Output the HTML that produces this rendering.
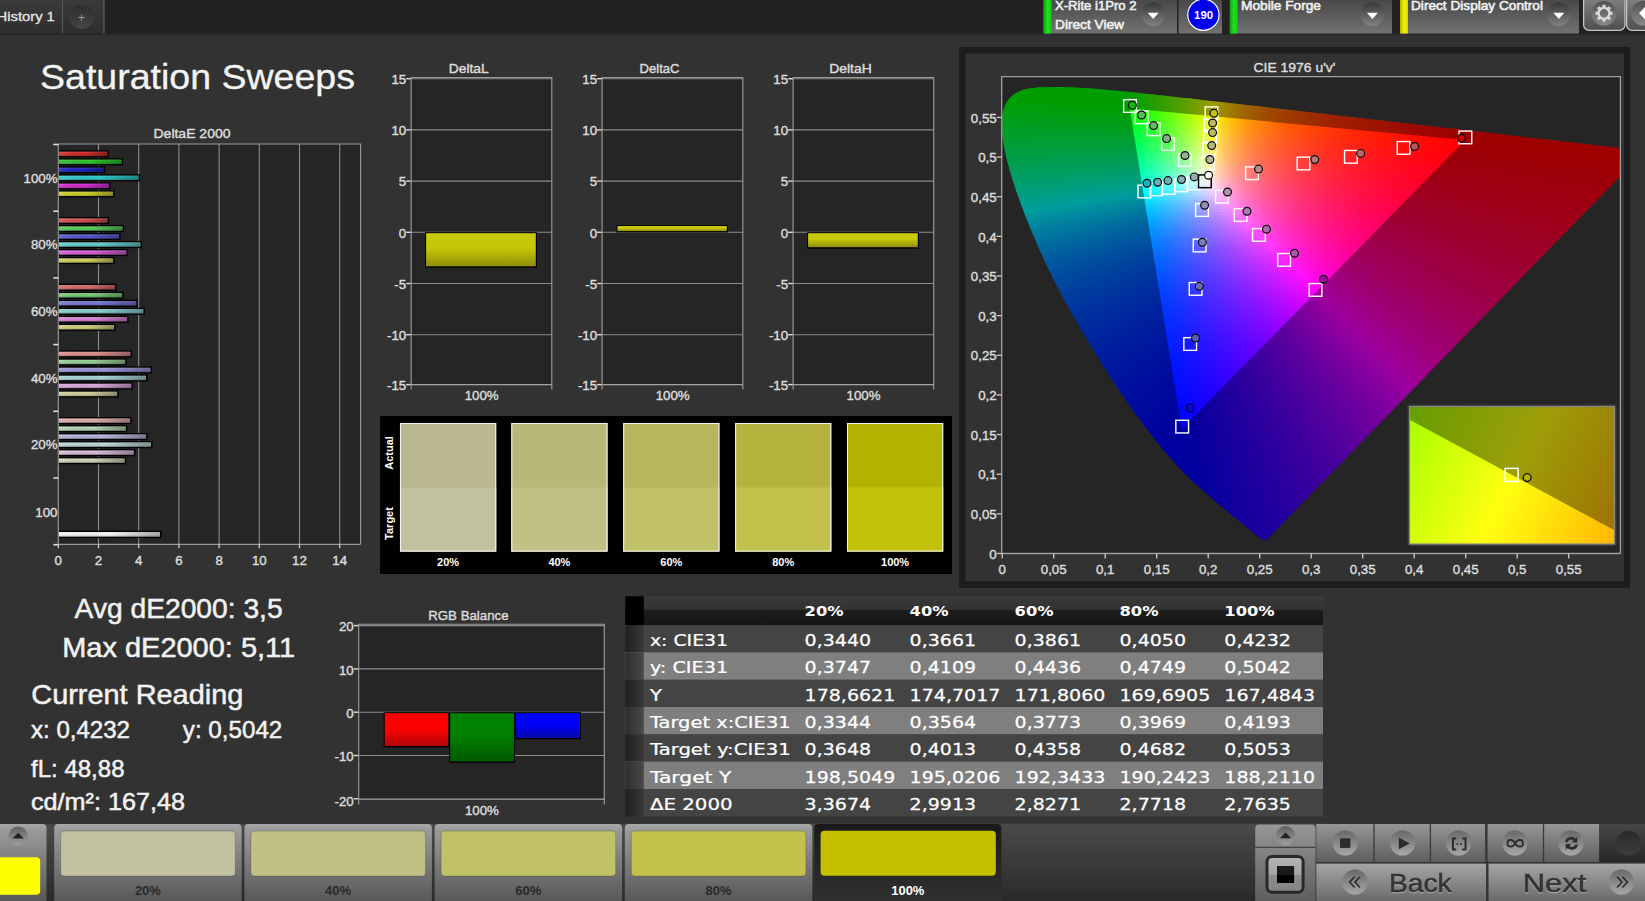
<!DOCTYPE html>
<html lang="en"><head><meta charset="utf-8"><title>Saturation Sweeps</title>
<style>
html,body{margin:0;padding:0;background:#323232;overflow:hidden}
body{width:1645px;height:901px;position:relative;font-family:"Liberation Sans",sans-serif}
svg{position:absolute;left:0;top:0;font-family:"Liberation Sans",sans-serif}
#cief{position:absolute;left:1001.7px;top:76.6px;width:618.7px;height:476.9px;overflow:hidden;clip-path:polygon(265.14px 462.86px,264px 463.38px,260.38px 462.63px,259.12px 461.88px,257.73px 460.92px,256.09px 459.68px,254.06px 458.08px,251.66px 456.14px,248.94px 453.88px,245.82px 451.27px,242.2px 448.27px,238.13px 444.97px,233.63px 441.36px,228.59px 437.25px,222.87px 432.48px,215.99px 426.66px,208.18px 419.99px,200.35px 413.19px,193.47px 407.01px,188.05px 401.94px,183.51px 397.51px,179.08px 392.91px,174.01px 387.34px,168.11px 380.67px,161.78px 373.29px,155.12px 365.21px,148.18px 356.42px,140.95px 346.89px,133.39px 336.64px,125.61px 325.7px,117.7px 314.14px,109.58px 301.81px,101.24px 288.73px,92.86px 275.21px,84.62px 261.5px,76.41px 247.5px,68.19px 233.11px,60.23px 218.65px,52.79px 204.44px,45.89px 190.37px,39.42px 176.35px,33.41px 162.67px,27.91px 149.62px,22.94px 137.18px,18.46px 125.23px,14.49px 113.92px,11.03px 103.41px,8.12px 93.74px,5.74px 84.84px,3.83px 76.64px,2.3px 69.06px,1.18px 62.18px,0.49px 55.99px,0.18px 50.36px,0.19px 45.15px,0.53px 40.38px,1.22px 36.09px,2.23px 32.23px,3.51px 28.72px,5.1px 25.57px,6.98px 22.81px,9.12px 20.4px,11.44px 18.29px,13.97px 16.52px,16.72px 15.1px,19.64px 13.94px,22.68px 12.97px,25.85px 12.21px,29.16px 11.68px,32.58px 11.31px,36.06px 11px,39.61px 10.76px,43.26px 10.62px,46.95px 10.56px,50.64px 10.52px,54.31px 10.5px,57.99px 10.53px,61.7px 10.6px,65.45px 10.7px,69.24px 10.83px,73.06px 11px,76.94px 11.19px,80.9px 11.42px,84.94px 11.68px,89.06px 11.96px,93.25px 12.27px,97.54px 12.61px,101.92px 12.98px,106.39px 13.38px,110.95px 13.8px,115.63px 14.24px,120.42px 14.7px,125.32px 15.19px,130.34px 15.7px,135.51px 16.24px,140.81px 16.79px,146.25px 17.37px,151.82px 17.97px,157.55px 18.59px,163.41px 19.24px,169.42px 19.9px,175.58px 20.59px,181.91px 21.3px,188.41px 22.03px,195.08px 22.77px,201.91px 23.54px,208.9px 24.33px,216.06px 25.15px,223.39px 25.98px,230.88px 26.84px,238.55px 27.72px,246.39px 28.61px,254.39px 29.53px,262.56px 30.47px,270.89px 31.42px,279.39px 32.4px,288.05px 33.39px,296.85px 34.4px,305.74px 35.42px,314.73px 36.45px,323.87px 37.5px,333.1px 38.56px,342.37px 39.63px,351.74px 40.71px,361.2px 41.81px,370.65px 42.91px,380px 43.99px,389.22px 45.05px,398.37px 46.11px,407.46px 47.15px,416.48px 48.19px,425.5px 49.23px,434.5px 50.27px,443.36px 51.29px,451.98px 52.28px,459.78px 53.17px,466.99px 54px,474.74px 54.88px,484.15px 55.96px,496.22px 57.35px,510.13px 58.97px,524.21px 60.6px,536.77px 62.05px,547.41px 63.28px,557.01px 64.38px,565.83px 65.39px,574.1px 66.34px,581.85px 67.24px,588.97px 68.07px,595.49px 68.82px,601.43px 69.51px,606.75px 70.12px,611.46px 70.65px,615.65px 71.13px,619.41px 71.56px,622.63px 71.93px,625.3px 72.24px,627.7px 72.52px,630.11px 72.8px,632.66px 73.09px,635.19px 73.38px,637.5px 73.65px,639.39px 73.87px,642.99px 74.29px)}#cief i{display:block;height:3px}
</style></head><body>
<svg id="layer1" width="1645" height="901" viewBox="0 0 1645 901">
<defs>
<linearGradient id="gTab" x1="0" y1="0" x2="0" y2="1"><stop offset="0" stop-color="#3a3a3a"/><stop offset="1" stop-color="#2e2e2e"/></linearGradient>
<linearGradient id="gPlus" x1="0" y1="0" x2="0" y2="1"><stop offset="0" stop-color="#2c2c2c"/><stop offset="1" stop-color="#464646"/></linearGradient>
<linearGradient id="gPanel" x1="0" y1="0" x2="0" y2="1"><stop offset="0" stop-color="#484848"/><stop offset="1" stop-color="#727272"/></linearGradient>
<linearGradient id="gBtn" x1="0" y1="0" x2="0" y2="1"><stop offset="0" stop-color="#868686"/><stop offset="1" stop-color="#4e4e4e"/></linearGradient>
<linearGradient id="gDD" x1="0" y1="0" x2="0" y2="1"><stop offset="0" stop-color="#383838"/><stop offset="1" stop-color="#828282"/></linearGradient>
<linearGradient id="gDD2" x1="0" y1="0" x2="0" y2="1"><stop offset="0" stop-color="#505050"/><stop offset="1" stop-color="#8a8a8a"/></linearGradient>
<linearGradient id="gGreen" x1="0" y1="0" x2="1" y2="0"><stop offset="0" stop-color="#0fa00f"/><stop offset=".5" stop-color="#1fe01f"/><stop offset="1" stop-color="#14c814"/></linearGradient>
<linearGradient id="gYel" x1="0" y1="0" x2="1" y2="0"><stop offset="0" stop-color="#b0b000"/><stop offset=".5" stop-color="#f4f400"/><stop offset="1" stop-color="#d8d800"/></linearGradient>

<linearGradient id="gBarV" x1="0" y1="0" x2="0" y2="1"><stop offset="0" stop-color="#fff" stop-opacity=".22"/><stop offset=".45" stop-color="#fff" stop-opacity="0"/><stop offset="1" stop-color="#000" stop-opacity=".28"/></linearGradient>
<linearGradient id="gBarH" x1="0" y1="0" x2="1" y2="0"><stop offset="0" stop-color="#fff" stop-opacity=".12"/><stop offset=".5" stop-color="#000" stop-opacity="0"/><stop offset="1" stop-color="#000" stop-opacity=".32"/></linearGradient>

<linearGradient id="gYelBar" x1="0" y1="0" x2="0" y2="1"><stop offset="0" stop-color="#c8c808"/><stop offset=".45" stop-color="#c6c606"/><stop offset="1" stop-color="#8e8e0a"/></linearGradient>
<linearGradient id="gR" x1="0" y1="0" x2="0" y2="1"><stop offset="0" stop-color="#ff0000"/><stop offset=".5" stop-color="#fa0000"/><stop offset="1" stop-color="#b00808"/></linearGradient>
<linearGradient id="gG" x1="0" y1="0" x2="0" y2="1"><stop offset="0" stop-color="#008200"/><stop offset=".5" stop-color="#007e00"/><stop offset="1" stop-color="#005a00"/></linearGradient>
<linearGradient id="gB" x1="0" y1="0" x2="0" y2="1"><stop offset="0" stop-color="#0000ff"/><stop offset=".5" stop-color="#0000f6"/><stop offset="1" stop-color="#0808a8"/></linearGradient>

<linearGradient id="gInset" gradientUnits="userSpaceOnUse" x1="1395" y1="420" x2="1630" y2="535"><stop offset="0" stop-color="#a0ff00"/><stop offset=".5" stop-color="#ffff10"/><stop offset="1" stop-color="#ffb000"/></linearGradient>

<linearGradient id="gTH" x1="0" y1="0" x2="0" y2="1"><stop offset="0" stop-color="#3a3a3a"/><stop offset=".46" stop-color="#323232"/><stop offset=".5" stop-color="#1c1c1c"/><stop offset="1" stop-color="#161616"/></linearGradient>
<linearGradient id="gSel2" x1="0" y1="0" x2="1" y2="0"><stop offset="0" stop-color="#2c2c2c"/><stop offset="1" stop-color="#4a4a4a"/></linearGradient>
<linearGradient id="gSel" x1="0" y1="0" x2="1" y2="0"><stop offset="0" stop-color="#202020"/><stop offset="1" stop-color="#383838"/></linearGradient>

<linearGradient id="gBotBg" x1="0" y1="0" x2="0" y2="1"><stop offset="0" stop-color="#4a4a4a"/><stop offset="1" stop-color="#2a2a2a"/></linearGradient>
<linearGradient id="gSelP" x1="0" y1="0" x2="0" y2="1"><stop offset="0" stop-color="#1a1a1a"/><stop offset="1" stop-color="#303030"/></linearGradient>
<linearGradient id="gPan" x1="0" y1="0" x2="0" y2="1"><stop offset="0" stop-color="#a8a8a8"/><stop offset=".08" stop-color="#9a9a9a"/><stop offset="1" stop-color="#585858"/></linearGradient>
<linearGradient id="gPan2" x1="0" y1="0" x2="0" y2="1"><stop offset="0" stop-color="#969696"/><stop offset="1" stop-color="#5e5e5e"/></linearGradient>
<linearGradient id="gPan3" x1="0" y1="0" x2="0" y2="1"><stop offset="0" stop-color="#a6a6a6"/><stop offset="1" stop-color="#6a6a6a"/></linearGradient>
<linearGradient id="gUp" x1="0" y1="0" x2="0" y2="1"><stop offset="0" stop-color="#606060"/><stop offset="1" stop-color="#a0a0a0"/></linearGradient>
<linearGradient id="gIco" x1="0" y1="0" x2="0" y2="1"><stop offset="0" stop-color="#686868"/><stop offset="1" stop-color="#a8a8a8"/></linearGradient>
<linearGradient id="gStopBtn" x1="0" y1="0" x2="0" y2="1"><stop offset="0" stop-color="#b4b4b4"/><stop offset=".5" stop-color="#a4a4a4"/><stop offset=".52" stop-color="#8c8c8c"/><stop offset="1" stop-color="#848484"/></linearGradient>
<linearGradient id="gStopSq" x1="0" y1="0" x2="0" y2="1"><stop offset="0" stop-color="#1c1c1c"/><stop offset=".5" stop-color="#181818"/><stop offset=".52" stop-color="#000"/><stop offset="1" stop-color="#000"/></linearGradient>
<linearGradient id="gDarkR" x1="0" y1="0" x2="0" y2="1"><stop offset="0" stop-color="#464646"/><stop offset="1" stop-color="#282828"/></linearGradient>
<linearGradient id="gDarkC" x1="0" y1="0" x2="0" y2="1"><stop offset="0" stop-color="#2a2a2a"/><stop offset="1" stop-color="#3c3c3c"/></linearGradient>
</defs>
<g id="topbar"><rect x="0" y="0" width="1645" height="34.5" fill="#222"/>
<rect x="0" y="0" width="62" height="33.5" fill="url(#gTab)"/>
<rect x="63" y="0" width="41" height="33.5" fill="url(#gTab)"/>
<line x1="62.5" y1="0" x2="62.5" y2="33.5" stroke="#5a5a5a" stroke-width="1"/>
<line x1="104" y1="0" x2="104" y2="33.5" stroke="#6a6a6a" stroke-width="1"/>
<text x="-3.4" y="21.3" font-size="13.6" fill="#e6e6e6" stroke="#e6e6e6" stroke-width="0.3" textLength="58.2" lengthAdjust="spacingAndGlyphs">History 1</text>
<circle cx="81.5" cy="17" r="12" fill="url(#gPlus)"/>
<text x="81.5" y="22" font-size="13" fill="#999" text-anchor="middle">+</text>
<rect x="1043.5" y="0" width="133.5" height="33.5" fill="url(#gPanel)"/>
<rect x="1043.5" y="0" width="8" height="33.5" fill="url(#gGreen)"/>
<text x="1055" y="9.8" font-size="12.2" fill="#f0f0f0" stroke="#f0f0f0" stroke-width="0.55" textLength="81.5" lengthAdjust="spacingAndGlyphs">X-Rite i1Pro 2</text>
<text x="1055" y="28.6" font-size="12.2" fill="#f0f0f0" stroke="#f0f0f0" stroke-width="0.55" textLength="69" lengthAdjust="spacingAndGlyphs">Direct View</text>
<circle cx="1153.2" cy="14.3" r="12" fill="url(#gDD)"/>
<path d="M1147.7 12.7 h11 l-5.5 6.4z" fill="#fff"/>
<rect x="1178.5" y="0" width="43.5" height="33.5" fill="url(#gPanel)"/>
<circle cx="1203.4" cy="14.7" r="15.6" fill="#0000ee" stroke="#fff" stroke-width="1.2"/>
<text x="1203.6" y="19" font-size="11.5" fill="#fff" text-anchor="middle" font-weight="700" textLength="19" lengthAdjust="spacingAndGlyphs">190</text>
<rect x="1229.8" y="0" width="162.2" height="33.5" fill="url(#gPanel)"/>
<rect x="1229.8" y="0" width="8" height="33.5" fill="url(#gGreen)"/>
<text x="1241" y="9.8" font-size="12.2" fill="#f0f0f0" stroke="#f0f0f0" stroke-width="0.55" textLength="80" lengthAdjust="spacingAndGlyphs">Mobile Forge</text>
<circle cx="1372.4" cy="14.3" r="12" fill="url(#gDD)"/>
<path d="M1366.9 12.7 h11 l-5.5 6.4z" fill="#fff"/>
<rect x="1400" y="0" width="179" height="33.5" fill="url(#gPanel)"/>
<rect x="1400" y="0" width="8" height="33.5" fill="url(#gYel)"/>
<text x="1411" y="9.8" font-size="12.2" fill="#f0f0f0" stroke="#f0f0f0" stroke-width="0.55" textLength="132" lengthAdjust="spacingAndGlyphs">Direct Display Control</text>
<circle cx="1558.8" cy="14.3" r="12" fill="url(#gDD)"/>
<path d="M1553.3 12.7 h11 l-5.5 6.4z" fill="#fff"/>
<rect x="1583.6" y="-6" width="41.4" height="36.4" rx="5.5" fill="url(#gBtn)" stroke="#c4c4c4" stroke-width="1.3"/>
<circle cx="1604" cy="13.3" r="12.3" fill="url(#gDD2)"/>
<path d="M1612.48 11.85 L1612.48 14.75 L1610.36 15.06 L1609.74 16.55 L1611.02 18.26 L1608.96 20.32 L1607.25 19.04 L1605.76 19.66 L1605.45 21.78 L1602.55 21.78 L1602.24 19.66 L1600.75 19.04 L1599.04 20.32 L1596.98 18.26 L1598.26 16.55 L1597.64 15.06 L1595.52 14.75 L1595.52 11.85 L1597.64 11.54 L1598.26 10.05 L1596.98 8.34 L1599.04 6.28 L1600.75 7.56 L1602.24 6.94 L1602.55 4.82 L1605.45 4.82 L1605.76 6.94 L1607.25 7.56 L1608.96 6.28 L1611.02 8.34 L1609.74 10.05 L1610.36 11.54Z M1604 9.1 a4.2 4.2 0 1 0 0.01 0z" fill="#d8d8d8" fill-rule="evenodd"/>
<rect x="1626.6" y="-6" width="41.4" height="36.4" rx="5.5" fill="url(#gBtn)" stroke="#c4c4c4" stroke-width="1.3"/>
<circle cx="1643.5" cy="13.3" r="12.3" fill="url(#gDD2)"/>
<path d="M1646 6 L1639 13.2 L1646 20.4z" fill="#fff"/></g>
<g id="left"><text x="40" y="89" font-size="35.2" fill="#f4f4f4" stroke="#f4f4f4" stroke-width="0.3" textLength="315" lengthAdjust="spacingAndGlyphs">Saturation Sweeps</text>
<text x="192" y="138" font-size="13" fill="#dcdcdc" stroke="#dcdcdc" stroke-width="0.4" text-anchor="middle" textLength="77" lengthAdjust="spacingAndGlyphs">DeltaE 2000</text>
<rect x="58.3" y="144" width="302.3" height="400.3" fill="#252525"/>
<line x1="98.5" y1="144" x2="98.5" y2="544.3" stroke="#8c8c8c" stroke-width="1.1"/>
<line x1="138.7" y1="144" x2="138.7" y2="544.3" stroke="#8c8c8c" stroke-width="1.1"/>
<line x1="178.9" y1="144" x2="178.9" y2="544.3" stroke="#8c8c8c" stroke-width="1.1"/>
<line x1="219.1" y1="144" x2="219.1" y2="544.3" stroke="#8c8c8c" stroke-width="1.1"/>
<line x1="259.3" y1="144" x2="259.3" y2="544.3" stroke="#8c8c8c" stroke-width="1.1"/>
<line x1="299.5" y1="144" x2="299.5" y2="544.3" stroke="#8c8c8c" stroke-width="1.1"/>
<line x1="339.7" y1="144" x2="339.7" y2="544.3" stroke="#8c8c8c" stroke-width="1.1"/>
<path d="M58.3 544.3 V144 H360.6 V544.3" fill="none" stroke="#9a9a9a" stroke-width="1.15"/>
<line x1="58.3" y1="544.3" x2="360.6" y2="544.3" stroke="#9a9a9a" stroke-width="1.3"/>
<line x1="53.3" y1="144.5" x2="58.3" y2="144.5" stroke="#ddd" stroke-width="1.6"/>
<line x1="53.3" y1="211.2" x2="58.3" y2="211.2" stroke="#ddd" stroke-width="1.6"/>
<line x1="53.3" y1="277.9" x2="58.3" y2="277.9" stroke="#ddd" stroke-width="1.6"/>
<line x1="53.3" y1="344.6" x2="58.3" y2="344.6" stroke="#ddd" stroke-width="1.6"/>
<line x1="53.3" y1="411.3" x2="58.3" y2="411.3" stroke="#ddd" stroke-width="1.6"/>
<line x1="53.3" y1="478" x2="58.3" y2="478" stroke="#ddd" stroke-width="1.6"/>
<line x1="53.3" y1="544.7" x2="58.3" y2="544.7" stroke="#ddd" stroke-width="1.6"/>
<line x1="58.3" y1="544.3" x2="58.3" y2="548.3" stroke="#ccc" stroke-width="1.3"/>
<text x="58.3" y="565" font-size="13.3" fill="#dcdcdc" stroke="#dcdcdc" stroke-width="0.4" text-anchor="middle">0</text>
<line x1="98.5" y1="544.3" x2="98.5" y2="548.3" stroke="#ccc" stroke-width="1.3"/>
<text x="98.5" y="565" font-size="13.3" fill="#dcdcdc" stroke="#dcdcdc" stroke-width="0.4" text-anchor="middle">2</text>
<line x1="138.7" y1="544.3" x2="138.7" y2="548.3" stroke="#ccc" stroke-width="1.3"/>
<text x="138.7" y="565" font-size="13.3" fill="#dcdcdc" stroke="#dcdcdc" stroke-width="0.4" text-anchor="middle">4</text>
<line x1="178.9" y1="544.3" x2="178.9" y2="548.3" stroke="#ccc" stroke-width="1.3"/>
<text x="178.9" y="565" font-size="13.3" fill="#dcdcdc" stroke="#dcdcdc" stroke-width="0.4" text-anchor="middle">6</text>
<line x1="219.1" y1="544.3" x2="219.1" y2="548.3" stroke="#ccc" stroke-width="1.3"/>
<text x="219.1" y="565" font-size="13.3" fill="#dcdcdc" stroke="#dcdcdc" stroke-width="0.4" text-anchor="middle">8</text>
<line x1="259.3" y1="544.3" x2="259.3" y2="548.3" stroke="#ccc" stroke-width="1.3"/>
<text x="259.3" y="565" font-size="13.3" fill="#dcdcdc" stroke="#dcdcdc" stroke-width="0.4" text-anchor="middle">10</text>
<line x1="299.5" y1="544.3" x2="299.5" y2="548.3" stroke="#ccc" stroke-width="1.3"/>
<text x="299.5" y="565" font-size="13.3" fill="#dcdcdc" stroke="#dcdcdc" stroke-width="0.4" text-anchor="middle">12</text>
<line x1="339.7" y1="544.3" x2="339.7" y2="548.3" stroke="#ccc" stroke-width="1.3"/>
<text x="339.7" y="565" font-size="13.3" fill="#dcdcdc" stroke="#dcdcdc" stroke-width="0.4" text-anchor="middle">14</text>
<text x="57.5" y="182.65" font-size="13.3" fill="#dcdcdc" stroke="#dcdcdc" stroke-width="0.4" text-anchor="end">100%</text>
<text x="57.5" y="249.35" font-size="13.3" fill="#dcdcdc" stroke="#dcdcdc" stroke-width="0.4" text-anchor="end">80%</text>
<text x="57.5" y="316.05" font-size="13.3" fill="#dcdcdc" stroke="#dcdcdc" stroke-width="0.4" text-anchor="end">60%</text>
<text x="57.5" y="382.75" font-size="13.3" fill="#dcdcdc" stroke="#dcdcdc" stroke-width="0.4" text-anchor="end">40%</text>
<text x="57.5" y="449.45" font-size="13.3" fill="#dcdcdc" stroke="#dcdcdc" stroke-width="0.4" text-anchor="end">20%</text>
<text x="57.5" y="516.95" font-size="13.3" fill="#dcdcdc" stroke="#dcdcdc" stroke-width="0.4" text-anchor="end">100</text>
<rect x="58.9" y="150.25" width="50.1" height="7.2" fill="#000"/>
<rect x="58.9" y="151.65" width="48.6" height="4.4" fill="#d02020"/>
<rect x="58.9" y="151.65" width="48.6" height="4.4" fill="url(#gBarV)"/>
<rect x="58.9" y="151.65" width="48.6" height="4.4" fill="url(#gBarH)"/>
<rect x="58.9" y="158.25" width="64.2" height="7.2" fill="#000"/>
<rect x="58.9" y="159.65" width="62.7" height="4.4" fill="#20c020"/>
<rect x="58.9" y="159.65" width="62.7" height="4.4" fill="url(#gBarV)"/>
<rect x="58.9" y="159.65" width="62.7" height="4.4" fill="url(#gBarH)"/>
<rect x="58.9" y="166.25" width="46.4" height="7.2" fill="#000"/>
<rect x="58.9" y="167.65" width="44.9" height="4.4" fill="#1818c0"/>
<rect x="58.9" y="167.65" width="44.9" height="4.4" fill="url(#gBarV)"/>
<rect x="58.9" y="167.65" width="44.9" height="4.4" fill="url(#gBarH)"/>
<rect x="58.9" y="174.25" width="81.1" height="7.2" fill="#000"/>
<rect x="58.9" y="175.65" width="79.6" height="4.4" fill="#20c4c4"/>
<rect x="58.9" y="175.65" width="79.6" height="4.4" fill="url(#gBarV)"/>
<rect x="58.9" y="175.65" width="79.6" height="4.4" fill="url(#gBarH)"/>
<rect x="58.9" y="182.25" width="51.7" height="7.2" fill="#000"/>
<rect x="58.9" y="183.65" width="50.2" height="4.4" fill="#d020d0"/>
<rect x="58.9" y="183.65" width="50.2" height="4.4" fill="url(#gBarV)"/>
<rect x="58.9" y="183.65" width="50.2" height="4.4" fill="url(#gBarH)"/>
<rect x="58.9" y="190.25" width="55.7" height="7.2" fill="#000"/>
<rect x="58.9" y="191.65" width="54.2" height="4.4" fill="#cccc20"/>
<rect x="58.9" y="191.65" width="54.2" height="4.4" fill="url(#gBarV)"/>
<rect x="58.9" y="191.65" width="54.2" height="4.4" fill="url(#gBarH)"/>
<rect x="58.9" y="216.95" width="50.1" height="7.2" fill="#000"/>
<rect x="58.9" y="218.35" width="48.6" height="4.4" fill="#d24848"/>
<rect x="58.9" y="218.35" width="48.6" height="4.4" fill="url(#gBarV)"/>
<rect x="58.9" y="218.35" width="48.6" height="4.4" fill="url(#gBarH)"/>
<rect x="58.9" y="224.95" width="65.1" height="7.2" fill="#000"/>
<rect x="58.9" y="226.35" width="63.6" height="4.4" fill="#50c850"/>
<rect x="58.9" y="226.35" width="63.6" height="4.4" fill="url(#gBarV)"/>
<rect x="58.9" y="226.35" width="63.6" height="4.4" fill="url(#gBarH)"/>
<rect x="58.9" y="232.95" width="61.7" height="7.2" fill="#000"/>
<rect x="58.9" y="234.35" width="60.2" height="4.4" fill="#5050cc"/>
<rect x="58.9" y="234.35" width="60.2" height="4.4" fill="url(#gBarV)"/>
<rect x="58.9" y="234.35" width="60.2" height="4.4" fill="url(#gBarH)"/>
<rect x="58.9" y="240.95" width="83.1" height="7.2" fill="#000"/>
<rect x="58.9" y="242.35" width="81.6" height="4.4" fill="#5cc8c8"/>
<rect x="58.9" y="242.35" width="81.6" height="4.4" fill="url(#gBarV)"/>
<rect x="58.9" y="242.35" width="81.6" height="4.4" fill="url(#gBarH)"/>
<rect x="58.9" y="248.95" width="68.9" height="7.2" fill="#000"/>
<rect x="58.9" y="250.35" width="67.4" height="4.4" fill="#d458d4"/>
<rect x="58.9" y="250.35" width="67.4" height="4.4" fill="url(#gBarV)"/>
<rect x="58.9" y="250.35" width="67.4" height="4.4" fill="url(#gBarH)"/>
<rect x="58.9" y="256.95" width="55.7" height="7.2" fill="#000"/>
<rect x="58.9" y="258.35" width="54.2" height="4.4" fill="#cccc58"/>
<rect x="58.9" y="258.35" width="54.2" height="4.4" fill="url(#gBarV)"/>
<rect x="58.9" y="258.35" width="54.2" height="4.4" fill="url(#gBarH)"/>
<rect x="58.9" y="283.65" width="57.7" height="7.2" fill="#000"/>
<rect x="58.9" y="285.05" width="56.2" height="4.4" fill="#d46464"/>
<rect x="58.9" y="285.05" width="56.2" height="4.4" fill="url(#gBarV)"/>
<rect x="58.9" y="285.05" width="56.2" height="4.4" fill="url(#gBarH)"/>
<rect x="58.9" y="291.65" width="64.7" height="7.2" fill="#000"/>
<rect x="58.9" y="293.05" width="63.2" height="4.4" fill="#70c870"/>
<rect x="58.9" y="293.05" width="63.2" height="4.4" fill="url(#gBarV)"/>
<rect x="58.9" y="293.05" width="63.2" height="4.4" fill="url(#gBarH)"/>
<rect x="58.9" y="299.65" width="78.9" height="7.2" fill="#000"/>
<rect x="58.9" y="301.05" width="77.4" height="4.4" fill="#7070d0"/>
<rect x="58.9" y="301.05" width="77.4" height="4.4" fill="url(#gBarV)"/>
<rect x="58.9" y="301.05" width="77.4" height="4.4" fill="url(#gBarH)"/>
<rect x="58.9" y="307.65" width="85.9" height="7.2" fill="#000"/>
<rect x="58.9" y="309.05" width="84.4" height="4.4" fill="#80cccc"/>
<rect x="58.9" y="309.05" width="84.4" height="4.4" fill="url(#gBarV)"/>
<rect x="58.9" y="309.05" width="84.4" height="4.4" fill="url(#gBarH)"/>
<rect x="58.9" y="315.65" width="69.7" height="7.2" fill="#000"/>
<rect x="58.9" y="317.05" width="68.2" height="4.4" fill="#d47cd4"/>
<rect x="58.9" y="317.05" width="68.2" height="4.4" fill="url(#gBarV)"/>
<rect x="58.9" y="317.05" width="68.2" height="4.4" fill="url(#gBarH)"/>
<rect x="58.9" y="323.65" width="56.7" height="7.2" fill="#000"/>
<rect x="58.9" y="325.05" width="55.2" height="4.4" fill="#cccc78"/>
<rect x="58.9" y="325.05" width="55.2" height="4.4" fill="url(#gBarV)"/>
<rect x="58.9" y="325.05" width="55.2" height="4.4" fill="url(#gBarH)"/>
<rect x="58.9" y="350.35" width="73.1" height="7.2" fill="#000"/>
<rect x="58.9" y="351.75" width="71.6" height="4.4" fill="#d88888"/>
<rect x="58.9" y="351.75" width="71.6" height="4.4" fill="url(#gBarV)"/>
<rect x="58.9" y="351.75" width="71.6" height="4.4" fill="url(#gBarH)"/>
<rect x="58.9" y="358.35" width="67.7" height="7.2" fill="#000"/>
<rect x="58.9" y="359.75" width="66.2" height="4.4" fill="#90cc90"/>
<rect x="58.9" y="359.75" width="66.2" height="4.4" fill="url(#gBarV)"/>
<rect x="58.9" y="359.75" width="66.2" height="4.4" fill="url(#gBarH)"/>
<rect x="58.9" y="366.35" width="93.1" height="7.2" fill="#000"/>
<rect x="58.9" y="367.75" width="91.6" height="4.4" fill="#9090d4"/>
<rect x="58.9" y="367.75" width="91.6" height="4.4" fill="url(#gBarV)"/>
<rect x="58.9" y="367.75" width="91.6" height="4.4" fill="url(#gBarH)"/>
<rect x="58.9" y="374.35" width="88.6" height="7.2" fill="#000"/>
<rect x="58.9" y="375.75" width="87.1" height="4.4" fill="#a0d0d0"/>
<rect x="58.9" y="375.75" width="87.1" height="4.4" fill="url(#gBarV)"/>
<rect x="58.9" y="375.75" width="87.1" height="4.4" fill="url(#gBarH)"/>
<rect x="58.9" y="382.35" width="73.9" height="7.2" fill="#000"/>
<rect x="58.9" y="383.75" width="72.4" height="4.4" fill="#d8a0d8"/>
<rect x="58.9" y="383.75" width="72.4" height="4.4" fill="url(#gBarV)"/>
<rect x="58.9" y="383.75" width="72.4" height="4.4" fill="url(#gBarH)"/>
<rect x="58.9" y="390.35" width="59.7" height="7.2" fill="#000"/>
<rect x="58.9" y="391.75" width="58.2" height="4.4" fill="#cccc98"/>
<rect x="58.9" y="391.75" width="58.2" height="4.4" fill="url(#gBarV)"/>
<rect x="58.9" y="391.75" width="58.2" height="4.4" fill="url(#gBarH)"/>
<rect x="58.9" y="417.05" width="72.7" height="7.2" fill="#000"/>
<rect x="58.9" y="418.45" width="71.2" height="4.4" fill="#dca8a8"/>
<rect x="58.9" y="418.45" width="71.2" height="4.4" fill="url(#gBarV)"/>
<rect x="58.9" y="418.45" width="71.2" height="4.4" fill="url(#gBarH)"/>
<rect x="58.9" y="425.05" width="68.5" height="7.2" fill="#000"/>
<rect x="58.9" y="426.45" width="67" height="4.4" fill="#b0d2b0"/>
<rect x="58.9" y="426.45" width="67" height="4.4" fill="url(#gBarV)"/>
<rect x="58.9" y="426.45" width="67" height="4.4" fill="url(#gBarH)"/>
<rect x="58.9" y="433.05" width="88.7" height="7.2" fill="#000"/>
<rect x="58.9" y="434.45" width="87.2" height="4.4" fill="#b0b0d8"/>
<rect x="58.9" y="434.45" width="87.2" height="4.4" fill="url(#gBarV)"/>
<rect x="58.9" y="434.45" width="87.2" height="4.4" fill="url(#gBarH)"/>
<rect x="58.9" y="441.05" width="93.6" height="7.2" fill="#000"/>
<rect x="58.9" y="442.45" width="92.1" height="4.4" fill="#b8d4d4"/>
<rect x="58.9" y="442.45" width="92.1" height="4.4" fill="url(#gBarV)"/>
<rect x="58.9" y="442.45" width="92.1" height="4.4" fill="url(#gBarH)"/>
<rect x="58.9" y="449.05" width="76.4" height="7.2" fill="#000"/>
<rect x="58.9" y="450.45" width="74.9" height="4.4" fill="#d8b8d8"/>
<rect x="58.9" y="450.45" width="74.9" height="4.4" fill="url(#gBarV)"/>
<rect x="58.9" y="450.45" width="74.9" height="4.4" fill="url(#gBarH)"/>
<rect x="58.9" y="457.05" width="67.3" height="7.2" fill="#000"/>
<rect x="58.9" y="458.45" width="65.8" height="4.4" fill="#d0d0b4"/>
<rect x="58.9" y="458.45" width="65.8" height="4.4" fill="url(#gBarV)"/>
<rect x="58.9" y="458.45" width="65.8" height="4.4" fill="url(#gBarH)"/>
<rect x="58.9" y="530.65" width="102.6" height="7.4" fill="#000"/>
<rect x="58.9" y="532.05" width="101.1" height="4.6" fill="#f4f4f4"/>
<rect x="58.9" y="532.05" width="101.1" height="4.6" fill="url(#gBarV)"/>
<rect x="58.9" y="532.05" width="101.1" height="4.6" fill="url(#gBarH)"/>
<text x="74.6" y="618.2" font-size="28" fill="#f2f2f2" stroke="#f2f2f2" stroke-width="0.5" textLength="208" lengthAdjust="spacingAndGlyphs">Avg dE2000: 3,5</text>
<text x="62.2" y="657.4" font-size="28" fill="#f2f2f2" stroke="#f2f2f2" stroke-width="0.5" textLength="233" lengthAdjust="spacingAndGlyphs">Max dE2000: 5,11</text>
<text x="31.3" y="703.7" font-size="28" fill="#f2f2f2" stroke="#f2f2f2" stroke-width="0.5" textLength="212" lengthAdjust="spacingAndGlyphs">Current Reading</text>
<text x="31" y="737.7" font-size="24" fill="#f2f2f2" stroke="#f2f2f2" stroke-width="0.5" textLength="99" lengthAdjust="spacingAndGlyphs">x: 0,4232</text>
<text x="182.8" y="737.7" font-size="24" fill="#f2f2f2" stroke="#f2f2f2" stroke-width="0.5" textLength="99.5" lengthAdjust="spacingAndGlyphs">y: 0,5042</text>
<text x="31" y="777.2" font-size="24" fill="#f2f2f2" stroke="#f2f2f2" stroke-width="0.5" textLength="93.5" lengthAdjust="spacingAndGlyphs">fL: 48,88</text>
<text x="31" y="810.4" font-size="24" fill="#f2f2f2" stroke="#f2f2f2" stroke-width="0.5" textLength="154" lengthAdjust="spacingAndGlyphs">cd/m²: 167,48</text></g>
<g id="mid"><text x="468.7" y="72.6" font-size="13" fill="#dcdcdc" stroke="#dcdcdc" stroke-width="0.4" text-anchor="middle" textLength="40" lengthAdjust="spacingAndGlyphs">DeltaL</text>
<rect x="411.2" y="77.5" width="140.6" height="307.1" fill="#252525"/>
<line x1="411.2" y1="78.7" x2="551.8" y2="78.7" stroke="#8c8c8c" stroke-width="1.1"/>
<line x1="406.2" y1="78.7" x2="411.2" y2="78.7" stroke="#ddd" stroke-width="1.4"/>
<text x="406.2" y="83.9" font-size="13.3" fill="#dcdcdc" stroke="#dcdcdc" stroke-width="0.4" text-anchor="end">15</text>
<line x1="411.2" y1="129.9" x2="551.8" y2="129.9" stroke="#8c8c8c" stroke-width="1.1"/>
<line x1="406.2" y1="129.9" x2="411.2" y2="129.9" stroke="#ddd" stroke-width="1.4"/>
<text x="406.2" y="135.1" font-size="13.3" fill="#dcdcdc" stroke="#dcdcdc" stroke-width="0.4" text-anchor="end">10</text>
<line x1="411.2" y1="181.1" x2="551.8" y2="181.1" stroke="#8c8c8c" stroke-width="1.1"/>
<line x1="406.2" y1="181.1" x2="411.2" y2="181.1" stroke="#ddd" stroke-width="1.4"/>
<text x="406.2" y="186.3" font-size="13.3" fill="#dcdcdc" stroke="#dcdcdc" stroke-width="0.4" text-anchor="end">5</text>
<line x1="411.2" y1="232.3" x2="551.8" y2="232.3" stroke="#8c8c8c" stroke-width="1.1"/>
<line x1="406.2" y1="232.3" x2="411.2" y2="232.3" stroke="#ddd" stroke-width="1.4"/>
<text x="406.2" y="237.5" font-size="13.3" fill="#dcdcdc" stroke="#dcdcdc" stroke-width="0.4" text-anchor="end">0</text>
<line x1="411.2" y1="283.5" x2="551.8" y2="283.5" stroke="#8c8c8c" stroke-width="1.1"/>
<line x1="406.2" y1="283.5" x2="411.2" y2="283.5" stroke="#ddd" stroke-width="1.4"/>
<text x="406.2" y="288.7" font-size="13.3" fill="#dcdcdc" stroke="#dcdcdc" stroke-width="0.4" text-anchor="end">-5</text>
<line x1="411.2" y1="334.7" x2="551.8" y2="334.7" stroke="#8c8c8c" stroke-width="1.1"/>
<line x1="406.2" y1="334.7" x2="411.2" y2="334.7" stroke="#ddd" stroke-width="1.4"/>
<text x="406.2" y="339.9" font-size="13.3" fill="#dcdcdc" stroke="#dcdcdc" stroke-width="0.4" text-anchor="end">-10</text>
<line x1="406.2" y1="384.6" x2="411.2" y2="384.6" stroke="#ddd" stroke-width="1.4"/>
<text x="406.2" y="390.4" font-size="13.3" fill="#dcdcdc" stroke="#dcdcdc" stroke-width="0.4" text-anchor="end">-15</text>
<path d="M411.2 389.6 V77.5 H551.8 V389.6" fill="none" stroke="#9a9a9a" stroke-width="1.15"/>
<line x1="411.2" y1="384.6" x2="551.8" y2="384.6" stroke="#a4a4a4" stroke-width="1.4"/>
<rect x="425.1" y="232.2" width="111.9" height="35.5" fill="#000"/>
<rect x="426.1" y="233.2" width="109.7" height="33.1" fill="url(#gYelBar)"/>
<text x="481.7" y="399.6" font-size="13.3" fill="#dcdcdc" stroke="#dcdcdc" stroke-width="0.4" text-anchor="middle">100%</text>
<text x="659.5" y="72.6" font-size="13" fill="#dcdcdc" stroke="#dcdcdc" stroke-width="0.4" text-anchor="middle" textLength="40" lengthAdjust="spacingAndGlyphs">DeltaC</text>
<rect x="602.1" y="77.5" width="140.7" height="307.1" fill="#252525"/>
<line x1="602.1" y1="78.7" x2="742.8" y2="78.7" stroke="#8c8c8c" stroke-width="1.1"/>
<line x1="597.1" y1="78.7" x2="602.1" y2="78.7" stroke="#ddd" stroke-width="1.4"/>
<text x="597.1" y="83.9" font-size="13.3" fill="#dcdcdc" stroke="#dcdcdc" stroke-width="0.4" text-anchor="end">15</text>
<line x1="602.1" y1="129.9" x2="742.8" y2="129.9" stroke="#8c8c8c" stroke-width="1.1"/>
<line x1="597.1" y1="129.9" x2="602.1" y2="129.9" stroke="#ddd" stroke-width="1.4"/>
<text x="597.1" y="135.1" font-size="13.3" fill="#dcdcdc" stroke="#dcdcdc" stroke-width="0.4" text-anchor="end">10</text>
<line x1="602.1" y1="181.1" x2="742.8" y2="181.1" stroke="#8c8c8c" stroke-width="1.1"/>
<line x1="597.1" y1="181.1" x2="602.1" y2="181.1" stroke="#ddd" stroke-width="1.4"/>
<text x="597.1" y="186.3" font-size="13.3" fill="#dcdcdc" stroke="#dcdcdc" stroke-width="0.4" text-anchor="end">5</text>
<line x1="602.1" y1="232.3" x2="742.8" y2="232.3" stroke="#8c8c8c" stroke-width="1.1"/>
<line x1="597.1" y1="232.3" x2="602.1" y2="232.3" stroke="#ddd" stroke-width="1.4"/>
<text x="597.1" y="237.5" font-size="13.3" fill="#dcdcdc" stroke="#dcdcdc" stroke-width="0.4" text-anchor="end">0</text>
<line x1="602.1" y1="283.5" x2="742.8" y2="283.5" stroke="#8c8c8c" stroke-width="1.1"/>
<line x1="597.1" y1="283.5" x2="602.1" y2="283.5" stroke="#ddd" stroke-width="1.4"/>
<text x="597.1" y="288.7" font-size="13.3" fill="#dcdcdc" stroke="#dcdcdc" stroke-width="0.4" text-anchor="end">-5</text>
<line x1="602.1" y1="334.7" x2="742.8" y2="334.7" stroke="#8c8c8c" stroke-width="1.1"/>
<line x1="597.1" y1="334.7" x2="602.1" y2="334.7" stroke="#ddd" stroke-width="1.4"/>
<text x="597.1" y="339.9" font-size="13.3" fill="#dcdcdc" stroke="#dcdcdc" stroke-width="0.4" text-anchor="end">-10</text>
<line x1="597.1" y1="384.6" x2="602.1" y2="384.6" stroke="#ddd" stroke-width="1.4"/>
<text x="597.1" y="390.4" font-size="13.3" fill="#dcdcdc" stroke="#dcdcdc" stroke-width="0.4" text-anchor="end">-15</text>
<path d="M602.1 389.6 V77.5 H742.8 V389.6" fill="none" stroke="#9a9a9a" stroke-width="1.15"/>
<line x1="602.1" y1="384.6" x2="742.8" y2="384.6" stroke="#a4a4a4" stroke-width="1.4"/>
<rect x="616.5" y="225" width="111.5" height="7.5" fill="#000"/>
<rect x="617.5" y="226" width="109.3" height="5.1" fill="url(#gYelBar)"/>
<text x="672.65" y="399.6" font-size="13.3" fill="#dcdcdc" stroke="#dcdcdc" stroke-width="0.4" text-anchor="middle">100%</text>
<text x="850.5" y="72.6" font-size="13" fill="#dcdcdc" stroke="#dcdcdc" stroke-width="0.4" text-anchor="middle" textLength="42.5" lengthAdjust="spacingAndGlyphs">DeltaH</text>
<rect x="793.1" y="77.5" width="140.6" height="307.1" fill="#252525"/>
<line x1="793.1" y1="78.7" x2="933.7" y2="78.7" stroke="#8c8c8c" stroke-width="1.1"/>
<line x1="788.1" y1="78.7" x2="793.1" y2="78.7" stroke="#ddd" stroke-width="1.4"/>
<text x="788.1" y="83.9" font-size="13.3" fill="#dcdcdc" stroke="#dcdcdc" stroke-width="0.4" text-anchor="end">15</text>
<line x1="793.1" y1="129.9" x2="933.7" y2="129.9" stroke="#8c8c8c" stroke-width="1.1"/>
<line x1="788.1" y1="129.9" x2="793.1" y2="129.9" stroke="#ddd" stroke-width="1.4"/>
<text x="788.1" y="135.1" font-size="13.3" fill="#dcdcdc" stroke="#dcdcdc" stroke-width="0.4" text-anchor="end">10</text>
<line x1="793.1" y1="181.1" x2="933.7" y2="181.1" stroke="#8c8c8c" stroke-width="1.1"/>
<line x1="788.1" y1="181.1" x2="793.1" y2="181.1" stroke="#ddd" stroke-width="1.4"/>
<text x="788.1" y="186.3" font-size="13.3" fill="#dcdcdc" stroke="#dcdcdc" stroke-width="0.4" text-anchor="end">5</text>
<line x1="793.1" y1="232.3" x2="933.7" y2="232.3" stroke="#8c8c8c" stroke-width="1.1"/>
<line x1="788.1" y1="232.3" x2="793.1" y2="232.3" stroke="#ddd" stroke-width="1.4"/>
<text x="788.1" y="237.5" font-size="13.3" fill="#dcdcdc" stroke="#dcdcdc" stroke-width="0.4" text-anchor="end">0</text>
<line x1="793.1" y1="283.5" x2="933.7" y2="283.5" stroke="#8c8c8c" stroke-width="1.1"/>
<line x1="788.1" y1="283.5" x2="793.1" y2="283.5" stroke="#ddd" stroke-width="1.4"/>
<text x="788.1" y="288.7" font-size="13.3" fill="#dcdcdc" stroke="#dcdcdc" stroke-width="0.4" text-anchor="end">-5</text>
<line x1="793.1" y1="334.7" x2="933.7" y2="334.7" stroke="#8c8c8c" stroke-width="1.1"/>
<line x1="788.1" y1="334.7" x2="793.1" y2="334.7" stroke="#ddd" stroke-width="1.4"/>
<text x="788.1" y="339.9" font-size="13.3" fill="#dcdcdc" stroke="#dcdcdc" stroke-width="0.4" text-anchor="end">-10</text>
<line x1="788.1" y1="384.6" x2="793.1" y2="384.6" stroke="#ddd" stroke-width="1.4"/>
<text x="788.1" y="390.4" font-size="13.3" fill="#dcdcdc" stroke="#dcdcdc" stroke-width="0.4" text-anchor="end">-15</text>
<path d="M793.1 389.6 V77.5 H933.7 V389.6" fill="none" stroke="#9a9a9a" stroke-width="1.15"/>
<line x1="793.1" y1="384.6" x2="933.7" y2="384.6" stroke="#a4a4a4" stroke-width="1.4"/>
<rect x="807.1" y="232.2" width="111.9" height="16.4" fill="#000"/>
<rect x="808.1" y="233.2" width="109.7" height="14" fill="url(#gYelBar)"/>
<text x="863.6" y="399.6" font-size="13.3" fill="#dcdcdc" stroke="#dcdcdc" stroke-width="0.4" text-anchor="middle">100%</text>
<rect x="380" y="416" width="572" height="158" fill="#000"/>
<rect x="400" y="423" width="96.2" height="128.5" fill="#b9b893"/>
<rect x="400" y="487.5" width="96.2" height="64" fill="#c1c1a0"/>
<rect x="400.5" y="423.5" width="95.2" height="127.6" fill="none" stroke="#f0f0f0" stroke-width="1.1"/>
<text x="448.1" y="566" font-size="11" fill="#fff" text-anchor="middle" font-weight="700">20%</text>
<rect x="511.3" y="423" width="96.2" height="128.5" fill="#b9b778"/>
<rect x="511.3" y="487.5" width="96.2" height="64" fill="#c1c185"/>
<rect x="511.8" y="423.5" width="95.2" height="127.6" fill="none" stroke="#f0f0f0" stroke-width="1.1"/>
<text x="559.4" y="566" font-size="11" fill="#fff" text-anchor="middle" font-weight="700">40%</text>
<rect x="623.2" y="423" width="96.2" height="128.5" fill="#b7b55d"/>
<rect x="623.2" y="487.5" width="96.2" height="64" fill="#c1c16a"/>
<rect x="623.7" y="423.5" width="95.2" height="127.6" fill="none" stroke="#f0f0f0" stroke-width="1.1"/>
<text x="671.3" y="566" font-size="11" fill="#fff" text-anchor="middle" font-weight="700">60%</text>
<rect x="735.1" y="423" width="96.2" height="128.5" fill="#b5b33e"/>
<rect x="735.1" y="487.5" width="96.2" height="64" fill="#c1c14b"/>
<rect x="735.6" y="423.5" width="95.2" height="127.6" fill="none" stroke="#f0f0f0" stroke-width="1.1"/>
<text x="783.2" y="566" font-size="11" fill="#fff" text-anchor="middle" font-weight="700">80%</text>
<rect x="847" y="423" width="96.2" height="128.5" fill="#b4b200"/>
<rect x="847" y="487.5" width="96.2" height="64" fill="#c1c10a"/>
<rect x="847.5" y="423.5" width="95.2" height="127.6" fill="none" stroke="#f0f0f0" stroke-width="1.1"/>
<text x="895.1" y="566" font-size="11" fill="#fff" text-anchor="middle" font-weight="700">100%</text>
<text transform="translate(392.5 453) rotate(-90)" font-size="11" fill="#fff" font-weight="700" text-anchor="middle">Actual</text>
<text transform="translate(392.5 523.5) rotate(-90)" font-size="11" fill="#fff" font-weight="700" text-anchor="middle">Target</text>
<text x="468.4" y="620" font-size="13" fill="#dcdcdc" stroke="#dcdcdc" stroke-width="0.4" text-anchor="middle" textLength="80.4" lengthAdjust="spacingAndGlyphs">RGB Balance</text>
<rect x="358.7" y="624.2" width="245.6" height="174.9" fill="#252525"/>
<line x1="358.7" y1="625.6" x2="604.3" y2="625.6" stroke="#8c8c8c" stroke-width="1.1"/>
<line x1="353.7" y1="625.6" x2="358.7" y2="625.6" stroke="#ddd" stroke-width="1.4"/>
<text x="353.7" y="631.2" font-size="13.3" fill="#dcdcdc" stroke="#dcdcdc" stroke-width="0.4" text-anchor="end">20</text>
<line x1="358.7" y1="668.9" x2="604.3" y2="668.9" stroke="#8c8c8c" stroke-width="1.1"/>
<line x1="353.7" y1="668.9" x2="358.7" y2="668.9" stroke="#ddd" stroke-width="1.4"/>
<text x="353.7" y="674.5" font-size="13.3" fill="#dcdcdc" stroke="#dcdcdc" stroke-width="0.4" text-anchor="end">10</text>
<line x1="358.7" y1="712.2" x2="604.3" y2="712.2" stroke="#8c8c8c" stroke-width="1.1"/>
<line x1="353.7" y1="712.2" x2="358.7" y2="712.2" stroke="#ddd" stroke-width="1.4"/>
<text x="353.7" y="717.8" font-size="13.3" fill="#dcdcdc" stroke="#dcdcdc" stroke-width="0.4" text-anchor="end">0</text>
<line x1="358.7" y1="755.5" x2="604.3" y2="755.5" stroke="#8c8c8c" stroke-width="1.1"/>
<line x1="353.7" y1="755.5" x2="358.7" y2="755.5" stroke="#ddd" stroke-width="1.4"/>
<text x="353.7" y="761.1" font-size="13.3" fill="#dcdcdc" stroke="#dcdcdc" stroke-width="0.4" text-anchor="end">-10</text>
<line x1="353.7" y1="798.8" x2="358.7" y2="798.8" stroke="#ddd" stroke-width="1.4"/>
<text x="353.7" y="806" font-size="13.3" fill="#dcdcdc" stroke="#dcdcdc" stroke-width="0.4" text-anchor="end">-20</text>
<path d="M358.7 804.6 V624.2 H604.3 V804.6" fill="none" stroke="#9a9a9a" stroke-width="1.15"/>
<line x1="358.7" y1="799.1" x2="604.3" y2="799.1" stroke="#a4a4a4" stroke-width="1.4"/>
<rect x="383.7" y="712.2" width="65.5" height="35.2" fill="#000"/>
<rect x="384.7" y="713.2" width="63.5" height="32.8" fill="url(#gR)"/>
<rect x="449.2" y="712.2" width="65.7" height="50.7" fill="#000"/>
<rect x="450.2" y="713.2" width="63.7" height="48.3" fill="url(#gG)"/>
<rect x="514.9" y="712.2" width="66.1" height="27.2" fill="#000"/>
<rect x="515.9" y="713.2" width="64.1" height="24.8" fill="url(#gB)"/>
<text x="481.9" y="814.8" font-size="13.3" fill="#dcdcdc" stroke="#dcdcdc" stroke-width="0.4" text-anchor="middle">100%</text></g>
<g id="table"><rect x="625.3" y="596.2" width="697.7" height="28.8" fill="url(#gTH)"/>
<rect x="625.3" y="596.2" width="18.5" height="28.8" fill="#000"/>
<rect x="625.3" y="625" width="697.7" height="27.63" fill="#444"/>
<rect x="625.3" y="625" width="18.5" height="27.63" fill="url(#gSel)"/>
<rect x="625.3" y="652.33" width="697.7" height="27.63" fill="#7f7f7f"/>
<rect x="625.3" y="652.33" width="18.5" height="27.63" fill="url(#gSel2)"/>
<rect x="625.3" y="679.66" width="697.7" height="27.63" fill="#444"/>
<rect x="625.3" y="679.66" width="18.5" height="27.63" fill="url(#gSel)"/>
<rect x="625.3" y="706.99" width="697.7" height="27.63" fill="#7f7f7f"/>
<rect x="625.3" y="706.99" width="18.5" height="27.63" fill="url(#gSel2)"/>
<rect x="625.3" y="734.32" width="697.7" height="27.63" fill="#444"/>
<rect x="625.3" y="734.32" width="18.5" height="27.63" fill="url(#gSel)"/>
<rect x="625.3" y="761.65" width="697.7" height="27.63" fill="#7f7f7f"/>
<rect x="625.3" y="761.65" width="18.5" height="27.63" fill="url(#gSel2)"/>
<rect x="625.3" y="788.98" width="697.7" height="27.63" fill="#444"/>
<rect x="625.3" y="788.98" width="18.5" height="27.63" fill="url(#gSel)"/>
<g transform="scale(1.15 1)"><text x="699.65" y="615.8" font-size="14.2" fill="#fff" font-weight="700" font-family='"DejaVu Sans", "Liberation Sans", sans-serif'>20%</text>
<text x="790.96" y="615.8" font-size="14.2" fill="#fff" font-weight="700" font-family='"DejaVu Sans", "Liberation Sans", sans-serif'>40%</text>
<text x="882.26" y="615.8" font-size="14.2" fill="#fff" font-weight="700" font-family='"DejaVu Sans", "Liberation Sans", sans-serif'>60%</text>
<text x="973.48" y="615.8" font-size="14.2" fill="#fff" font-weight="700" font-family='"DejaVu Sans", "Liberation Sans", sans-serif'>80%</text>
<text x="1064.61" y="615.8" font-size="14.2" fill="#fff" font-weight="700" font-family='"DejaVu Sans", "Liberation Sans", sans-serif'>100%</text></g>
<g transform="scale(1.18 1)"><text x="550.76" y="646" font-size="16.5" fill="#fff" stroke="#fff" stroke-width="0.25" textLength="66.3" lengthAdjust="spacingAndGlyphs" font-family='"DejaVu Sans", "Liberation Sans", sans-serif'>x: CIE31</text>
<text x="550.76" y="673.33" font-size="16.5" fill="#fff" stroke="#fff" stroke-width="0.25" textLength="66.3" lengthAdjust="spacingAndGlyphs" font-family='"DejaVu Sans", "Liberation Sans", sans-serif'>y: CIE31</text>
<text x="550.76" y="700.66" font-size="16.5" fill="#fff" stroke="#fff" stroke-width="0.25" font-family='"DejaVu Sans", "Liberation Sans", sans-serif'>Y</text>
<text x="550.76" y="727.99" font-size="16.5" fill="#fff" stroke="#fff" stroke-width="0.25" textLength="119.29" lengthAdjust="spacingAndGlyphs" font-family='"DejaVu Sans", "Liberation Sans", sans-serif'>Target x:CIE31</text>
<text x="550.76" y="755.32" font-size="16.5" fill="#fff" stroke="#fff" stroke-width="0.25" textLength="119.29" lengthAdjust="spacingAndGlyphs" font-family='"DejaVu Sans", "Liberation Sans", sans-serif'>Target y:CIE31</text>
<text x="550.76" y="782.65" font-size="16.5" fill="#fff" stroke="#fff" stroke-width="0.25" textLength="69.07" lengthAdjust="spacingAndGlyphs" font-family='"DejaVu Sans", "Liberation Sans", sans-serif'>Target Y</text>
<text x="550.76" y="809.98" font-size="16.5" fill="#fff" stroke="#fff" stroke-width="0.25" textLength="70.19" lengthAdjust="spacingAndGlyphs" font-family='"DejaVu Sans", "Liberation Sans", sans-serif'>ΔE 2000</text></g>
<g transform="scale(1.153 1)"><text x="697.83" y="646" font-size="16.5" fill="#fff" stroke="#fff" stroke-width="0.25" font-family='"DejaVu Sans", "Liberation Sans", sans-serif'>0,3440</text>
<text x="788.9" y="646" font-size="16.5" fill="#fff" stroke="#fff" stroke-width="0.25" font-family='"DejaVu Sans", "Liberation Sans", sans-serif'>0,3661</text>
<text x="879.97" y="646" font-size="16.5" fill="#fff" stroke="#fff" stroke-width="0.25" font-family='"DejaVu Sans", "Liberation Sans", sans-serif'>0,3861</text>
<text x="970.95" y="646" font-size="16.5" fill="#fff" stroke="#fff" stroke-width="0.25" font-family='"DejaVu Sans", "Liberation Sans", sans-serif'>0,4050</text>
<text x="1061.84" y="646" font-size="16.5" fill="#fff" stroke="#fff" stroke-width="0.25" font-family='"DejaVu Sans", "Liberation Sans", sans-serif'>0,4232</text>
<text x="697.83" y="673.33" font-size="16.5" fill="#fff" stroke="#fff" stroke-width="0.25" font-family='"DejaVu Sans", "Liberation Sans", sans-serif'>0,3747</text>
<text x="788.9" y="673.33" font-size="16.5" fill="#fff" stroke="#fff" stroke-width="0.25" font-family='"DejaVu Sans", "Liberation Sans", sans-serif'>0,4109</text>
<text x="879.97" y="673.33" font-size="16.5" fill="#fff" stroke="#fff" stroke-width="0.25" font-family='"DejaVu Sans", "Liberation Sans", sans-serif'>0,4436</text>
<text x="970.95" y="673.33" font-size="16.5" fill="#fff" stroke="#fff" stroke-width="0.25" font-family='"DejaVu Sans", "Liberation Sans", sans-serif'>0,4749</text>
<text x="1061.84" y="673.33" font-size="16.5" fill="#fff" stroke="#fff" stroke-width="0.25" font-family='"DejaVu Sans", "Liberation Sans", sans-serif'>0,5042</text>
<text x="697.83" y="700.66" font-size="16.5" fill="#fff" stroke="#fff" stroke-width="0.25" font-family='"DejaVu Sans", "Liberation Sans", sans-serif'>178,6621</text>
<text x="788.9" y="700.66" font-size="16.5" fill="#fff" stroke="#fff" stroke-width="0.25" font-family='"DejaVu Sans", "Liberation Sans", sans-serif'>174,7017</text>
<text x="879.97" y="700.66" font-size="16.5" fill="#fff" stroke="#fff" stroke-width="0.25" font-family='"DejaVu Sans", "Liberation Sans", sans-serif'>171,8060</text>
<text x="970.95" y="700.66" font-size="16.5" fill="#fff" stroke="#fff" stroke-width="0.25" font-family='"DejaVu Sans", "Liberation Sans", sans-serif'>169,6905</text>
<text x="1061.84" y="700.66" font-size="16.5" fill="#fff" stroke="#fff" stroke-width="0.25" font-family='"DejaVu Sans", "Liberation Sans", sans-serif'>167,4843</text>
<text x="697.83" y="727.99" font-size="16.5" fill="#fff" stroke="#fff" stroke-width="0.25" font-family='"DejaVu Sans", "Liberation Sans", sans-serif'>0,3344</text>
<text x="788.9" y="727.99" font-size="16.5" fill="#fff" stroke="#fff" stroke-width="0.25" font-family='"DejaVu Sans", "Liberation Sans", sans-serif'>0,3564</text>
<text x="879.97" y="727.99" font-size="16.5" fill="#fff" stroke="#fff" stroke-width="0.25" font-family='"DejaVu Sans", "Liberation Sans", sans-serif'>0,3773</text>
<text x="970.95" y="727.99" font-size="16.5" fill="#fff" stroke="#fff" stroke-width="0.25" font-family='"DejaVu Sans", "Liberation Sans", sans-serif'>0,3969</text>
<text x="1061.84" y="727.99" font-size="16.5" fill="#fff" stroke="#fff" stroke-width="0.25" font-family='"DejaVu Sans", "Liberation Sans", sans-serif'>0,4193</text>
<text x="697.83" y="755.32" font-size="16.5" fill="#fff" stroke="#fff" stroke-width="0.25" font-family='"DejaVu Sans", "Liberation Sans", sans-serif'>0,3648</text>
<text x="788.9" y="755.32" font-size="16.5" fill="#fff" stroke="#fff" stroke-width="0.25" font-family='"DejaVu Sans", "Liberation Sans", sans-serif'>0,4013</text>
<text x="879.97" y="755.32" font-size="16.5" fill="#fff" stroke="#fff" stroke-width="0.25" font-family='"DejaVu Sans", "Liberation Sans", sans-serif'>0,4358</text>
<text x="970.95" y="755.32" font-size="16.5" fill="#fff" stroke="#fff" stroke-width="0.25" font-family='"DejaVu Sans", "Liberation Sans", sans-serif'>0,4682</text>
<text x="1061.84" y="755.32" font-size="16.5" fill="#fff" stroke="#fff" stroke-width="0.25" font-family='"DejaVu Sans", "Liberation Sans", sans-serif'>0,5053</text>
<text x="697.83" y="782.65" font-size="16.5" fill="#fff" stroke="#fff" stroke-width="0.25" font-family='"DejaVu Sans", "Liberation Sans", sans-serif'>198,5049</text>
<text x="788.9" y="782.65" font-size="16.5" fill="#fff" stroke="#fff" stroke-width="0.25" font-family='"DejaVu Sans", "Liberation Sans", sans-serif'>195,0206</text>
<text x="879.97" y="782.65" font-size="16.5" fill="#fff" stroke="#fff" stroke-width="0.25" font-family='"DejaVu Sans", "Liberation Sans", sans-serif'>192,3433</text>
<text x="970.95" y="782.65" font-size="16.5" fill="#fff" stroke="#fff" stroke-width="0.25" font-family='"DejaVu Sans", "Liberation Sans", sans-serif'>190,2423</text>
<text x="1061.84" y="782.65" font-size="16.5" fill="#fff" stroke="#fff" stroke-width="0.25" font-family='"DejaVu Sans", "Liberation Sans", sans-serif'>188,2110</text>
<text x="697.83" y="809.98" font-size="16.5" fill="#fff" stroke="#fff" stroke-width="0.25" font-family='"DejaVu Sans", "Liberation Sans", sans-serif'>3,3674</text>
<text x="788.9" y="809.98" font-size="16.5" fill="#fff" stroke="#fff" stroke-width="0.25" font-family='"DejaVu Sans", "Liberation Sans", sans-serif'>2,9913</text>
<text x="879.97" y="809.98" font-size="16.5" fill="#fff" stroke="#fff" stroke-width="0.25" font-family='"DejaVu Sans", "Liberation Sans", sans-serif'>2,8271</text>
<text x="970.95" y="809.98" font-size="16.5" fill="#fff" stroke="#fff" stroke-width="0.25" font-family='"DejaVu Sans", "Liberation Sans", sans-serif'>2,7718</text>
<text x="1061.84" y="809.98" font-size="16.5" fill="#fff" stroke="#fff" stroke-width="0.25" font-family='"DejaVu Sans", "Liberation Sans", sans-serif'>2,7635</text></g></g>
<g id="bottom"><rect x="0" y="823.8" width="1645" height="78" fill="url(#gBotBg)"/>
<path d="M-5 901 V828 a4 4 0 0 1 4 -4 H42.5 a4 4 0 0 1 4 4 V901Z" fill="url(#gPan)"/>
<circle cx="18.2" cy="836" r="9.6" fill="url(#gUp)"/>
<path d="M12.6 838.4 L18.2 832.6 L23.8 838.4z" fill="#222"/>
<rect x="-6" y="857.3" width="46.2" height="37.5" rx="4" fill="#ffff00"/>
<path d="M54.2 901 V828 a4 4 0 0 1 4 -4 H237.7 a4 4 0 0 1 4 4 V901Z" fill="url(#gPan)"/>
<rect x="60.7" y="831" width="174.6" height="45" rx="3.5" fill="#c1c1a0" stroke="#000" stroke-opacity=".18" stroke-width="1"/>
<text x="147.9" y="895.3" font-size="13" fill="#2a2a2a" text-anchor="middle" font-weight="700">20%</text>
<path d="M244.4 901 V828 a4 4 0 0 1 4 -4 H427.9 a4 4 0 0 1 4 4 V901Z" fill="url(#gPan)"/>
<rect x="250.9" y="831" width="174.6" height="45" rx="3.5" fill="#c1c185" stroke="#000" stroke-opacity=".18" stroke-width="1"/>
<text x="338.1" y="895.3" font-size="13" fill="#2a2a2a" text-anchor="middle" font-weight="700">40%</text>
<path d="M434.6 901 V828 a4 4 0 0 1 4 -4 H618.1 a4 4 0 0 1 4 4 V901Z" fill="url(#gPan)"/>
<rect x="441.1" y="831" width="174.6" height="45" rx="3.5" fill="#c1c16a" stroke="#000" stroke-opacity=".18" stroke-width="1"/>
<text x="528.3" y="895.3" font-size="13" fill="#2a2a2a" text-anchor="middle" font-weight="700">60%</text>
<path d="M624.8 901 V828 a4 4 0 0 1 4 -4 H808.3 a4 4 0 0 1 4 4 V901Z" fill="url(#gPan)"/>
<rect x="631.3" y="831" width="174.6" height="45" rx="3.5" fill="#c1c14b" stroke="#000" stroke-opacity=".18" stroke-width="1"/>
<text x="718.5" y="895.3" font-size="13" fill="#2a2a2a" text-anchor="middle" font-weight="700">80%</text>
<path d="M814.2 901 V828 a4 4 0 0 1 4 -4 H997.3 a4 4 0 0 1 4 4 V901Z" fill="url(#gSelP)"/>
<rect x="820.6" y="830.8" width="175.2" height="45" rx="4" fill="#c4c000"/>
<text x="907.8" y="895" font-size="13" fill="#fff" text-anchor="middle" font-weight="700">100%</text>
<path d="M1255.2 901 V828.6 a4 4 0 0 1 4 -4 H1311.5 a4 4 0 0 1 4 4 V901Z" fill="url(#gPan2)"/>
<line x1="1255.2" y1="847.3" x2="1315.5" y2="847.3" stroke="#444" stroke-width="1.2"/>
<circle cx="1285.6" cy="835.7" r="9.6" fill="url(#gUp)"/>
<path d="M1280 838.2 L1285.6 832.4 L1291.2 838.2z" fill="#222"/>
<rect x="1267" y="856.6" width="36.1" height="35.6" rx="5" fill="url(#gStopBtn)" stroke="#282828" stroke-width="3"/>
<rect x="1277" y="866" width="17.1" height="17" fill="url(#gStopSq)"/>
<rect x="1316.3" y="824" width="282.7" height="38" fill="url(#gPan2)"/>
<line x1="1374" y1="824" x2="1374" y2="862" stroke="#3a3a3a" stroke-width="1.3"/>
<line x1="1430.4" y1="824" x2="1430.4" y2="862" stroke="#3a3a3a" stroke-width="1.3"/>
<line x1="1486.3" y1="824" x2="1486.3" y2="862" stroke="#3a3a3a" stroke-width="2.6"/>
<line x1="1543.5" y1="824" x2="1543.5" y2="862" stroke="#3a3a3a" stroke-width="1.3"/>
<circle cx="1345.2" cy="843" r="12.6" fill="url(#gIco)"/>
<circle cx="1402.6" cy="843" r="12.6" fill="url(#gIco)"/>
<circle cx="1458.6" cy="843" r="12.6" fill="url(#gIco)"/>
<circle cx="1515" cy="843" r="12.6" fill="url(#gIco)"/>
<circle cx="1571" cy="843" r="12.6" fill="url(#gIco)"/>
<rect x="1340" y="838.3" width="10.4" height="9.6" fill="#2c2c2c"/>
<path d="M1398.8 837.6 L1409.6 843.4 L1398.8 849.2z" fill="#2c2c2c"/>
<path d="M1456.2 838.6 h-3.3 v11 h3.3 M1462.2 838.6 h3.3 v11 h-3.3" fill="none" stroke="#2c2c2c" stroke-width="2"/>
<rect x="1456.6" y="843.2" width="1.6" height="1.8" fill="#2c2c2c"/>
<rect x="1460.2" y="843.2" width="1.6" height="1.8" fill="#2c2c2c"/>
<path d="M1515.2 843.3 c-2.4 -4.6 -7.8 -4.4 -7.8 0 s5.4 4.6 7.8 0 s7.8 -4.4 7.8 0 s-5.4 4.6 -7.8 0z" fill="none" stroke="#2c2c2c" stroke-width="1.7"/>
<path d="M1565 842.2 a6.3 6.3 0 0 1 10.6 -3.6 l1.7 -1.7 v5.6 h-5.6 l1.9 -1.9 a3.6 3.6 0 0 0 -5.9 1.6z M1578 844.4 a6.3 6.3 0 0 1 -10.6 3.6 l-1.7 1.7 v-5.6 h5.6 l-1.9 1.9 a3.6 3.6 0 0 0 5.9 -1.6z" fill="#2c2c2c"/>
<rect x="1599.6" y="824" width="46" height="38" fill="url(#gDarkR)"/>
<circle cx="1628.7" cy="843.2" r="12.4" fill="url(#gDarkC)"/>
<rect x="1316.3" y="863.2" width="170" height="38" fill="url(#gPan3)"/>
<rect x="1488.3" y="863.2" width="157" height="38" fill="url(#gPan3)"/>
<rect x="1486.3" y="861.2" width="2" height="40" fill="#333"/>
<rect x="1316.3" y="862" width="329" height="1.5" fill="#333"/>
<circle cx="1355" cy="882" r="12.6" fill="url(#gIco)"/>
<circle cx="1621.6" cy="882" r="12.6" fill="url(#gIco)"/>
<path d="M1354.6 876.7 l-5 5.4 l5 5.4 M1360 876.7 l-5 5.4 l5 5.4" fill="none" stroke="#2c2c2c" stroke-width="1.6"/>
<path d="M1617 876.7 l5 5.4 l-5 5.4 M1622.4 876.7 l5 5.4 l-5 5.4" fill="none" stroke="#2c2c2c" stroke-width="1.6"/>
<text x="1388.9" y="891.5" font-size="25.5" fill="#343434" stroke="#343434" stroke-width="0.55" textLength="62.8" lengthAdjust="spacingAndGlyphs" style="filter:drop-shadow(.5px 1.1px 0 #b4b4b4)">Back</text>
<text x="1522.7" y="891.5" font-size="25.5" fill="#343434" stroke="#343434" stroke-width="0.55" textLength="63.6" lengthAdjust="spacingAndGlyphs" style="filter:drop-shadow(.5px 1.1px 0 #b4b4b4)">Next</text></g>
<g id="ciebg"><rect x="959" y="47" width="671" height="541" fill="#1d1d1d"/>
<rect x="965.3" y="53.6" width="658.7" height="527.6" fill="#323232"/>
<text x="1294.5" y="72" font-size="13" fill="#dcdcdc" stroke="#dcdcdc" stroke-width="0.4" text-anchor="middle" textLength="82" lengthAdjust="spacingAndGlyphs">CIE 1976 u&#x27;v&#x27;</text>
<rect x="1001.7" y="76.6" width="618.7" height="476.9" fill="#252525"/></g>
</svg>
<div id="cief"><i style="background:linear-gradient(90deg,#00ff00,#00ff00,#00ff00,#00ff00,#00ff00,#00ff00,#00ff00,#00ff00,#00ff00,#00ff00,#00ff00,#19ff00,#37ff00,#57ff00,#7aff00,#9eff00,#c6ff00,#f0ff00,#ffe300,#ffc100,#ffa600,#ff9000,#ff7e00,#ff6f00,#ff6100,#ff5600,#ff4c00,#ff4300,#ff3b00,#ff3400,#ff2e00,#ff2800,#ff2300,#ff1e00,#ff1a00,#ff1600,#ff1200,#ff0f00,#ff0c00,#ff0900,#ff0600,#ff0300,#ff0100,#ff0000,#ff0000,#ff0000,#ff0000,#ff0000,#ff0000,#ff0000,#ff0000)"></i><i style="background:linear-gradient(90deg,#00ff00,#00ff00,#00ff00,#00ff00,#00ff00,#00ff00,#00ff00,#00ff00,#00ff00,#00ff00,#00ff00,#18ff00,#37ff00,#57ff00,#79ff00,#9eff00,#c6ff00,#f1ff00,#ffe200,#ffc000,#ffa500,#ff8f00,#ff7d00,#ff6d00,#ff6000,#ff5500,#ff4b00,#ff4200,#ff3a00,#ff3300,#ff2d00,#ff2700,#ff2200,#ff1d00,#ff1900,#ff1500,#ff1100,#ff0e00,#ff0b00,#ff0800,#ff0500,#ff0300,#ff0000,#ff0000,#ff0000,#ff0000,#ff0000,#ff0000,#ff0000,#ff0000,#ff0000)"></i><i style="background:linear-gradient(90deg,#00ff00,#00ff00,#00ff00,#00ff00,#00ff00,#00ff00,#00ff00,#00ff00,#00ff00,#00ff00,#00ff00,#18ff00,#36ff00,#56ff00,#79ff00,#9eff00,#c7ff00,#f2ff00,#ffe100,#ffbf00,#ffa400,#ff8e00,#ff7c00,#ff6c00,#ff5f00,#ff5400,#ff4a00,#ff4100,#ff3900,#ff3200,#ff2c00,#ff2700,#ff2100,#ff1d00,#ff1800,#ff1400,#ff1100,#ff0d00,#ff0a00,#ff0700,#ff0500,#ff0200,#ff0000,#ff0000,#ff0000,#ff0000,#ff0000,#ff0000,#ff0000,#ff0000,#ff0000)"></i><i style="background:linear-gradient(90deg,#00ff00,#00ff00,#00ff00,#00ff00,#00ff00,#00ff00,#00ff00,#00ff00,#00ff00,#00ff00,#00ff00,#17ff00,#35ff00,#56ff00,#79ff00,#9fff00,#c7ff00,#f3ff00,#ffe000,#ffbe00,#ffa300,#ff8d00,#ff7b00,#ff6b00,#ff5e00,#ff5300,#ff4900,#ff4000,#ff3900,#ff3200,#ff2b00,#ff2600,#ff2100,#ff1c00,#ff1800,#ff1400,#ff1000,#ff0d00,#ff0a00,#ff0700,#ff0400,#ff0200,#ff0000,#ff0000,#ff0000,#ff0000,#ff0000,#ff0000,#ff0000,#ff0000,#ff0000)"></i><i style="background:linear-gradient(90deg,#00ff00,#00ff00,#00ff00,#00ff00,#00ff00,#00ff00,#00ff00,#00ff00,#00ff00,#00ff00,#00ff00,#16ff00,#34ff00,#55ff00,#79ff00,#9fff00,#c8ff00,#f4ff00,#ffdf00,#ffbd00,#ffa200,#ff8c00,#ff7a00,#ff6a00,#ff5d00,#ff5200,#ff4800,#ff3f00,#ff3800,#ff3100,#ff2b00,#ff2500,#ff2000,#ff1b00,#ff1700,#ff1300,#ff1000,#ff0c00,#ff0900,#ff0600,#ff0400,#ff0100,#ff0000,#ff0000,#ff0000,#ff0000,#ff0000,#ff0000,#ff0000,#ff0000,#ff0000)"></i><i style="background:linear-gradient(90deg,#00ff00,#00ff00,#00ff00,#00ff00,#00ff00,#00ff00,#00ff00,#00ff00,#00ff00,#00ff00,#00ff00,#15ff00,#34ff00,#55ff00,#78ff00,#9fff00,#c8ff00,#f5ff00,#ffdd00,#ffbc00,#ffa100,#ff8b00,#ff7900,#ff6900,#ff5c00,#ff5100,#ff4700,#ff3e00,#ff3700,#ff3000,#ff2a00,#ff2400,#ff1f00,#ff1b00,#ff1600,#ff1200,#ff0f00,#ff0c00,#ff0800,#ff0600,#ff0300,#ff0000,#ff0000,#ff0000,#ff0000,#ff0000,#ff0000,#ff0000,#ff0000,#ff0000,#ff0000)"></i><i style="background:linear-gradient(90deg,#00ff02,#00ff00,#00ff00,#00ff00,#00ff00,#00ff00,#00ff00,#00ff00,#00ff00,#00ff00,#00ff00,#14ff00,#33ff00,#54ff00,#78ff00,#9fff00,#c9ff00,#f6ff00,#ffdc00,#ffba00,#ff9f00,#ff8a00,#ff7800,#ff6800,#ff5b00,#ff5000,#ff4600,#ff3e00,#ff3600,#ff2f00,#ff2900,#ff2300,#ff1e00,#ff1a00,#ff1600,#ff1200,#ff0e00,#ff0b00,#ff0800,#ff0500,#ff0200,#ff0000,#ff0000,#ff0000,#ff0000,#ff0000,#ff0000,#ff0000,#ff0000,#ff0000,#ff0000)"></i><i style="background:linear-gradient(90deg,#00ff07,#00ff05,#00ff03,#00ff01,#00ff00,#00ff00,#00ff00,#00ff00,#00ff00,#00ff00,#00ff00,#13ff00,#32ff00,#54ff00,#78ff00,#9fff00,#c9ff00,#f7ff00,#ffdb00,#ffb900,#ff9e00,#ff8800,#ff7600,#ff6700,#ff5a00,#ff4f00,#ff4500,#ff3d00,#ff3500,#ff2e00,#ff2800,#ff2300,#ff1e00,#ff1900,#ff1500,#ff1100,#ff0e00,#ff0a00,#ff0700,#ff0400,#ff0200,#ff0000,#ff0000,#ff0000,#ff0000,#ff0000,#ff0000,#ff0000,#ff0000,#ff0000,#ff0000)"></i><i style="background:linear-gradient(90deg,#00ff0c,#00ff0a,#00ff08,#00ff06,#00ff05,#00ff03,#00ff00,#00ff00,#00ff00,#00ff00,#00ff00,#12ff00,#31ff00,#53ff00,#78ff00,#9fff00,#caff00,#f8ff00,#ffda00,#ffb800,#ff9d00,#ff8700,#ff7500,#ff6600,#ff5900,#ff4e00,#ff4400,#ff3c00,#ff3400,#ff2d00,#ff2700,#ff2200,#ff1d00,#ff1800,#ff1400,#ff1000,#ff0d00,#ff0a00,#ff0700,#ff0400,#ff0100,#ff0000,#ff0000,#ff0000,#ff0000,#ff0000,#ff0000,#ff0000,#ff0000,#ff0000,#ff0000)"></i><i style="background:linear-gradient(90deg,#00ff11,#00ff0f,#00ff0e,#00ff0c,#00ff0a,#00ff08,#00ff06,#00ff04,#00ff02,#00ff00,#00ff00,#11ff00,#30ff00,#53ff00,#78ff00,#9fff00,#caff00,#f9ff00,#ffd900,#ffb700,#ff9c00,#ff8600,#ff7400,#ff6500,#ff5800,#ff4d00,#ff4300,#ff3b00,#ff3300,#ff2d00,#ff2700,#ff2100,#ff1c00,#ff1800,#ff1300,#ff1000,#ff0c00,#ff0900,#ff0600,#ff0300,#ff0100,#ff0000,#ff0000,#ff0000,#ff0000,#ff0000,#ff0000,#ff0000,#ff0000,#ff0000,#ff0000)"></i><i style="background:linear-gradient(90deg,#00ff16,#00ff14,#00ff13,#00ff11,#00ff10,#00ff0e,#00ff0c,#00ff0a,#00ff08,#00ff06,#00ff03,#10ff01,#30ff00,#52ff00,#77ff00,#9fff00,#cbff00,#faff00,#ffd800,#ffb600,#ff9b00,#ff8500,#ff7300,#ff6400,#ff5700,#ff4c00,#ff4200,#ff3a00,#ff3200,#ff2c00,#ff2600,#ff2000,#ff1b00,#ff1700,#ff1300,#ff0f00,#ff0c00,#ff0800,#ff0500,#ff0300,#ff0000,#ff0000,#ff0000,#ff0000,#ff0000,#ff0000,#ff0000,#ff0000,#ff0000,#ff0000,#ff0000)"></i><i style="background:linear-gradient(90deg,#00ff1b,#00ff1a,#00ff18,#00ff17,#00ff15,#00ff14,#00ff12,#00ff10,#00ff0e,#00ff0c,#00ff0a,#0eff08,#2fff05,#52ff03,#77ff00,#a0ff00,#cbff00,#fbff00,#ffd600,#ffb400,#ff9a00,#ff8400,#ff7200,#ff6300,#ff5600,#ff4b00,#ff4100,#ff3900,#ff3200,#ff2b00,#ff2500,#ff1f00,#ff1b00,#ff1600,#ff1200,#ff0e00,#ff0b00,#ff0800,#ff0500,#ff0200,#ff0000,#ff0000,#ff0000,#ff0000,#ff0000,#ff0000,#ff0000,#ff0000,#ff0000,#ff0000,#ff0000)"></i><i style="background:linear-gradient(90deg,#00ff20,#00ff1f,#00ff1e,#00ff1d,#00ff1b,#00ff1a,#00ff18,#00ff17,#00ff15,#00ff13,#00ff11,#0dff0f,#2eff0d,#51ff0a,#77ff08,#a0ff05,#ccff02,#fcff00,#ffd500,#ffb300,#ff9800,#ff8300,#ff7100,#ff6200,#ff5500,#ff4a00,#ff4000,#ff3800,#ff3100,#ff2a00,#ff2400,#ff1f00,#ff1a00,#ff1500,#ff1100,#ff0e00,#ff0a00,#ff0700,#ff0400,#ff0100,#ff0000,#ff0000,#ff0000,#ff0000,#ff0000,#ff0000,#ff0000,#ff0000,#ff0000,#ff0000,#ff0000)"></i><i style="background:linear-gradient(90deg,#00ff25,#00ff24,#00ff23,#00ff22,#00ff21,#00ff20,#00ff1e,#00ff1d,#00ff1b,#00ff1a,#00ff18,#0cff16,#2dff14,#50ff12,#77ff10,#a0ff0d,#cdff0a,#fdff07,#ffd403,#ffb200,#ff9700,#ff8100,#ff7000,#ff6100,#ff5400,#ff4900,#ff4000,#ff3700,#ff3000,#ff2900,#ff2300,#ff1e00,#ff1900,#ff1500,#ff1100,#ff0d00,#ff0a00,#ff0600,#ff0300,#ff0100,#ff0000,#ff0000,#ff0000,#ff0000,#ff0000,#ff0000,#ff0000,#ff0000,#ff0000,#ff0000,#ff0000)"></i><i style="background:linear-gradient(90deg,#00ff2b,#00ff2a,#00ff29,#00ff28,#00ff27,#00ff26,#00ff25,#00ff23,#00ff22,#00ff21,#00ff1f,#0bff1d,#2cff1c,#50ff1a,#76ff18,#a0ff15,#cdff13,#ffff10,#ffd30b,#ffb107,#ff9604,#ff8002,#ff6e00,#ff6000,#ff5300,#ff4800,#ff3f00,#ff3600,#ff2f00,#ff2800,#ff2200,#ff1d00,#ff1800,#ff1400,#ff1000,#ff0c00,#ff0900,#ff0600,#ff0300,#ff0000,#ff0000,#ff0000,#ff0000,#ff0000,#ff0000,#ff0000,#ff0000,#ff0000,#ff0000,#ff0000,#ff0000)"></i><i style="background:linear-gradient(90deg,#00ff30,#00ff2f,#00ff2f,#00ff2e,#00ff2d,#00ff2c,#00ff2b,#00ff2a,#00ff29,#00ff28,#00ff26,#0aff25,#2bff23,#4fff22,#76ff20,#a0ff1e,#ceff1c,#fffe1a,#ffd113,#ffaf0e,#ff950a,#ff7f07,#ff6d05,#ff5e02,#ff5201,#ff4700,#ff3e00,#ff3500,#ff2e00,#ff2700,#ff2200,#ff1c00,#ff1800,#ff1300,#ff0f00,#ff0c00,#ff0800,#ff0500,#ff0200,#ff0000,#ff0000,#ff0000,#ff0000,#ff0000,#ff0000,#ff0000,#ff0000,#ff0000,#ff0000,#ff0000,#ff0000)"></i><i style="background:linear-gradient(90deg,#00ff36,#00ff35,#00ff34,#00ff34,#00ff33,#00ff32,#00ff31,#00ff31,#00ff30,#00ff2f,#00ff2e,#09ff2c,#2aff2b,#4fff2a,#76ff28,#a0ff27,#ceff25,#fffd23,#ffd01b,#ffae15,#ff9311,#ff7e0d,#ff6c0a,#ff5d07,#ff5105,#ff4603,#ff3d01,#ff3400,#ff2d00,#ff2700,#ff2100,#ff1b00,#ff1700,#ff1200,#ff0e00,#ff0b00,#ff0700,#ff0400,#ff0200,#ff0000,#ff0000,#ff0000,#ff0000,#ff0000,#ff0000,#ff0000,#ff0000,#ff0000,#ff0000,#ff0000,#ff0000)"></i><i style="background:linear-gradient(90deg,#00ff3b,#00ff3b,#00ff3a,#00ff3a,#00ff39,#00ff39,#00ff38,#00ff37,#00ff37,#00ff36,#00ff35,#08ff34,#29ff33,#4eff32,#75ff31,#a0ff30,#cfff2e,#fffc2d,#ffcf23,#ffad1c,#ff9217,#ff7d12,#ff6b0f,#ff5c0c,#ff5009,#ff4507,#ff3c05,#ff3303,#ff2c02,#ff2601,#ff2000,#ff1b00,#ff1600,#ff1200,#ff0e00,#ff0a00,#ff0700,#ff0400,#ff0100,#ff0000,#ff0000,#ff0000,#ff0000,#ff0000,#ff0000,#ff0000,#ff0000,#ff0000,#ff0000,#ff0000,#ff0000)"></i><i style="background:linear-gradient(90deg,#00ff41,#00ff40,#00ff40,#00ff40,#00ff3f,#00ff3f,#00ff3f,#00ff3e,#00ff3e,#00ff3d,#00ff3d,#06ff3c,#28ff3b,#4dff3b,#75ff3a,#a0ff39,#d0ff38,#fffb36,#ffce2b,#ffab23,#ff911d,#ff7b18,#ff6a14,#ff5b11,#ff4f0e,#ff440b,#ff3b09,#ff3207,#ff2b05,#ff2504,#ff1f02,#ff1a01,#ff1500,#ff1100,#ff0d00,#ff0900,#ff0600,#ff0300,#ff0000,#ff0000,#ff0000,#ff0000,#ff0000,#ff0000,#ff0000,#ff0000,#ff0000,#ff0000,#ff0000,#ff0000,#ff0000)"></i><i style="background:linear-gradient(90deg,#00ff47,#00ff46,#00ff46,#00ff46,#00ff46,#00ff46,#00ff45,#00ff45,#00ff45,#00ff44,#00ff44,#05ff44,#27ff44,#4dff43,#75ff43,#a1ff42,#d0ff42,#fff940,#ffcc34,#ffaa2b,#ff9024,#ff7a1e,#ff6919,#ff5a15,#ff4e12,#ff430f,#ff3a0d,#ff310b,#ff2a09,#ff2407,#ff1e05,#ff1904,#ff1403,#ff1002,#ff0c01,#ff0900,#ff0500,#ff0200,#ff0000,#ff0000,#ff0000,#ff0000,#ff0000,#ff0000,#ff0000,#ff0000,#ff0000,#ff0000,#ff0000,#ff0000,#ff0000)"></i><i style="background:linear-gradient(90deg,#00ff4c,#00ff4c,#00ff4c,#00ff4c,#00ff4c,#00ff4c,#00ff4c,#00ff4c,#00ff4c,#00ff4c,#00ff4c,#04ff4c,#26ff4c,#4cff4c,#75ff4c,#a1ff4c,#d1ff4c,#fff84a,#ffcb3c,#ffa932,#ff8e2a,#ff7924,#ff671f,#ff591a,#ff4c16,#ff4213,#ff3911,#ff300e,#ff290c,#ff230a,#ff1d08,#ff1807,#ff1406,#ff0f04,#ff0c03,#ff0802,#ff0501,#ff0200,#ff0000,#ff0000,#ff0000,#ff0000,#ff0000,#ff0000,#ff0000,#ff0000,#ff0000,#ff0000,#ff0000,#ff0000,#ff0000)"></i><i style="background:linear-gradient(90deg,#00ff52,#00ff52,#00ff52,#00ff53,#00ff53,#00ff53,#00ff53,#00ff53,#00ff53,#00ff54,#00ff54,#03ff54,#25ff54,#4bff55,#74ff55,#a1ff55,#d2ff56,#fff754,#ffca45,#ffa739,#ff8d31,#ff782a,#ff6624,#ff581f,#ff4b1b,#ff4117,#ff3814,#ff3012,#ff280f,#ff220d,#ff1c0b,#ff170a,#ff1308,#ff0f07,#ff0b06,#ff0704,#ff0403,#ff0102,#ff0002,#ff0001,#ff0000,#ff0000,#ff0000,#ff0000,#ff0000,#ff0000,#ff0000,#ff0000,#ff0000,#ff0000,#ff0000)"></i><i style="background:linear-gradient(90deg,#00ff58,#00ff58,#00ff59,#00ff59,#00ff59,#00ff5a,#00ff5a,#00ff5b,#00ff5b,#00ff5b,#00ff5c,#01ff5d,#24ff5d,#4bff5e,#74ff5f,#a1ff5f,#d3ff60,#fff65e,#ffc84d,#ffa641,#ff8c37,#ff762f,#ff6529,#ff5624,#ff4a1f,#ff401c,#ff3718,#ff2f15,#ff2713,#ff2111,#ff1c0f,#ff170d,#ff120b,#ff0e0a,#ff0a08,#ff0707,#ff0306,#ff0005,#ff0004,#ff0003,#ff0002,#ff0001,#ff0000,#ff0000,#ff0000,#ff0000,#ff0000,#ff0000,#ff0000,#ff0000,#ff0000)"></i><i style="background:linear-gradient(90deg,#00ff5e,#00ff5e,#00ff5f,#00ff5f,#00ff60,#00ff61,#00ff61,#00ff62,#00ff63,#00ff63,#00ff64,#00ff65,#23ff66,#4aff67,#74ff68,#a1ff6a,#d3ff6b,#fff468,#ffc756,#ffa548,#ff8a3e,#ff7535,#ff642f,#ff5529,#ff4924,#ff3f20,#ff361c,#ff2e19,#ff2716,#ff2014,#ff1b12,#ff1610,#ff110e,#ff0d0c,#ff090b,#ff0609,#ff0308,#ff0007,#ff0006,#ff0005,#ff0004,#ff0003,#ff0002,#ff0001,#ff0001,#ff0000,#ff0000,#ff0000,#ff0000,#ff0000,#ff0000)"></i><i style="background:linear-gradient(90deg,#00ff64,#00ff65,#00ff65,#00ff66,#00ff67,#00ff68,#00ff69,#00ff69,#00ff6a,#00ff6b,#00ff6d,#00ff6e,#22ff6f,#49ff71,#73ff72,#a1ff74,#d4ff76,#fff372,#ffc55f,#ffa350,#ff8945,#ff743b,#ff6234,#ff542e,#ff4829,#ff3e24,#ff3420,#ff2d1d,#ff261a,#ff1f17,#ff1a15,#ff1513,#ff1011,#ff0c0f,#ff090d,#ff050c,#ff020a,#ff0009,#ff0008,#ff0007,#ff0006,#ff0005,#ff0004,#ff0003,#ff0002,#ff0002,#ff0001,#ff0000,#ff0000,#ff0000,#ff0000)"></i><i style="background:linear-gradient(90deg,#00ff6a,#00ff6b,#00ff6c,#00ff6d,#00ff6e,#00ff6f,#00ff70,#00ff71,#00ff72,#00ff74,#00ff75,#00ff77,#21ff78,#48ff7a,#73ff7c,#a2ff7f,#d5ff81,#fff27d,#ffc467,#ffa258,#ff884b,#ff7241,#ff6139,#ff5333,#ff472d,#ff3c28,#ff3324,#ff2c20,#ff251d,#ff1f1a,#ff1918,#ff1415,#ff1013,#ff0c11,#ff0810,#ff040e,#ff010d,#ff000b,#ff000a,#ff0009,#ff0008,#ff0007,#ff0006,#ff0005,#ff0004,#ff0003,#ff0003,#ff0002,#ff0001,#ff0001,#ff0000)"></i><i style="background:linear-gradient(90deg,#00ff70,#00ff71,#00ff72,#00ff74,#00ff75,#00ff76,#00ff77,#00ff79,#00ff7a,#00ff7c,#00ff7e,#00ff80,#20ff82,#48ff84,#73ff87,#a2ff89,#d6ff8c,#fff087,#ffc370,#ffa15f,#ff8652,#ff7148,#ff603f,#ff5238,#ff4632,#ff3b2d,#ff3228,#ff2b24,#ff2421,#ff1e1e,#ff181b,#ff1318,#ff0f16,#ff0b14,#ff0712,#ff0411,#ff010f,#ff000e,#ff000c,#ff000b,#ff000a,#ff0009,#ff0008,#ff0007,#ff0006,#ff0005,#ff0004,#ff0004,#ff0003,#ff0002,#ff0002)"></i><i style="background:linear-gradient(90deg,#00ff77,#00ff78,#00ff79,#00ff7a,#00ff7c,#00ff7d,#00ff7f,#00ff81,#00ff83,#00ff85,#00ff87,#00ff89,#1fff8c,#47ff8e,#72ff91,#a2ff94,#d6ff98,#ffef92,#ffc179,#ff9f67,#ff8559,#ff704e,#ff5f44,#ff513d,#ff4536,#ff3a31,#ff312c,#ff2a28,#ff2324,#ff1d21,#ff171e,#ff121b,#ff0e19,#ff0a17,#ff0615,#ff0313,#ff0011,#ff0010,#ff000e,#ff000d,#ff000c,#ff000b,#ff000a,#ff0009,#ff0008,#ff0007,#ff0006,#ff0005,#ff0004,#ff0004,#ff0003)"></i><i style="background:linear-gradient(90deg,#00ff7d,#00ff7e,#00ff80,#00ff81,#00ff83,#00ff85,#00ff87,#00ff89,#00ff8b,#00ff8d,#00ff90,#00ff92,#1eff95,#46ff99,#72ff9c,#a2ffa0,#d7ffa4,#ffed9d,#ffc083,#ff9e6f,#ff8360,#ff6e54,#ff5d4a,#ff4f42,#ff433b,#ff3935,#ff3030,#ff292c,#ff2228,#ff1c24,#ff1621,#ff121e,#ff0d1c,#ff0919,#ff0617,#ff0215,#ff0014,#ff0012,#ff0011,#ff000f,#ff000e,#ff000d,#ff000c,#ff000a,#ff0009,#ff0009,#ff0008,#ff0007,#ff0006,#ff0005,#ff0005)"></i><i style="background:linear-gradient(90deg,#00ff83,#00ff85,#00ff87,#00ff89,#00ff8a,#00ff8c,#00ff8f,#00ff91,#00ff93,#00ff96,#00ff99,#00ff9c,#1dff9f,#45ffa3,#72ffa7,#a2ffab,#d8ffb0,#ffeca8,#ffbe8c,#ff9c77,#ff8267,#ff6d5a,#ff5c50,#ff4e47,#ff4240,#ff3839,#ff2f34,#ff282f,#ff212b,#ff1b28,#ff1524,#ff1121,#ff0c1f,#ff081c,#ff051a,#ff0118,#ff0016,#ff0014,#ff0013,#ff0011,#ff0010,#ff000f,#ff000d,#ff000c,#ff000b,#ff000a,#ff0009,#ff0008,#ff0008,#ff0007,#ff0006)"></i><i style="background:linear-gradient(90deg,#00ff8a,#00ff8c,#00ff8e,#00ff90,#00ff92,#00ff94,#00ff97,#00ff99,#00ff9c,#00ff9f,#00ffa2,#00ffa6,#1bffaa,#44ffae,#71ffb2,#a3ffb7,#d9ffbd,#ffebb3,#ffbd95,#ff9b7f,#ff816e,#ff6c60,#ff5b55,#ff4d4c,#ff4144,#ff373e,#ff2e38,#ff2733,#ff202f,#ff1a2b,#ff1527,#ff1024,#ff0c21,#ff081f,#ff041d,#ff011a,#ff0018,#ff0017,#ff0015,#ff0013,#ff0012,#ff0011,#ff000f,#ff000e,#ff000d,#ff000c,#ff000b,#ff000a,#ff0009,#ff0008,#ff0008)"></i><i style="background:linear-gradient(90deg,#00ff91,#00ff93,#00ff95,#00ff97,#00ff99,#00ff9c,#00ff9f,#00ffa2,#00ffa5,#00ffa8,#00ffac,#00ffb0,#1affb4,#44ffb9,#71ffbe,#a3ffc3,#daffca,#ffe9bf,#ffbb9f,#ff9987,#ff7f75,#ff6a67,#ff5a5b,#ff4c51,#ff4049,#ff3642,#ff2d3c,#ff2637,#ff1f32,#ff192e,#ff142b,#ff0f27,#ff0b24,#ff0722,#ff031f,#ff001d,#ff001b,#ff0019,#ff0017,#ff0015,#ff0014,#ff0013,#ff0011,#ff0010,#ff000f,#ff000e,#ff000d,#ff000c,#ff000b,#ff000a,#ff0009)"></i><i style="background:linear-gradient(90deg,#00ff97,#00ff9a,#00ff9c,#00ff9e,#00ffa1,#00ffa4,#00ffa7,#00ffaa,#00ffae,#00ffb1,#00ffb5,#00ffba,#19ffbf,#43ffc4,#71ffca,#a3ffd0,#dbffd7,#ffe8ca,#ffbaa8,#ff988f,#ff7e7c,#ff696d,#ff5861,#ff4a57,#ff3f4e,#ff3547,#ff2c40,#ff253b,#ff1e36,#ff1832,#ff132e,#ff0e2a,#ff0a27,#ff0624,#ff0222,#ff001f,#ff001d,#ff001b,#ff0019,#ff0018,#ff0016,#ff0015,#ff0013,#ff0012,#ff0011,#ff000f,#ff000e,#ff000d,#ff000c,#ff000b,#ff000b)"></i><i style="background:linear-gradient(90deg,#00ff9e,#00ffa1,#00ffa3,#00ffa6,#00ffa9,#00ffac,#00ffaf,#00ffb3,#00ffb7,#00ffbb,#00ffbf,#00ffc4,#18ffc9,#42ffcf,#70ffd6,#a3ffdd,#dcffe4,#ffe6d6,#ffb8b2,#ff9698,#ff7c84,#ff6874,#ff5767,#ff495c,#ff3d53,#ff344b,#ff2b44,#ff233f,#ff1d39,#ff1735,#ff1231,#ff0d2d,#ff092a,#ff0527,#ff0224,#ff0022,#ff0020,#ff001d,#ff001c,#ff001a,#ff0018,#ff0016,#ff0015,#ff0014,#ff0012,#ff0011,#ff0010,#ff000f,#ff000e,#ff000d,#ff000c)"></i><i style="background:linear-gradient(90deg,#00ffa5,#00ffa8,#00ffab,#00ffae,#00ffb1,#00ffb4,#00ffb8,#00ffbc,#00ffc0,#00ffc5,#00ffc9,#00ffcf,#16ffd5,#41ffdb,#70ffe2,#a3ffea,#ddfff2,#ffe5e2,#ffb7bc,#ff95a0,#ff7b8b,#ff667a,#ff566c,#ff4861,#ff3c58,#ff3250,#ff2a49,#ff2242,#ff1c3d,#ff1638,#ff1134,#ff0c30,#ff082d,#ff042a,#ff0127,#ff0024,#ff0022,#ff0020,#ff001e,#ff001c,#ff001a,#ff0018,#ff0017,#ff0016,#ff0014,#ff0013,#ff0012,#ff0011,#ff0010,#ff000f,#ff000e)"></i><i style="background:linear-gradient(90deg,#00ffac,#00ffaf,#00ffb2,#00ffb5,#00ffb9,#00ffbd,#00ffc1,#00ffc5,#00ffc9,#00ffce,#00ffd4,#00ffda,#15ffe0,#40ffe7,#6fffef,#a4fff7,#dcfeff,#ffe3ee,#ffb5c6,#ff93a9,#ff7992,#ff6581,#ff5472,#ff4766,#ff3b5c,#ff3154,#ff294d,#ff2146,#ff1b41,#ff153c,#ff1037,#ff0c33,#ff0730,#ff042d,#ff002a,#ff0027,#ff0024,#ff0022,#ff0020,#ff001e,#ff001c,#ff001a,#ff0019,#ff0017,#ff0016,#ff0015,#ff0013,#ff0012,#ff0011,#ff0010,#ff000f)"></i><i style="background:linear-gradient(90deg,#00ffb3,#00ffb6,#00ffba,#00ffbd,#00ffc1,#00ffc5,#00ffc9,#00ffce,#00ffd3,#00ffd8,#00ffde,#00ffe5,#14ffec,#3ffff3,#6ffffc,#a0f9ff,#d1f0ff,#ffe1fa,#ffb3d0,#ff92b1,#ff789a,#ff6387,#ff5378,#ff456c,#ff3a61,#ff3059,#ff2851,#ff204a,#ff1a44,#ff143f,#ff0f3b,#ff0b36,#ff0733,#ff032f,#ff002c,#ff0029,#ff0027,#ff0024,#ff0022,#ff0020,#ff001e,#ff001c,#ff001b,#ff0019,#ff0018,#ff0016,#ff0015,#ff0014,#ff0013,#ff0012,#ff0011)"></i><i style="background:linear-gradient(90deg,#00ffba,#00ffbe,#00ffc1,#00ffc5,#00ffc9,#00ffce,#00ffd2,#00ffd7,#00ffdd,#00ffe3,#00ffe9,#00fff0,#12fff7,#3efeff,#6af6ff,#98edff,#c7e3ff,#f8daff,#ffb2da,#ff90ba,#ff76a1,#ff628e,#ff527e,#ff4471,#ff3966,#ff2f5d,#ff2755,#ff1f4e,#ff1948,#ff1343,#ff0e3e,#ff0a39,#ff0636,#ff0232,#ff002f,#ff002c,#ff0029,#ff0027,#ff0024,#ff0022,#ff0020,#ff001e,#ff001d,#ff001b,#ff001a,#ff0018,#ff0017,#ff0016,#ff0014,#ff0013,#ff0012)"></i><i style="background:linear-gradient(90deg,#00ffc2,#00ffc5,#00ffc9,#00ffcd,#00ffd2,#00ffd6,#00ffdb,#00ffe1,#00ffe7,#00ffed,#00fff4,#00fffb,#11fbff,#3af2ff,#65eaff,#91e1ff,#bed8ff,#edceff,#ffb0e5,#ff8ec3,#ff75a9,#ff6195,#ff5084,#ff4377,#ff376b,#ff2e62,#ff2559,#ff1e52,#ff184c,#ff1246,#ff0d41,#ff093d,#ff0539,#ff0135,#ff0031,#ff002e,#ff002c,#ff0029,#ff0027,#ff0024,#ff0022,#ff0020,#ff001f,#ff001d,#ff001b,#ff001a,#ff0018,#ff0017,#ff0016,#ff0015,#ff0014)"></i><i style="background:linear-gradient(90deg,#00ffc9,#00ffcd,#00ffd1,#00ffd6,#00ffda,#00ffdf,#00ffe5,#00ffeb,#00fff1,#00fff8,#00ffff,#00f7ff,#0fefff,#37e7ff,#60deff,#8ad6ff,#b5cdff,#e2c4ff,#ffaeef,#ff8dcc,#ff73b1,#ff5f9b,#ff4f8a,#ff417c,#ff3670,#ff2d66,#ff245e,#ff1d56,#ff174f,#ff114a,#ff0c44,#ff0840,#ff043b,#ff0038,#ff0034,#ff0031,#ff002e,#ff002b,#ff0029,#ff0027,#ff0024,#ff0022,#ff0021,#ff001f,#ff001d,#ff001c,#ff001a,#ff0019,#ff0018,#ff0016,#ff0015)"></i><i style="background:linear-gradient(90deg,#00ffd1,#00ffd5,#00ffd9,#00ffde,#00ffe3,#00ffe8,#00ffee,#00fff4,#00fffb,#00fcff,#00f4ff,#00ecff,#0de5ff,#33dcff,#5bd4ff,#84ccff,#adc3ff,#d8baff,#ffadfa,#ff8bd4,#ff72b8,#ff5ea2,#ff4d90,#ff4082,#ff3575,#ff2b6b,#ff2362,#ff1c5a,#ff1653,#ff104d,#ff0b48,#ff0743,#ff033e,#ff003a,#ff0037,#ff0034,#ff0030,#ff002e,#ff002b,#ff0029,#ff0027,#ff0024,#ff0023,#ff0021,#ff001f,#ff001d,#ff001c,#ff001a,#ff0019,#ff0018,#ff0017)"></i><i style="background:linear-gradient(90deg,#00ffd8,#00ffdd,#00ffe1,#00ffe6,#00ffec,#00fff2,#00fff8,#00fffe,#00f9ff,#00f1ff,#00eaff,#00e2ff,#0bdbff,#30d3ff,#56caff,#7ec2ff,#a6baff,#cfb1ff,#faa8ff,#ff8ade,#ff70c0,#ff5ca9,#ff4c96,#ff3f87,#ff347a,#ff2a6f,#ff2266,#ff1b5e,#ff1557,#ff0f51,#ff0b4b,#ff0646,#ff0241,#ff003d,#ff003a,#ff0036,#ff0033,#ff0030,#ff002d,#ff002b,#ff0029,#ff0026,#ff0024,#ff0023,#ff0021,#ff001f,#ff001e,#ff001c,#ff001b,#ff0019,#ff0018)"></i><i style="background:linear-gradient(90deg,#00ffe0,#00ffe5,#00ffea,#00ffef,#00fff5,#00fffb,#00fcff,#00f6ff,#00efff,#00e8ff,#00e0ff,#00d9ff,#09d1ff,#2dc9ff,#52c1ff,#78b9ff,#9fb1ff,#c7a8ff,#f09fff,#ff88e7,#ff6ec8,#ff5bb0,#ff4b9d,#ff3d8d,#ff327f,#ff2974,#ff216a,#ff1a62,#ff145b,#ff0e54,#ff0a4e,#ff0549,#ff0144,#ff0040,#ff003c,#ff0039,#ff0035,#ff0032,#ff0030,#ff002d,#ff002b,#ff0028,#ff0026,#ff0024,#ff0023,#ff0021,#ff001f,#ff001e,#ff001c,#ff001b,#ff001a)"></i><i style="background:linear-gradient(90deg,#00ffe8,#00ffed,#00fff2,#00fff8,#00fffe,#00faff,#00f3ff,#00ecff,#00e5ff,#00deff,#00d7ff,#00d0ff,#07c9ff,#2ac1ff,#4eb9ff,#73b1ff,#98a9ff,#bfa0ff,#e698ff,#ff86f0,#ff6dd0,#ff59b7,#ff49a3,#ff3c92,#ff3185,#ff2879,#ff206f,#ff1966,#ff135e,#ff0d58,#ff0952,#ff044c,#ff0147,#ff0043,#ff003f,#ff003b,#ff0038,#ff0035,#ff0032,#ff002f,#ff002d,#ff002b,#ff0028,#ff0026,#ff0024,#ff0023,#ff0021,#ff001f,#ff001e,#ff001d,#ff001b)"></i><i style="background:linear-gradient(90deg,#00fff0,#00fff5,#00fffb,#00fdff,#00f7ff,#00f1ff,#00eaff,#00e4ff,#00ddff,#00d6ff,#00cfff,#00c8ff,#06c0ff,#28b9ff,#4ab1ff,#6ea9ff,#92a1ff,#b899ff,#de90ff,#ff84f9,#ff6bd8,#ff58be,#ff48a9,#ff3b98,#ff308a,#ff277e,#ff1f73,#ff186a,#ff1262,#ff0c5b,#ff0855,#ff034f,#ff004a,#ff0046,#ff0042,#ff003e,#ff003a,#ff0037,#ff0034,#ff0031,#ff002f,#ff002d,#ff002a,#ff0028,#ff0026,#ff0024,#ff0023,#ff0021,#ff0020,#ff001e,#ff001d)"></i><i style="background:linear-gradient(90deg,#00fff8,#00fffe,#00faff,#00f4ff,#00eeff,#00e8ff,#00e2ff,#00dbff,#00d5ff,#00ceff,#00c7ff,#00c0ff,#04b9ff,#25b1ff,#47aaff,#69a2ff,#8d9aff,#b192ff,#d689ff,#fb81ff,#ff6ae0,#ff56c5,#ff46b0,#ff399e,#ff2f8f,#ff2582,#ff1e78,#ff176e,#ff1166,#ff0b5f,#ff0758,#ff0353,#ff004d,#ff0049,#ff0044,#ff0040,#ff003d,#ff003a,#ff0036,#ff0034,#ff0031,#ff002f,#ff002c,#ff002a,#ff0028,#ff0026,#ff0024,#ff0023,#ff0021,#ff0020,#ff001e)"></i><i style="background:linear-gradient(90deg,#00feff,#00f8ff,#00f2ff,#00ecff,#00e6ff,#00e0ff,#00daff,#00d3ff,#00cdff,#00c6ff,#00bfff,#00b8ff,#03b1ff,#23aaff,#44a2ff,#659bff,#8793ff,#aa8bff,#ce83ff,#f27bff,#ff68e8,#ff54cc,#ff45b6,#ff38a4,#ff2d94,#ff2487,#ff1c7c,#ff1672,#ff106a,#ff0a62,#ff065c,#ff0256,#ff0050,#ff004b,#ff0047,#ff0043,#ff003f,#ff003c,#ff0039,#ff0036,#ff0033,#ff0031,#ff002e,#ff002c,#ff002a,#ff0028,#ff0026,#ff0025,#ff0023,#ff0021,#ff0020)"></i><i style="background:linear-gradient(90deg,#00f6ff,#00f0ff,#00eaff,#00e4ff,#00deff,#00d8ff,#00d2ff,#00ccff,#00c5ff,#00bfff,#00b8ff,#00b1ff,#02aaff,#21a3ff,#409cff,#6194ff,#828dff,#a485ff,#c77dff,#ea75ff,#ff66f1,#ff53d4,#ff43bc,#ff37a9,#ff2c99,#ff238c,#ff1b80,#ff1576,#ff0f6e,#ff0966,#ff055f,#ff0159,#ff0053,#ff004e,#ff004a,#ff0046,#ff0042,#ff003e,#ff003b,#ff0038,#ff0035,#ff0033,#ff0030,#ff002e,#ff002c,#ff002a,#ff0028,#ff0026,#ff0025,#ff0023,#ff0021)"></i><i style="background:linear-gradient(90deg,#00eeff,#00e9ff,#00e3ff,#00ddff,#00d7ff,#00d1ff,#00cbff,#00c5ff,#00beff,#00b8ff,#00b1ff,#00abff,#00a4ff,#1f9dff,#3e95ff,#5d8eff,#7d87ff,#9e7fff,#c077ff,#e26fff,#ff65f9,#ff51db,#ff42c3,#ff35af,#ff2b9f,#ff2291,#ff1a85,#ff137b,#ff0e72,#ff086a,#ff0462,#ff005c,#ff0056,#ff0051,#ff004d,#ff0048,#ff0044,#ff0041,#ff003d,#ff003a,#ff0037,#ff0035,#ff0032,#ff0030,#ff002e,#ff002c,#ff002a,#ff0028,#ff0026,#ff0025,#ff0023)"></i><i style="background:linear-gradient(90deg,#00e7ff,#00e1ff,#00dcff,#00d6ff,#00d0ff,#00caff,#00c4ff,#00beff,#00b8ff,#00b1ff,#00abff,#00a4ff,#009dff,#1d97ff,#3b8fff,#5988ff,#7981ff,#9979ff,#b972ff,#db6aff,#fd62ff,#ff50e2,#ff40c9,#ff34b5,#ff29a4,#ff2096,#ff1989,#ff127f,#ff0d75,#ff076d,#ff0366,#ff005f,#ff0059,#ff0054,#ff004f,#ff004b,#ff0047,#ff0043,#ff0040,#ff003c,#ff003a,#ff0037,#ff0034,#ff0032,#ff0030,#ff002d,#ff002b,#ff002a,#ff0028,#ff0026,#ff0025)"></i><i style="background:linear-gradient(90deg,#00e0ff,#00daff,#00d5ff,#00cfff,#00c9ff,#00c4ff,#00beff,#00b8ff,#00b1ff,#00abff,#00a5ff,#009eff,#0098ff,#1b91ff,#388aff,#5683ff,#747cff,#9374ff,#b36dff,#d365ff,#f45dff,#ff4eea,#ff3fd0,#ff32bb,#ff28a9,#ff1f9b,#ff188e,#ff1183,#ff0b79,#ff0671,#ff0269,#ff0063,#ff005d,#ff0057,#ff0052,#ff004e,#ff0049,#ff0046,#ff0042,#ff003f,#ff003c,#ff0039,#ff0036,#ff0034,#ff0031,#ff002f,#ff002d,#ff002b,#ff0029,#ff0028,#ff0026)"></i><i style="background:linear-gradient(90deg,#00d9ff,#00d4ff,#00ceff,#00c9ff,#00c3ff,#00bdff,#00b7ff,#00b2ff,#00abff,#00a5ff,#009fff,#0098ff,#0092ff,#198bff,#3684ff,#537dff,#7076ff,#8e6fff,#ad68ff,#cd60ff,#ed59ff,#ff4cf1,#ff3dd7,#ff31c1,#ff27af,#ff1ea0,#ff1692,#ff1087,#ff0a7d,#ff0575,#ff016d,#ff0066,#ff0060,#ff005a,#ff0055,#ff0050,#ff004c,#ff0048,#ff0044,#ff0041,#ff003e,#ff003b,#ff0038,#ff0036,#ff0033,#ff0031,#ff002f,#ff002d,#ff002b,#ff0029,#ff0028)"></i><i style="background:linear-gradient(90deg,#00d3ff,#00ceff,#00c8ff,#00c3ff,#00bdff,#00b7ff,#00b2ff,#00acff,#00a6ff,#00a0ff,#0099ff,#0093ff,#008dff,#1786ff,#337fff,#5078ff,#6c72ff,#8a6aff,#a863ff,#c65cff,#e654ff,#ff4bf9,#ff3cdd,#ff30c7,#ff25b4,#ff1da5,#ff1597,#ff0f8b,#ff0981,#ff0478,#ff0070,#ff0069,#ff0063,#ff005d,#ff0058,#ff0053,#ff004e,#ff004a,#ff0047,#ff0043,#ff0040,#ff003d,#ff003a,#ff0038,#ff0035,#ff0033,#ff0031,#ff002f,#ff002d,#ff002b,#ff0029)"></i><i style="background:linear-gradient(90deg,#00cdff,#00c8ff,#00c2ff,#00bdff,#00b7ff,#00b2ff,#00acff,#00a6ff,#00a0ff,#009aff,#0094ff,#008eff,#0087ff,#1681ff,#317aff,#4d74ff,#696dff,#8566ff,#a35fff,#c058ff,#df50ff,#fe49ff,#ff3ae4,#ff2ecd,#ff24ba,#ff1baa,#ff149c,#ff0e90,#ff0885,#ff037c,#ff0074,#ff006c,#ff0066,#ff0060,#ff005a,#ff0055,#ff0051,#ff004d,#ff0049,#ff0045,#ff0042,#ff003f,#ff003c,#ff003a,#ff0037,#ff0035,#ff0032,#ff0030,#ff002e,#ff002d,#ff002b)"></i><i style="background:linear-gradient(90deg,#00c7ff,#00c2ff,#00bcff,#00b7ff,#00b2ff,#00acff,#00a6ff,#00a1ff,#009bff,#0095ff,#008fff,#0089ff,#0083ff,#147cff,#2f76ff,#4a6fff,#6568ff,#8162ff,#9e5bff,#bb54ff,#d84cff,#f645ff,#ff39eb,#ff2dd3,#ff23bf,#ff1aaf,#ff13a0,#ff0d94,#ff0789,#ff0280,#ff0077,#ff0070,#ff0069,#ff0063,#ff005d,#ff0058,#ff0054,#ff004f,#ff004b,#ff0048,#ff0044,#ff0041,#ff003e,#ff003b,#ff0039,#ff0036,#ff0034,#ff0032,#ff0030,#ff002e,#ff002c)"></i><i style="background:linear-gradient(90deg,#00c1ff,#00bcff,#00b7ff,#00b2ff,#00acff,#00a7ff,#00a1ff,#009cff,#0096ff,#0090ff,#008aff,#0084ff,#007eff,#1378ff,#2d71ff,#476bff,#6264ff,#7d5eff,#9957ff,#b550ff,#d249ff,#ef41ff,#ff37f2,#ff2bd9,#ff21c5,#ff19b4,#ff12a5,#ff0b98,#ff068d,#ff0183,#ff007b,#ff0073,#ff006c,#ff0066,#ff0060,#ff005b,#ff0056,#ff0052,#ff004e,#ff004a,#ff0046,#ff0043,#ff0040,#ff003d,#ff003b,#ff0038,#ff0036,#ff0034,#ff0032,#ff0030,#ff002e)"></i><i style="background:linear-gradient(90deg,#00bcff,#00b7ff,#00b2ff,#00adff,#00a7ff,#00a2ff,#009cff,#0097ff,#0091ff,#008bff,#0086ff,#0080ff,#007aff,#1173ff,#2b6dff,#4467ff,#5f60ff,#795aff,#9453ff,#b04cff,#cc45ff,#e83eff,#ff36f9,#ff2adf,#ff20ca,#ff18b9,#ff10aa,#ff0a9d,#ff0591,#ff0087,#ff007e,#ff0076,#ff006f,#ff0069,#ff0063,#ff005e,#ff0059,#ff0054,#ff0050,#ff004c,#ff0049,#ff0045,#ff0042,#ff003f,#ff003d,#ff003a,#ff0038,#ff0036,#ff0033,#ff0031,#ff002f)"></i><i style="background:linear-gradient(90deg,#00b7ff,#00b2ff,#00adff,#00a8ff,#00a2ff,#009dff,#0098ff,#0092ff,#008cff,#0087ff,#0081ff,#007bff,#0075ff,#106fff,#2969ff,#4263ff,#5b5cff,#7556ff,#904fff,#ab49ff,#c642ff,#e23bff,#fe34ff,#ff28e6,#ff1ed0,#ff16be,#ff0fae,#ff09a1,#ff0495,#ff008b,#ff0082,#ff007a,#ff0072,#ff006c,#ff0066,#ff0060,#ff005b,#ff0057,#ff0052,#ff004e,#ff004b,#ff0047,#ff0044,#ff0041,#ff003f,#ff003c,#ff003a,#ff0037,#ff0035,#ff0033,#ff0031)"></i><i style="background:linear-gradient(90deg,#00b2ff,#00adff,#00a8ff,#00a3ff,#009eff,#0098ff,#0093ff,#008eff,#0088ff,#0082ff,#007dff,#0077ff,#0071ff,#0f6bff,#2765ff,#405fff,#5959ff,#7252ff,#8c4cff,#a645ff,#c13fff,#dc38ff,#f831ff,#ff27ec,#ff1dd6,#ff15c3,#ff0eb3,#ff08a5,#ff0399,#ff008f,#ff0085,#ff007d,#ff0075,#ff006f,#ff0069,#ff0063,#ff005e,#ff0059,#ff0055,#ff0051,#ff004d,#ff004a,#ff0046,#ff0043,#ff0040,#ff003e,#ff003b,#ff0039,#ff0037,#ff0035,#ff0033)"></i><i style="background:linear-gradient(90deg,#00adff,#00a8ff,#00a3ff,#009eff,#0099ff,#0094ff,#008fff,#0089ff,#0084ff,#007eff,#0079ff,#0073ff,#006dff,#0e67ff,#2561ff,#3d5bff,#5655ff,#6f4fff,#8849ff,#a142ff,#bc3cff,#d635ff,#f12eff,#ff25f2,#ff1cdb,#ff14c8,#ff0db8,#ff07aa,#ff029d,#ff0093,#ff0089,#ff0080,#ff0079,#ff0072,#ff006b,#ff0066,#ff0060,#ff005c,#ff0057,#ff0053,#ff004f,#ff004c,#ff0048,#ff0045,#ff0042,#ff0040,#ff003d,#ff003b,#ff0038,#ff0036,#ff0034)"></i><i style="background:linear-gradient(90deg,#00a8ff,#00a4ff,#009fff,#009aff,#0095ff,#0090ff,#008aff,#0085ff,#0080ff,#007aff,#0075ff,#006fff,#006aff,#0c64ff,#245eff,#3b58ff,#5352ff,#6b4cff,#8445ff,#9d3fff,#b739ff,#d032ff,#eb2bff,#ff24f9,#ff1ae1,#ff12cd,#ff0bbd,#ff06ae,#ff01a1,#ff0096,#ff008d,#ff0084,#ff007c,#ff0075,#ff006e,#ff0068,#ff0063,#ff005e,#ff005a,#ff0055,#ff0051,#ff004e,#ff004a,#ff0047,#ff0044,#ff0042,#ff003f,#ff003c,#ff003a,#ff0038,#ff0036)"></i><i style="background:linear-gradient(90deg,#00a4ff,#009fff,#009aff,#0095ff,#0090ff,#008bff,#0086ff,#0081ff,#007cff,#0076ff,#0071ff,#006cff,#0066ff,#0b60ff,#225aff,#3955ff,#504fff,#6849ff,#8042ff,#993cff,#b236ff,#cb2fff,#e529ff,#ff22ff,#ff19e7,#ff11d3,#ff0ac1,#ff04b3,#ff00a6,#ff009a,#ff0090,#ff0087,#ff007f,#ff0078,#ff0071,#ff006b,#ff0066,#ff0061,#ff005c,#ff0058,#ff0054,#ff0050,#ff004c,#ff0049,#ff0046,#ff0043,#ff0041,#ff003e,#ff003c,#ff003a,#ff0037)"></i><i style="background:linear-gradient(90deg,#00a0ff,#009bff,#0096ff,#0091ff,#008cff,#0087ff,#0082ff,#007dff,#0078ff,#0073ff,#006dff,#0068ff,#0062ff,#0a5dff,#2057ff,#3751ff,#4e4bff,#6546ff,#7d3fff,#9539ff,#ad33ff,#c62dff,#df26ff,#f920ff,#ff17ed,#ff10d8,#ff09c6,#ff03b7,#ff00aa,#ff009e,#ff0094,#ff008b,#ff0082,#ff007b,#ff0074,#ff006e,#ff0068,#ff0063,#ff005e,#ff005a,#ff0056,#ff0052,#ff004f,#ff004b,#ff0048,#ff0045,#ff0042,#ff0040,#ff003d,#ff003b,#ff0039)"></i><i style="background:linear-gradient(90deg,#009cff,#0097ff,#0092ff,#008dff,#0089ff,#0084ff,#007fff,#007aff,#0074ff,#006fff,#006aff,#0065ff,#005fff,#095aff,#1f54ff,#354eff,#4c49ff,#6243ff,#793dff,#9137ff,#a931ff,#c12aff,#da24ff,#f31eff,#ff16f3,#ff0edd,#ff08cb,#ff02bb,#ff00ae,#ff00a2,#ff0097,#ff008e,#ff0085,#ff007e,#ff0077,#ff0071,#ff006b,#ff0066,#ff0061,#ff005c,#ff0058,#ff0054,#ff0051,#ff004d,#ff004a,#ff0047,#ff0044,#ff0042,#ff003f,#ff003d,#ff003b)"></i><i style="background:linear-gradient(90deg,#0098ff,#0093ff,#008eff,#008aff,#0085ff,#0080ff,#007bff,#0076ff,#0071ff,#006cff,#0067ff,#0061ff,#005cff,#0856ff,#1e51ff,#334bff,#4946ff,#6040ff,#763aff,#8d34ff,#a52eff,#bc28ff,#d422ff,#ed1bff,#ff14f8,#ff0de3,#ff06d0,#ff01c0,#ff00b2,#ff00a6,#ff009b,#ff0091,#ff0089,#ff0081,#ff007a,#ff0073,#ff006e,#ff0068,#ff0063,#ff005f,#ff005a,#ff0056,#ff0053,#ff004f,#ff004c,#ff0049,#ff0046,#ff0043,#ff0041,#ff003e,#ff003c)"></i><i style="background:linear-gradient(90deg,#0094ff,#008fff,#008bff,#0086ff,#0081ff,#007cff,#0077ff,#0073ff,#006eff,#0068ff,#0063ff,#005eff,#0059ff,#0753ff,#1c4eff,#3148ff,#4743ff,#5d3dff,#7337ff,#8a32ff,#a12cff,#b826ff,#cf1fff,#e719ff,#ff13fe,#ff0be8,#ff05d5,#ff00c5,#ff00b6,#ff00aa,#ff009f,#ff0095,#ff008c,#ff0084,#ff007d,#ff0076,#ff0070,#ff006b,#ff0066,#ff0061,#ff005d,#ff0058,#ff0055,#ff0051,#ff004e,#ff004b,#ff0048,#ff0045,#ff0043,#ff0040,#ff003e)"></i><i style="background:linear-gradient(90deg,#0090ff,#008bff,#0087ff,#0082ff,#007eff,#0079ff,#0074ff,#006fff,#006aff,#0065ff,#0060ff,#005bff,#0056ff,#0651ff,#1b4bff,#3046ff,#4540ff,#5a3bff,#7035ff,#862fff,#9d29ff,#b323ff,#cb1dff,#e217ff,#fa11ff,#ff0aed,#ff04da,#ff00c9,#ff00ba,#ff00ae,#ff00a2,#ff0098,#ff008f,#ff0087,#ff0080,#ff0079,#ff0073,#ff006d,#ff0068,#ff0063,#ff005f,#ff005b,#ff0057,#ff0053,#ff0050,#ff004d,#ff004a,#ff0047,#ff0044,#ff0042,#ff003f)"></i><i style="background:linear-gradient(90deg,#008cff,#0088ff,#0083ff,#007fff,#007aff,#0076ff,#0071ff,#006cff,#0067ff,#0062ff,#005dff,#0058ff,#0053ff,#054eff,#1a48ff,#2e43ff,#433eff,#5838ff,#6d33ff,#832dff,#9927ff,#af21ff,#c61bff,#dd15ff,#f40fff,#ff09f3,#ff02df,#ff00ce,#ff00bf,#ff00b2,#ff00a6,#ff009c,#ff0093,#ff008a,#ff0083,#ff007c,#ff0076,#ff0070,#ff006a,#ff0066,#ff0061,#ff005d,#ff0059,#ff0055,#ff0052,#ff004f,#ff004c,#ff0049,#ff0046,#ff0043,#ff0041)"></i><i style="background:linear-gradient(90deg,#0089ff,#0084ff,#0080ff,#007cff,#0077ff,#0072ff,#006eff,#0069ff,#0064ff,#005fff,#005aff,#0055ff,#0050ff,#054bff,#1846ff,#2c41ff,#413bff,#5636ff,#6b30ff,#802bff,#9525ff,#ab1fff,#c119ff,#d814ff,#ef0eff,#ff07f8,#ff01e4,#ff00d2,#ff00c3,#ff00b6,#ff00aa,#ff009f,#ff0096,#ff008d,#ff0086,#ff007f,#ff0078,#ff0072,#ff006d,#ff0068,#ff0063,#ff005f,#ff005b,#ff0057,#ff0054,#ff0050,#ff004d,#ff004a,#ff0048,#ff0045,#ff0043)"></i><i style="background:linear-gradient(90deg,#0086ff,#0081ff,#007dff,#0078ff,#0074ff,#006fff,#006bff,#0066ff,#0061ff,#005cff,#0057ff,#0052ff,#004dff,#0448ff,#1743ff,#2b3eff,#3f39ff,#5333ff,#682eff,#7d29ff,#9223ff,#a71dff,#bd18ff,#d312ff,#e90cff,#ff06fe,#ff00e9,#ff00d7,#ff00c7,#ff00ba,#ff00ae,#ff00a3,#ff0099,#ff0090,#ff0089,#ff0081,#ff007b,#ff0075,#ff006f,#ff006a,#ff0066,#ff0061,#ff005d,#ff0059,#ff0056,#ff0052,#ff004f,#ff004c,#ff0049,#ff0047,#ff0044)"></i><i style="background:linear-gradient(90deg,#0082ff,#007eff,#007aff,#0075ff,#0071ff,#006cff,#0068ff,#0063ff,#005eff,#005aff,#0055ff,#0050ff,#004bff,#0346ff,#1641ff,#293cff,#3d36ff,#5131ff,#652cff,#7a26ff,#8f21ff,#a41bff,#b916ff,#cf10ff,#e40aff,#fb04ff,#ff00ee,#ff00dc,#ff00cc,#ff00be,#ff00b1,#ff00a6,#ff009c,#ff0094,#ff008c,#ff0084,#ff007e,#ff0077,#ff0072,#ff006d,#ff0068,#ff0063,#ff005f,#ff005b,#ff0058,#ff0054,#ff0051,#ff004e,#ff004b,#ff0048,#ff0046)"></i><i style="background:linear-gradient(90deg,#007fff,#007bff,#0076ff,#0072ff,#006eff,#0069ff,#0065ff,#0060ff,#005cff,#0057ff,#0052ff,#004dff,#0048ff,#0243ff,#153eff,#2839ff,#3b34ff,#4f2fff,#632aff,#7724ff,#8b1fff,#a01aff,#b514ff,#ca0eff,#e009ff,#f503ff,#ff00f3,#ff00e0,#ff00d0,#ff00c2,#ff00b5,#ff00aa,#ff00a0,#ff0097,#ff008f,#ff0087,#ff0080,#ff007a,#ff0074,#ff006f,#ff006a,#ff0066,#ff0061,#ff005d,#ff005a,#ff0056,#ff0053,#ff0050,#ff004d,#ff004a,#ff0048)"></i><i style="background:linear-gradient(90deg,#007cff,#0078ff,#0074ff,#006fff,#006bff,#0066ff,#0062ff,#005dff,#0059ff,#0054ff,#0050ff,#004bff,#0046ff,#0141ff,#143cff,#2737ff,#3a32ff,#4d2dff,#6028ff,#7423ff,#881dff,#9c18ff,#b112ff,#c60dff,#db07ff,#f001ff,#ff00f8,#ff00e5,#ff00d4,#ff00c6,#ff00b9,#ff00ad,#ff00a3,#ff009a,#ff0092,#ff008a,#ff0083,#ff007d,#ff0077,#ff0071,#ff006c,#ff0068,#ff0063,#ff005f,#ff005c,#ff0058,#ff0055,#ff0052,#ff004f,#ff004c,#ff0049)"></i><i style="background:linear-gradient(90deg,#0079ff,#0075ff,#0071ff,#006cff,#0068ff,#0064ff,#005fff,#005bff,#0056ff,#0052ff,#004dff,#0048ff,#0044ff,#013fff,#133aff,#2535ff,#3830ff,#4b2bff,#5e26ff,#7121ff,#851bff,#9916ff,#ad11ff,#c20bff,#d606ff,#eb00ff,#ff00fd,#ff00ea,#ff00d9,#ff00ca,#ff00bd,#ff00b1,#ff00a7,#ff009d,#ff0095,#ff008d,#ff0086,#ff007f,#ff0079,#ff0074,#ff006f,#ff006a,#ff0066,#ff0061,#ff005e,#ff005a,#ff0057,#ff0053,#ff0050,#ff004d,#ff004b)"></i><i style="background:linear-gradient(90deg,#0076ff,#0072ff,#006eff,#006aff,#0065ff,#0061ff,#005dff,#0058ff,#0054ff,#004fff,#004bff,#0046ff,#0041ff,#003dff,#1238ff,#2433ff,#362eff,#4929ff,#5c24ff,#6f1fff,#821aff,#9614ff,#aa0fff,#be0aff,#d204ff,#e700ff,#fb00ff,#ff00ef,#ff00dd,#ff00ce,#ff00c0,#ff00b5,#ff00aa,#ff00a0,#ff0098,#ff0090,#ff0088,#ff0082,#ff007c,#ff0076,#ff0071,#ff006c,#ff0068,#ff0063,#ff0060,#ff005c,#ff0058,#ff0055,#ff0052,#ff004f,#ff004c)"></i><i style="background:linear-gradient(90deg,#0073ff,#006fff,#006bff,#0067ff,#0063ff,#005eff,#005aff,#0056ff,#0051ff,#004dff,#0048ff,#0044ff,#003fff,#003aff,#1136ff,#2331ff,#352cff,#4727ff,#5a22ff,#6c1dff,#7f18ff,#9313ff,#a60eff,#ba08ff,#ce03ff,#e200ff,#f600ff,#ff00f3,#ff00e2,#ff00d2,#ff00c4,#ff00b8,#ff00ad,#ff00a3,#ff009b,#ff0093,#ff008b,#ff0084,#ff007e,#ff0079,#ff0073,#ff006e,#ff006a,#ff0065,#ff0061,#ff005e,#ff005a,#ff0057,#ff0054,#ff0051,#ff004e)"></i><i style="background:linear-gradient(90deg,#0071ff,#006cff,#0068ff,#0064ff,#0060ff,#005cff,#0058ff,#0053ff,#004fff,#004bff,#0046ff,#0042ff,#003dff,#0038ff,#1034ff,#212fff,#332aff,#4525ff,#5720ff,#6a1bff,#7d16ff,#9011ff,#a30cff,#b607ff,#ca02ff,#de00ff,#f200ff,#ff00f8,#ff00e6,#ff00d6,#ff00c8,#ff00bc,#ff00b1,#ff00a7,#ff009e,#ff0095,#ff008e,#ff0087,#ff0081,#ff007b,#ff0076,#ff0071,#ff006c,#ff0068,#ff0063,#ff0060,#ff005c,#ff0059,#ff0056,#ff0053,#ff0050)"></i><i style="background:linear-gradient(90deg,#006eff,#006aff,#0066ff,#0062ff,#005eff,#0059ff,#0055ff,#0051ff,#004dff,#0048ff,#0044ff,#003fff,#003bff,#0036ff,#0f32ff,#202dff,#3228ff,#4424ff,#551fff,#681aff,#7a15ff,#8d10ff,#9f0bff,#b206ff,#c600ff,#d900ff,#ed00ff,#ff00fd,#ff00eb,#ff00da,#ff00cc,#ff00bf,#ff00b4,#ff00aa,#ff00a1,#ff0098,#ff0091,#ff008a,#ff0083,#ff007d,#ff0078,#ff0073,#ff006e,#ff006a,#ff0065,#ff0062,#ff005e,#ff005b,#ff0057,#ff0054,#ff0051)"></i><i style="background:linear-gradient(90deg,#006bff,#0067ff,#0063ff,#005fff,#005bff,#0057ff,#0053ff,#004fff,#004aff,#0046ff,#0042ff,#003dff,#0039ff,#0034ff,#0e30ff,#1f2bff,#3027ff,#4222ff,#531dff,#6518ff,#7713ff,#8a0eff,#9c09ff,#af04ff,#c200ff,#d500ff,#e800ff,#fc00ff,#ff00ef,#ff00df,#ff00d0,#ff00c3,#ff00b8,#ff00ad,#ff00a4,#ff009b,#ff0093,#ff008c,#ff0086,#ff0080,#ff007a,#ff0075,#ff0070,#ff006c,#ff0067,#ff0064,#ff0060,#ff005c,#ff0059,#ff0056,#ff0053)"></i><i style="background:linear-gradient(90deg,#0069ff,#0065ff,#0061ff,#005dff,#0059ff,#0055ff,#0051ff,#004cff,#0048ff,#0044ff,#0040ff,#003bff,#0037ff,#0032ff,#0d2eff,#1e29ff,#2f25ff,#4020ff,#521bff,#6317ff,#7512ff,#870dff,#9908ff,#ab03ff,#be00ff,#d100ff,#e400ff,#f700ff,#ff00f4,#ff00e3,#ff00d4,#ff00c7,#ff00bb,#ff00b0,#ff00a7,#ff009e,#ff0096,#ff008f,#ff0088,#ff0082,#ff007d,#ff0077,#ff0072,#ff006e,#ff0069,#ff0065,#ff0062,#ff005e,#ff005b,#ff0058,#ff0055)"></i><i style="background:linear-gradient(90deg,#0066ff,#0062ff,#005fff,#005bff,#0057ff,#0053ff,#004eff,#004aff,#0046ff,#0042ff,#003eff,#0039ff,#0035ff,#0031ff,#0c2cff,#1d28ff,#2e23ff,#3f1fff,#501aff,#6115ff,#7210ff,#840cff,#9607ff,#a802ff,#bb00ff,#cd00ff,#e000ff,#f300ff,#ff00f8,#ff00e7,#ff00d8,#ff00ca,#ff00be,#ff00b4,#ff00aa,#ff00a1,#ff0099,#ff0092,#ff008b,#ff0085,#ff007f,#ff0079,#ff0074,#ff0070,#ff006b,#ff0067,#ff0064,#ff0060,#ff005d,#ff0059,#ff0056)"></i><i style="background:linear-gradient(90deg,#0064ff,#0060ff,#005cff,#0058ff,#0054ff,#0050ff,#004cff,#0048ff,#0044ff,#0040ff,#003cff,#0037ff,#0033ff,#002fff,#0c2aff,#1c26ff,#2c21ff,#3d1dff,#4e18ff,#5f14ff,#700fff,#820aff,#9305ff,#a501ff,#b700ff,#c900ff,#dc00ff,#ee00ff,#ff00fd,#ff00eb,#ff00dc,#ff00ce,#ff00c2,#ff00b7,#ff00ad,#ff00a4,#ff009c,#ff0094,#ff008d,#ff0087,#ff0081,#ff007c,#ff0077,#ff0072,#ff006d,#ff0069,#ff0065,#ff0062,#ff005e,#ff005b,#ff0058)"></i><i style="background:linear-gradient(90deg,#0062ff,#005eff,#005aff,#0056ff,#0052ff,#004eff,#004aff,#0046ff,#0042ff,#003eff,#003aff,#0036ff,#0031ff,#002dff,#0b29ff,#1b24ff,#2b20ff,#3c1bff,#4c17ff,#5d12ff,#6e0eff,#7f09ff,#9004ff,#a200ff,#b400ff,#c600ff,#d800ff,#ea00ff,#fd00ff,#ff00ef,#ff00e0,#ff00d2,#ff00c5,#ff00ba,#ff00b0,#ff00a7,#ff009f,#ff0097,#ff0090,#ff008a,#ff0084,#ff007e,#ff0079,#ff0074,#ff0070,#ff006b,#ff0067,#ff0064,#ff0060,#ff005d,#ff005a)"></i><i style="background:linear-gradient(90deg,#005fff,#005cff,#0058ff,#0054ff,#0050ff,#004cff,#0048ff,#0044ff,#0040ff,#003cff,#0038ff,#0034ff,#0030ff,#002bff,#0a27ff,#1a23ff,#2a1eff,#3a1aff,#4a15ff,#5b11ff,#6c0cff,#7d08ff,#8e03ff,#9f00ff,#b000ff,#c200ff,#d400ff,#e600ff,#f800ff,#ff00f4,#ff00e4,#ff00d6,#ff00c9,#ff00be,#ff00b3,#ff00aa,#ff00a1,#ff009a,#ff0093,#ff008c,#ff0086,#ff0080,#ff007b,#ff0076,#ff0072,#ff006d,#ff0069,#ff0065,#ff0062,#ff005e,#ff005b)"></i><i style="background:linear-gradient(90deg,#005dff,#0059ff,#0056ff,#0052ff,#004eff,#004aff,#0046ff,#0042ff,#003eff,#003aff,#0036ff,#0032ff,#002eff,#002aff,#0926ff,#1921ff,#291dff,#3919ff,#4914ff,#5910ff,#690bff,#7a06ff,#8b02ff,#9c00ff,#ad00ff,#bf00ff,#d000ff,#e200ff,#f400ff,#ff00f8,#ff00e8,#ff00d9,#ff00cc,#ff00c1,#ff00b6,#ff00ad,#ff00a4,#ff009c,#ff0095,#ff008e,#ff0088,#ff0083,#ff007d,#ff0078,#ff0074,#ff006f,#ff006b,#ff0067,#ff0064,#ff0060,#ff005d)"></i><i style="background:linear-gradient(90deg,#005bff,#0057ff,#0054ff,#0050ff,#004cff,#0048ff,#0044ff,#0040ff,#003cff,#0039ff,#0034ff,#0030ff,#002cff,#0028ff,#0924ff,#1820ff,#281bff,#3717ff,#4713ff,#570eff,#670aff,#7805ff,#8801ff,#9900ff,#aa00ff,#bb00ff,#cd00ff,#de00ff,#f000ff,#ff00fc,#ff00ec,#ff00dd,#ff00d0,#ff00c4,#ff00ba,#ff00b0,#ff00a7,#ff009f,#ff0098,#ff0091,#ff008b,#ff0085,#ff007f,#ff007a,#ff0076,#ff0071,#ff006d,#ff0069,#ff0065,#ff0062,#ff005f)"></i><i style="background:linear-gradient(90deg,#0059ff,#0055ff,#0052ff,#004eff,#004aff,#0046ff,#0042ff,#003fff,#003bff,#0037ff,#0033ff,#002fff,#002bff,#0027ff,#0822ff,#171eff,#261aff,#3616ff,#4611ff,#550dff,#6509ff,#7604ff,#8600ff,#9600ff,#a700ff,#b800ff,#c900ff,#da00ff,#ec00ff,#fd00ff,#ff00f0,#ff00e1,#ff00d4,#ff00c8,#ff00bd,#ff00b3,#ff00aa,#ff00a2,#ff009a,#ff0093,#ff008d,#ff0087,#ff0082,#ff007c,#ff0078,#ff0073,#ff006f,#ff006b,#ff0067,#ff0064,#ff0060)"></i><i style="background:linear-gradient(90deg,#0057ff,#0053ff,#0050ff,#004cff,#0048ff,#0044ff,#0041ff,#003dff,#0039ff,#0035ff,#0031ff,#002dff,#0029ff,#0025ff,#0721ff,#161dff,#2519ff,#3514ff,#4410ff,#540cff,#6307ff,#7303ff,#8300ff,#9400ff,#a400ff,#b500ff,#c600ff,#d700ff,#e800ff,#f900ff,#ff00f4,#ff00e5,#ff00d7,#ff00cb,#ff00c0,#ff00b6,#ff00ad,#ff00a5,#ff009d,#ff0096,#ff008f,#ff0089,#ff0084,#ff007f,#ff007a,#ff0075,#ff0071,#ff006d,#ff0069,#ff0065,#ff0062)"></i><i style="background:linear-gradient(90deg,#0055ff,#0051ff,#004eff,#004aff,#0046ff,#0043ff,#003fff,#003bff,#0037ff,#0033ff,#0030ff,#002cff,#0028ff,#0024ff,#0720ff,#151bff,#2417ff,#3313ff,#430fff,#520bff,#6106ff,#7102ff,#8100ff,#9100ff,#a100ff,#b200ff,#c200ff,#d300ff,#e400ff,#f500ff,#ff00f8,#ff00e8,#ff00db,#ff00ce,#ff00c3,#ff00b9,#ff00b0,#ff00a7,#ff00a0,#ff0098,#ff0092,#ff008c,#ff0086,#ff0081,#ff007c,#ff0077,#ff0073,#ff006f,#ff006b,#ff0067,#ff0064)"></i><i style="background:linear-gradient(90deg,#0053ff,#004fff,#004cff,#0048ff,#0045ff,#0041ff,#003dff,#0039ff,#0036ff,#0032ff,#002eff,#002aff,#0026ff,#0022ff,#061eff,#141aff,#2316ff,#3212ff,#410eff,#5009ff,#6005ff,#6f01ff,#7f00ff,#8f00ff,#9e00ff,#af00ff,#bf00ff,#cf00ff,#e000ff,#f100ff,#ff00fc,#ff00ec,#ff00de,#ff00d2,#ff00c6,#ff00bc,#ff00b3,#ff00aa,#ff00a2,#ff009b,#ff0094,#ff008e,#ff0088,#ff0083,#ff007e,#ff0079,#ff0075,#ff0070,#ff006d,#ff0069,#ff0065)"></i><i style="background:linear-gradient(90deg,#0051ff,#004dff,#004aff,#0046ff,#0043ff,#003fff,#003bff,#0038ff,#0034ff,#0030ff,#002cff,#0029ff,#0025ff,#0021ff,#051dff,#1419ff,#2215ff,#3111ff,#400dff,#4f08ff,#5e04ff,#6d00ff,#7c00ff,#8c00ff,#9c00ff,#ac00ff,#bc00ff,#cc00ff,#dc00ff,#ed00ff,#fe00ff,#ff00f0,#ff00e2,#ff00d5,#ff00ca,#ff00bf,#ff00b6,#ff00ad,#ff00a5,#ff009d,#ff0097,#ff0090,#ff008a,#ff0085,#ff0080,#ff007b,#ff0077,#ff0072,#ff006e,#ff006b,#ff0067)"></i><i style="background:linear-gradient(90deg,#004fff,#004cff,#0048ff,#0045ff,#0041ff,#003dff,#003aff,#0036ff,#0032ff,#002fff,#002bff,#0027ff,#0023ff,#001fff,#051bff,#1317ff,#2113ff,#300fff,#3e0bff,#4d07ff,#5c03ff,#6b00ff,#7a00ff,#8a00ff,#9900ff,#a900ff,#b900ff,#c900ff,#d900ff,#e900ff,#fa00ff,#ff00f4,#ff00e6,#ff00d8,#ff00cd,#ff00c2,#ff00b8,#ff00b0,#ff00a7,#ff00a0,#ff0099,#ff0093,#ff008d,#ff0087,#ff0082,#ff007d,#ff0078,#ff0074,#ff0070,#ff006c,#ff0069)"></i><i style="background:linear-gradient(90deg,#004dff,#004aff,#0046ff,#0043ff,#003fff,#003cff,#0038ff,#0035ff,#0031ff,#002dff,#0029ff,#0026ff,#0022ff,#001eff,#041aff,#1216ff,#2012ff,#2e0eff,#3d0aff,#4c06ff,#5a02ff,#6900ff,#7800ff,#8700ff,#9700ff,#a600ff,#b600ff,#c500ff,#d500ff,#e600ff,#f600ff,#ff00f8,#ff00e9,#ff00dc,#ff00d0,#ff00c5,#ff00bb,#ff00b2,#ff00aa,#ff00a2,#ff009b,#ff0095,#ff008f,#ff0089,#ff0084,#ff007f,#ff007a,#ff0076,#ff0072,#ff006e,#ff006a)"></i><i style="background:linear-gradient(90deg,#004cff,#0048ff,#0045ff,#0041ff,#003eff,#003aff,#0037ff,#0033ff,#002fff,#002cff,#0028ff,#0024ff,#0021ff,#001dff,#0319ff,#1115ff,#1f11ff,#2d0dff,#3c09ff,#4a05ff,#5901ff,#6700ff,#7600ff,#8500ff,#9400ff,#a300ff,#b300ff,#c200ff,#d200ff,#e200ff,#f200ff,#ff00fc,#ff00ed,#ff00df,#ff00d3,#ff00c8,#ff00be,#ff00b5,#ff00ad,#ff00a5,#ff009e,#ff0097,#ff0091,#ff008b,#ff0086,#ff0081,#ff007c,#ff0078,#ff0074,#ff0070,#ff006c)"></i><i style="background:linear-gradient(90deg,#004aff,#0046ff,#0043ff,#0040ff,#003cff,#0039ff,#0035ff,#0032ff,#002eff,#002aff,#0027ff,#0023ff,#001fff,#001bff,#0318ff,#1114ff,#1e10ff,#2c0cff,#3a08ff,#4904ff,#5700ff,#6500ff,#7400ff,#8300ff,#9200ff,#a100ff,#b000ff,#bf00ff,#cf00ff,#de00ff,#ee00ff,#fe00ff,#ff00f0,#ff00e3,#ff00d6,#ff00cb,#ff00c1,#ff00b8,#ff00af,#ff00a8,#ff00a0,#ff009a,#ff0093,#ff008e,#ff0088,#ff0083,#ff007e,#ff007a,#ff0076,#ff0072,#ff006e)"></i><i style="background:linear-gradient(90deg,#0048ff,#0045ff,#0041ff,#003eff,#003bff,#0037ff,#0034ff,#0030ff,#002dff,#0029ff,#0025ff,#0022ff,#001eff,#001aff,#0216ff,#1013ff,#1d0fff,#2b0bff,#3907ff,#4703ff,#5500ff,#6400ff,#7200ff,#8100ff,#8f00ff,#9e00ff,#ad00ff,#bc00ff,#cc00ff,#db00ff,#eb00ff,#fa00ff,#ff00f4,#ff00e6,#ff00da,#ff00ce,#ff00c4,#ff00bb,#ff00b2,#ff00aa,#ff00a3,#ff009c,#ff0096,#ff0090,#ff008a,#ff0085,#ff0080,#ff007c,#ff0077,#ff0073,#ff0070)"></i><i style="background:linear-gradient(90deg,#0046ff,#0043ff,#0040ff,#003cff,#0039ff,#0036ff,#0032ff,#002fff,#002bff,#0028ff,#0024ff,#0020ff,#001dff,#0019ff,#0215ff,#0f12ff,#1d0eff,#2a0aff,#3806ff,#4602ff,#5400ff,#6200ff,#7000ff,#7e00ff,#8d00ff,#9c00ff,#aa00ff,#b900ff,#c800ff,#d800ff,#e700ff,#f700ff,#ff00f8,#ff00ea,#ff00dd,#ff00d2,#ff00c7,#ff00bd,#ff00b5,#ff00ad,#ff00a5,#ff009e,#ff0098,#ff0092,#ff008c,#ff0087,#ff0082,#ff007e,#ff0079,#ff0075,#ff0071)"></i><i style="background:linear-gradient(90deg,#0045ff,#0042ff,#003eff,#003bff,#0038ff,#0034ff,#0031ff,#002dff,#002aff,#0026ff,#0023ff,#001fff,#001bff,#0018ff,#0114ff,#0e10ff,#1c0dff,#2909ff,#3705ff,#4401ff,#5200ff,#6000ff,#6e00ff,#7c00ff,#8b00ff,#9900ff,#a800ff,#b700ff,#c500ff,#d400ff,#e400ff,#f300ff,#ff00fc,#ff00ed,#ff00e0,#ff00d5,#ff00ca,#ff00c0,#ff00b7,#ff00af,#ff00a8,#ff00a1,#ff009a,#ff0094,#ff008e,#ff0089,#ff0084,#ff007f,#ff007b,#ff0077,#ff0073)"></i><i style="background:linear-gradient(90deg,#0043ff,#0040ff,#003dff,#0039ff,#0036ff,#0033ff,#002fff,#002cff,#0028ff,#0025ff,#0021ff,#001eff,#001aff,#0017ff,#0113ff,#0e0fff,#1b0cff,#2808ff,#3604ff,#4300ff,#5100ff,#5e00ff,#6c00ff,#7a00ff,#8900ff,#9700ff,#a500ff,#b400ff,#c200ff,#d100ff,#e000ff,#ef00ff,#ff00ff,#ff00f1,#ff00e4,#ff00d8,#ff00cd,#ff00c3,#ff00ba,#ff00b2,#ff00aa,#ff00a3,#ff009c,#ff0096,#ff0091,#ff008b,#ff0086,#ff0081,#ff007d,#ff0079,#ff0075)"></i><i style="background:linear-gradient(90deg,#0042ff,#003eff,#003bff,#0038ff,#0035ff,#0031ff,#002eff,#002bff,#0027ff,#0024ff,#0020ff,#001dff,#0019ff,#0016ff,#0012ff,#0d0eff,#1a0bff,#2707ff,#3403ff,#4200ff,#4f00ff,#5d00ff,#6b00ff,#7800ff,#8600ff,#9400ff,#a300ff,#b100ff,#c000ff,#ce00ff,#dd00ff,#ec00ff,#fb00ff,#ff00f4,#ff00e7,#ff00db,#ff00d0,#ff00c6,#ff00bd,#ff00b4,#ff00ad,#ff00a5,#ff009f,#ff0098,#ff0093,#ff008d,#ff0088,#ff0083,#ff007f,#ff007b,#ff0076)"></i><i style="background:linear-gradient(90deg,#0040ff,#003dff,#003aff,#0037ff,#0033ff,#0030ff,#002dff,#0029ff,#0026ff,#0022ff,#001fff,#001bff,#0018ff,#0014ff,#0011ff,#0c0dff,#190aff,#2606ff,#3302ff,#4000ff,#4e00ff,#5b00ff,#6900ff,#7600ff,#8400ff,#9200ff,#a000ff,#ae00ff,#bd00ff,#cb00ff,#da00ff,#e900ff,#f700ff,#ff00f8,#ff00ea,#ff00de,#ff00d3,#ff00c9,#ff00c0,#ff00b7,#ff00af,#ff00a8,#ff00a1,#ff009b,#ff0095,#ff008f,#ff008a,#ff0085,#ff0081,#ff007c,#ff0078)"></i><i style="background:linear-gradient(90deg,#003fff,#003cff,#0038ff,#0035ff,#0032ff,#002fff,#002bff,#0028ff,#0025ff,#0021ff,#001eff,#001aff,#0017ff,#0013ff,#0010ff,#0c0cff,#1809ff,#2505ff,#3201ff,#3f00ff,#4c00ff,#5a00ff,#6700ff,#7500ff,#8200ff,#9000ff,#9e00ff,#ac00ff,#ba00ff,#c800ff,#d700ff,#e500ff,#f400ff,#ff00fb,#ff00ee,#ff00e1,#ff00d6,#ff00cc,#ff00c2,#ff00ba,#ff00b2,#ff00aa,#ff00a3,#ff009d,#ff0097,#ff0091,#ff008c,#ff0087,#ff0082,#ff007e,#ff007a)"></i><i style="background:linear-gradient(90deg,#003dff,#003aff,#0037ff,#0034ff,#0031ff,#002dff,#002aff,#0027ff,#0023ff,#0020ff,#001dff,#0019ff,#0016ff,#0012ff,#000fff,#0b0bff,#1808ff,#2404ff,#3100ff,#3e00ff,#4b00ff,#5800ff,#6500ff,#7300ff,#8000ff,#8e00ff,#9c00ff,#a900ff,#b700ff,#c500ff,#d400ff,#e200ff,#f000ff,#ff00ff,#ff00f1,#ff00e4,#ff00d9,#ff00cf,#ff00c5,#ff00bc,#ff00b4,#ff00ad,#ff00a6,#ff009f,#ff0099,#ff0093,#ff008e,#ff0089,#ff0084,#ff0080,#ff007c)"></i><i style="background:linear-gradient(90deg,#003cff,#0039ff,#0036ff,#0032ff,#002fff,#002cff,#0029ff,#0025ff,#0022ff,#001fff,#001bff,#0018ff,#0015ff,#0011ff,#000eff,#0b0aff,#1707ff,#2303ff,#3000ff,#3d00ff,#4a00ff,#5700ff,#6400ff,#7100ff,#7e00ff,#8c00ff,#9900ff,#a700ff,#b500ff,#c300ff,#d100ff,#df00ff,#ed00ff,#fb00ff,#ff00f4,#ff00e8,#ff00dc,#ff00d1,#ff00c8,#ff00bf,#ff00b7,#ff00af,#ff00a8,#ff00a1,#ff009b,#ff0095,#ff0090,#ff008b,#ff0086,#ff0082,#ff007d)"></i><i style="background:linear-gradient(90deg,#003aff,#0037ff,#0034ff,#0031ff,#002eff,#002bff,#0027ff,#0024ff,#0021ff,#001eff,#001aff,#0017ff,#0014ff,#0010ff,#000dff,#0a09ff,#1606ff,#2302ff,#2f00ff,#3c00ff,#4800ff,#5500ff,#6200ff,#6f00ff,#7c00ff,#8a00ff,#9700ff,#a400ff,#b200ff,#c000ff,#ce00ff,#dc00ff,#ea00ff,#f800ff,#ff00f8,#ff00eb,#ff00df,#ff00d4,#ff00ca,#ff00c1,#ff00b9,#ff00b1,#ff00aa,#ff00a3,#ff009d,#ff0097,#ff0092,#ff008d,#ff0088,#ff0083,#ff007f)"></i><i style="background:linear-gradient(90deg,#0039ff,#0036ff,#0033ff,#0030ff,#002dff,#0029ff,#0026ff,#0023ff,#0020ff,#001dff,#0019ff,#0016ff,#0013ff,#000fff,#000cff,#0908ff,#1605ff,#2201ff,#2e00ff,#3b00ff,#4700ff,#5400ff,#6100ff,#6d00ff,#7a00ff,#8800ff,#9500ff,#a200ff,#b000ff,#bd00ff,#cb00ff,#d900ff,#e700ff,#f500ff,#ff00fb,#ff00ee,#ff00e2,#ff00d7,#ff00cd,#ff00c4,#ff00bc,#ff00b4,#ff00ac,#ff00a6,#ff009f,#ff0099,#ff0094,#ff008f,#ff008a,#ff0085,#ff0081)"></i><i style="background:linear-gradient(90deg,#0038ff,#0035ff,#0032ff,#002fff,#002bff,#0028ff,#0025ff,#0022ff,#001fff,#001bff,#0018ff,#0015ff,#0012ff,#000eff,#000bff,#0907ff,#1504ff,#2101ff,#2d00ff,#3900ff,#4600ff,#5200ff,#5f00ff,#6c00ff,#7900ff,#8600ff,#9300ff,#a000ff,#ad00ff,#bb00ff,#c800ff,#d600ff,#e300ff,#f100ff,#ff00ff,#ff00f1,#ff00e5,#ff00da,#ff00d0,#ff00c7,#ff00be,#ff00b6,#ff00af,#ff00a8,#ff00a2,#ff009c,#ff0096,#ff0091,#ff008c,#ff0087,#ff0083)"></i><i style="background:linear-gradient(90deg,#0036ff,#0033ff,#0030ff,#002dff,#002aff,#0027ff,#0024ff,#0021ff,#001eff,#001aff,#0017ff,#0014ff,#0011ff,#000dff,#000aff,#0807ff,#1403ff,#2000ff,#2c00ff,#3800ff,#4500ff,#5100ff,#5e00ff,#6a00ff,#7700ff,#8400ff,#9100ff,#9e00ff,#ab00ff,#b800ff,#c500ff,#d300ff,#e000ff,#ee00ff,#fc00ff,#ff00f5,#ff00e8,#ff00dd,#ff00d3,#ff00c9,#ff00c1,#ff00b9,#ff00b1,#ff00aa,#ff00a4,#ff009e,#ff0098,#ff0093,#ff008e,#ff0089,#ff0084)"></i><i style="background:linear-gradient(90deg,#0035ff,#0032ff,#002fff,#002cff,#0029ff,#0026ff,#0023ff,#0020ff,#001dff,#0019ff,#0016ff,#0013ff,#0010ff,#000cff,#0009ff,#0806ff,#1302ff,#1f00ff,#2b00ff,#3700ff,#4300ff,#5000ff,#5c00ff,#6900ff,#7500ff,#8200ff,#8f00ff,#9b00ff,#a800ff,#b500ff,#c300ff,#d000ff,#dd00ff,#eb00ff,#f900ff,#ff00f8,#ff00eb,#ff00e0,#ff00d6,#ff00cc,#ff00c3,#ff00bb,#ff00b3,#ff00ac,#ff00a6,#ff00a0,#ff009a,#ff0095,#ff008f,#ff008b,#ff0086)"></i><i style="background:linear-gradient(90deg,#0034ff,#0031ff,#002eff,#002bff,#0028ff,#0025ff,#0022ff,#001fff,#001bff,#0018ff,#0015ff,#0012ff,#000fff,#000bff,#0008ff,#0705ff,#1302ff,#1f00ff,#2a00ff,#3600ff,#4200ff,#4e00ff,#5b00ff,#6700ff,#7300ff,#8000ff,#8d00ff,#9900ff,#a600ff,#b300ff,#c000ff,#cd00ff,#db00ff,#e800ff,#f500ff,#ff00fb,#ff00ee,#ff00e3,#ff00d8,#ff00cf,#ff00c6,#ff00bd,#ff00b6,#ff00af,#ff00a8,#ff00a2,#ff009c,#ff0097,#ff0091,#ff008d,#ff0088)"></i><i style="background:linear-gradient(90deg,#0033ff,#0030ff,#002dff,#002aff,#0027ff,#0024ff,#0021ff,#001eff,#001aff,#0017ff,#0014ff,#0011ff,#000eff,#000bff,#0007ff,#0704ff,#1201ff,#1e00ff,#2900ff,#3500ff,#4100ff,#4d00ff,#5900ff,#6500ff,#7200ff,#7e00ff,#8b00ff,#9700ff,#a400ff,#b100ff,#be00ff,#cb00ff,#d800ff,#e500ff,#f200ff,#ff00fe,#ff00f1,#ff00e6,#ff00db,#ff00d1,#ff00c8,#ff00c0,#ff00b8,#ff00b1,#ff00aa,#ff00a4,#ff009e,#ff0098,#ff0093,#ff008e,#ff008a)"></i><i style="background:linear-gradient(90deg,#0031ff,#002eff,#002cff,#0029ff,#0026ff,#0023ff,#0020ff,#001cff,#0019ff,#0016ff,#0013ff,#0010ff,#000dff,#000aff,#0006ff,#0603ff,#1200ff,#1d00ff,#2900ff,#3400ff,#4000ff,#4c00ff,#5800ff,#6400ff,#7000ff,#7c00ff,#8900ff,#9500ff,#a200ff,#ae00ff,#bb00ff,#c800ff,#d500ff,#e200ff,#ef00ff,#fc00ff,#ff00f5,#ff00e9,#ff00de,#ff00d4,#ff00cb,#ff00c2,#ff00ba,#ff00b3,#ff00ac,#ff00a6,#ff00a0,#ff009a,#ff0095,#ff0090,#ff008b)"></i><i style="background:linear-gradient(90deg,#0030ff,#002dff,#002aff,#0027ff,#0024ff,#0022ff,#001fff,#001bff,#0018ff,#0015ff,#0012ff,#000fff,#000cff,#0009ff,#0006ff,#0602ff,#1100ff,#1c00ff,#2800ff,#3300ff,#3f00ff,#4b00ff,#5700ff,#6200ff,#6e00ff,#7b00ff,#8700ff,#9300ff,#9f00ff,#ac00ff,#b900ff,#c500ff,#d200ff,#df00ff,#ec00ff,#f900ff,#ff00f8,#ff00ec,#ff00e1,#ff00d7,#ff00cd,#ff00c5,#ff00bd,#ff00b5,#ff00af,#ff00a8,#ff00a2,#ff009c,#ff0097,#ff0092,#ff008d)"></i><i style="background:linear-gradient(90deg,#002fff,#002cff,#0029ff,#0026ff,#0023ff,#0020ff,#001dff,#001aff,#0017ff,#0014ff,#0011ff,#000eff,#000bff,#0008ff,#0005ff,#0502ff,#1000ff,#1c00ff,#2700ff,#3200ff,#3e00ff,#4900ff,#5500ff,#6100ff,#6d00ff,#7900ff,#8500ff,#9100ff,#9d00ff,#aa00ff,#b600ff,#c300ff,#cf00ff,#dc00ff,#e900ff,#f600ff,#ff00fb,#ff00ef,#ff00e4,#ff00d9,#ff00d0,#ff00c7,#ff00bf,#ff00b8,#ff00b1,#ff00aa,#ff00a4,#ff009e,#ff0099,#ff0094,#ff008f)"></i><i style="background:linear-gradient(90deg,#002eff,#002bff,#0028ff,#0025ff,#0022ff,#001fff,#001cff,#0019ff,#0016ff,#0013ff,#0010ff,#000dff,#000aff,#0007ff,#0004ff,#0501ff,#1000ff,#1b00ff,#2600ff,#3100ff,#3d00ff,#4800ff,#5400ff,#6000ff,#6b00ff,#7700ff,#8300ff,#8f00ff,#9b00ff,#a800ff,#b400ff,#c000ff,#cd00ff,#d900ff,#e600ff,#f300ff,#ff00fe,#ff00f2,#ff00e6,#ff00dc,#ff00d3,#ff00ca,#ff00c2,#ff00ba,#ff00b3,#ff00ac,#ff00a6,#ff00a0,#ff009b,#ff0096,#ff0091)"></i><i style="background:linear-gradient(90deg,#002dff,#002aff,#0027ff,#0024ff,#0021ff,#001eff,#001bff,#0019ff,#0016ff,#0013ff,#0010ff,#000cff,#0009ff,#0006ff,#0003ff,#0400ff,#0f00ff,#1a00ff,#2500ff,#3000ff,#3c00ff,#4700ff,#5300ff,#5e00ff,#6a00ff,#7600ff,#8100ff,#8d00ff,#9900ff,#a500ff,#b200ff,#be00ff,#ca00ff,#d700ff,#e300ff,#f000ff,#fd00ff,#ff00f5,#ff00e9,#ff00df,#ff00d5,#ff00cc,#ff00c4,#ff00bc,#ff00b5,#ff00ae,#ff00a8,#ff00a2,#ff009d,#ff0098,#ff0093)"></i><i style="background:linear-gradient(90deg,#002cff,#0029ff,#0026ff,#0023ff,#0020ff,#001dff,#001bff,#0018ff,#0015ff,#0012ff,#000fff,#000cff,#0009ff,#0006ff,#0002ff,#0400ff,#0f00ff,#1900ff,#2400ff,#3000ff,#3b00ff,#4600ff,#5100ff,#5d00ff,#6800ff,#7400ff,#8000ff,#8b00ff,#9700ff,#a300ff,#af00ff,#bb00ff,#c800ff,#d400ff,#e100ff,#ed00ff,#fa00ff,#ff00f8,#ff00ec,#ff00e2,#ff00d8,#ff00cf,#ff00c6,#ff00bf,#ff00b7,#ff00b1,#ff00aa,#ff00a4,#ff009f,#ff0099,#ff0094)"></i><i style="background:linear-gradient(90deg,#002bff,#0028ff,#0025ff,#0022ff,#001fff,#001cff,#001aff,#0017ff,#0014ff,#0011ff,#000eff,#000bff,#0008ff,#0005ff,#0002ff,#0300ff,#0e00ff,#1900ff,#2400ff,#2f00ff,#3a00ff,#4500ff,#5000ff,#5b00ff,#6700ff,#7200ff,#7e00ff,#8a00ff,#9500ff,#a100ff,#ad00ff,#b900ff,#c500ff,#d200ff,#de00ff,#ea00ff,#f700ff,#ff00fb,#ff00ef,#ff00e4,#ff00da,#ff00d1,#ff00c9,#ff00c1,#ff00ba,#ff00b3,#ff00ac,#ff00a6,#ff00a1,#ff009b,#ff0096)"></i><i style="background:linear-gradient(90deg,#002aff,#0027ff,#0024ff,#0021ff,#001eff,#001bff,#0019ff,#0016ff,#0013ff,#0010ff,#000dff,#000aff,#0007ff,#0004ff,#0001ff,#0300ff,#0d00ff,#1800ff,#2300ff,#2e00ff,#3900ff,#4400ff,#4f00ff,#5a00ff,#6500ff,#7100ff,#7c00ff,#8800ff,#9300ff,#9f00ff,#ab00ff,#b700ff,#c300ff,#cf00ff,#db00ff,#e700ff,#f400ff,#ff00fe,#ff00f2,#ff00e7,#ff00dd,#ff00d4,#ff00cb,#ff00c3,#ff00bc,#ff00b5,#ff00ae,#ff00a8,#ff00a2,#ff009d,#ff0098)"></i><i style="background:linear-gradient(90deg,#0028ff,#0026ff,#0023ff,#0020ff,#001dff,#001bff,#0018ff,#0015ff,#0012ff,#000fff,#000cff,#0009ff,#0006ff,#0003ff,#0000ff,#0200ff,#0d00ff,#1800ff,#2200ff,#2d00ff,#3800ff,#4300ff,#4e00ff,#5900ff,#6400ff,#6f00ff,#7b00ff,#8600ff,#9200ff,#9d00ff,#a900ff,#b500ff,#c100ff,#cc00ff,#d900ff,#e500ff,#f100ff,#fd00ff,#ff00f5,#ff00ea,#ff00e0,#ff00d6,#ff00ce,#ff00c5,#ff00be,#ff00b7,#ff00b0,#ff00aa,#ff00a4,#ff009f,#ff009a)"></i><i style="background:linear-gradient(90deg,#0027ff,#0025ff,#0022ff,#001fff,#001cff,#001aff,#0017ff,#0014ff,#0011ff,#000eff,#000bff,#0008ff,#0005ff,#0003ff,#0000ff,#0200ff,#0c00ff,#1700ff,#2100ff,#2c00ff,#3700ff,#4200ff,#4d00ff,#5800ff,#6300ff,#6e00ff,#7900ff,#8400ff,#9000ff,#9b00ff,#a700ff,#b200ff,#be00ff,#ca00ff,#d600ff,#e200ff,#ee00ff,#fa00ff,#ff00f8,#ff00ed,#ff00e2,#ff00d9,#ff00d0,#ff00c8,#ff00c0,#ff00b9,#ff00b2,#ff00ac,#ff00a6,#ff00a1,#ff009c)"></i><i style="background:linear-gradient(90deg,#0026ff,#0024ff,#0021ff,#001eff,#001bff,#0019ff,#0016ff,#0013ff,#0010ff,#000dff,#000bff,#0008ff,#0005ff,#0002ff,#0000ff,#0200ff,#0c00ff,#1600ff,#2100ff,#2b00ff,#3600ff,#4100ff,#4b00ff,#5600ff,#6100ff,#6c00ff,#7700ff,#8300ff,#8e00ff,#9900ff,#a500ff,#b000ff,#bc00ff,#c800ff,#d300ff,#df00ff,#eb00ff,#f700ff,#ff00fb,#ff00ef,#ff00e5,#ff00db,#ff00d2,#ff00ca,#ff00c2,#ff00bb,#ff00b5,#ff00ae,#ff00a8,#ff00a3,#ff009d)"></i><i style="background:linear-gradient(90deg,#0025ff,#0023ff,#0020ff,#001dff,#001bff,#0018ff,#0015ff,#0012ff,#000fff,#000dff,#000aff,#0007ff,#0004ff,#0001ff,#0000ff,#0100ff,#0b00ff,#1600ff,#2000ff,#2b00ff,#3500ff,#4000ff,#4a00ff,#5500ff,#6000ff,#6b00ff,#7600ff,#8100ff,#8c00ff,#9700ff,#a300ff,#ae00ff,#ba00ff,#c500ff,#d100ff,#dd00ff,#e900ff,#f400ff,#ff00fe,#ff00f2,#ff00e8,#ff00de,#ff00d5,#ff00cc,#ff00c5,#ff00bd,#ff00b7,#ff00b0,#ff00aa,#ff00a5,#ff009f)"></i><i style="background:linear-gradient(90deg,#0024ff,#0022ff,#001fff,#001cff,#001aff,#0017ff,#0014ff,#0011ff,#000fff,#000cff,#0009ff,#0006ff,#0003ff,#0000ff,#0000ff,#0100ff,#0b00ff,#1500ff,#1f00ff,#2a00ff,#3400ff,#3f00ff,#4900ff,#5400ff,#5f00ff,#6a00ff,#7400ff,#7f00ff,#8a00ff,#9600ff,#a100ff,#ac00ff,#b700ff,#c300ff,#cf00ff,#da00ff,#e600ff,#f200ff,#fe00ff,#ff00f5,#ff00ea,#ff00e0,#ff00d7,#ff00cf,#ff00c7,#ff00c0,#ff00b9,#ff00b2,#ff00ac,#ff00a6,#ff00a1)"></i><i style="background:linear-gradient(90deg,#0023ff,#0021ff,#001eff,#001bff,#0019ff,#0016ff,#0013ff,#0011ff,#000eff,#000bff,#0008ff,#0005ff,#0003ff,#0000ff,#0000ff,#0000ff,#0a00ff,#1400ff,#1f00ff,#2900ff,#3300ff,#3e00ff,#4800ff,#5300ff,#5d00ff,#6800ff,#7300ff,#7e00ff,#8900ff,#9400ff,#9f00ff,#aa00ff,#b500ff,#c100ff,#cc00ff,#d800ff,#e300ff,#ef00ff,#fb00ff,#ff00f8,#ff00ed,#ff00e3,#ff00da,#ff00d1,#ff00c9,#ff00c2,#ff00bb,#ff00b4,#ff00ae,#ff00a8,#ff00a3)"></i><i style="background:linear-gradient(90deg,#0023ff,#0020ff,#001dff,#001bff,#0018ff,#0015ff,#0013ff,#0010ff,#000dff,#000aff,#0007ff,#0005ff,#0002ff,#0000ff,#0000ff,#0000ff,#0a00ff,#1400ff,#1e00ff,#2800ff,#3200ff,#3d00ff,#4700ff,#5200ff,#5c00ff,#6700ff,#7100ff,#7c00ff,#8700ff,#9200ff,#9d00ff,#a800ff,#b300ff,#be00ff,#ca00ff,#d500ff,#e100ff,#ec00ff,#f800ff,#ff00fa,#ff00f0,#ff00e5,#ff00dc,#ff00d3,#ff00cb,#ff00c4,#ff00bd,#ff00b6,#ff00b0,#ff00aa,#ff00a5)"></i><i style="background:linear-gradient(90deg,#0022ff,#001fff,#001cff,#001aff,#0017ff,#0014ff,#0012ff,#000fff,#000cff,#000aff,#0007ff,#0004ff,#0001ff,#0000ff,#0000ff,#0000ff,#0900ff,#1300ff,#1d00ff,#2700ff,#3200ff,#3c00ff,#4600ff,#5100ff,#5b00ff,#6500ff,#7000ff,#7b00ff,#8500ff,#9000ff,#9b00ff,#a600ff,#b100ff,#bc00ff,#c700ff,#d300ff,#de00ff,#ea00ff,#f500ff,#ff00fd,#ff00f2,#ff00e8,#ff00df,#ff00d6,#ff00ce,#ff00c6,#ff00bf,#ff00b8,#ff00b2,#ff00ac,#ff00a7)"></i><i style="background:linear-gradient(90deg,#0021ff,#001eff,#001bff,#0019ff,#0016ff,#0014ff,#0011ff,#000eff,#000cff,#0009ff,#0006ff,#0003ff,#0000ff,#0000ff,#0000ff,#0000ff,#0900ff,#1300ff,#1d00ff,#2700ff,#3100ff,#3b00ff,#4500ff,#4f00ff,#5a00ff,#6400ff,#6f00ff,#7900ff,#8400ff,#8f00ff,#9900ff,#a400ff,#af00ff,#ba00ff,#c500ff,#d000ff,#dc00ff,#e700ff,#f200ff,#fe00ff,#ff00f5,#ff00eb,#ff00e1,#ff00d8,#ff00d0,#ff00c8,#ff00c1,#ff00ba,#ff00b4,#ff00ae,#ff00a8)"></i><i style="background:linear-gradient(90deg,#0020ff,#001dff,#001bff,#0018ff,#0015ff,#0013ff,#0010ff,#000dff,#000bff,#0008ff,#0005ff,#0003ff,#0000ff,#0000ff,#0000ff,#0000ff,#0800ff,#1200ff,#1c00ff,#2600ff,#3000ff,#3a00ff,#4400ff,#4e00ff,#5900ff,#6300ff,#6d00ff,#7800ff,#8200ff,#8d00ff,#9800ff,#a200ff,#ad00ff,#b800ff,#c300ff,#ce00ff,#d900ff,#e400ff,#f000ff,#fb00ff,#ff00f8,#ff00ed,#ff00e4,#ff00db,#ff00d2,#ff00ca,#ff00c3,#ff00bc,#ff00b6,#ff00b0,#ff00aa)"></i><i style="background:linear-gradient(90deg,#001fff,#001cff,#001aff,#0017ff,#0015ff,#0012ff,#000fff,#000dff,#000aff,#0007ff,#0005ff,#0002ff,#0000ff,#0000ff,#0000ff,#0000ff,#0800ff,#1200ff,#1b00ff,#2500ff,#2f00ff,#3900ff,#4300ff,#4d00ff,#5700ff,#6200ff,#6c00ff,#7600ff,#8100ff,#8b00ff,#9600ff,#a000ff,#ab00ff,#b600ff,#c100ff,#cc00ff,#d700ff,#e200ff,#ed00ff,#f800ff,#ff00fa,#ff00f0,#ff00e6,#ff00dd,#ff00d5,#ff00cd,#ff00c5,#ff00be,#ff00b8,#ff00b2,#ff00ac)"></i><i style="background:linear-gradient(90deg,#001eff,#001bff,#0019ff,#0016ff,#0014ff,#0011ff,#000fff,#000cff,#0009ff,#0007ff,#0004ff,#0001ff,#0000ff,#0000ff,#0000ff,#0000ff,#0800ff,#1100ff,#1b00ff,#2500ff,#2e00ff,#3800ff,#4200ff,#4c00ff,#5600ff,#6000ff,#6b00ff,#7500ff,#7f00ff,#8a00ff,#9400ff,#9f00ff,#a900ff,#b400ff,#bf00ff,#ca00ff,#d400ff,#df00ff,#eb00ff,#f600ff,#ff00fd,#ff00f2,#ff00e9,#ff00df,#ff00d7,#ff00cf,#ff00c7,#ff00c0,#ff00ba,#ff00b4,#ff00ae)"></i><i style="background:linear-gradient(90deg,#001dff,#001bff,#0018ff,#0016ff,#0013ff,#0010ff,#000eff,#000bff,#0009ff,#0006ff,#0003ff,#0001ff,#0000ff,#0000ff,#0000ff,#0000ff,#0700ff,#1100ff,#1a00ff,#2400ff,#2e00ff,#3700ff,#4100ff,#4b00ff,#5500ff,#5f00ff,#6900ff,#7300ff,#7e00ff,#8800ff,#9200ff,#9d00ff,#a700ff,#b200ff,#bd00ff,#c700ff,#d200ff,#dd00ff,#e800ff,#f300ff,#fe00ff,#ff00f5,#ff00eb,#ff00e2,#ff00d9,#ff00d1,#ff00ca,#ff00c3,#ff00bc,#ff00b6,#ff00b0)"></i><i style="background:linear-gradient(90deg,#001cff,#001aff,#0017ff,#0015ff,#0012ff,#0010ff,#000dff,#000bff,#0008ff,#0005ff,#0003ff,#0000ff,#0000ff,#0000ff,#0000ff,#0000ff,#0700ff,#1000ff,#1a00ff,#2300ff,#2d00ff,#3700ff,#4000ff,#4a00ff,#5400ff,#5e00ff,#6800ff,#7200ff,#7c00ff,#8600ff,#9100ff,#9b00ff,#a500ff,#b000ff,#bb00ff,#c500ff,#d000ff,#db00ff,#e600ff,#f100ff,#fc00ff,#ff00f8,#ff00ee,#ff00e4,#ff00db,#ff00d3,#ff00cc,#ff00c5,#ff00be,#ff00b8,#ff00b2)"></i><i style="background:linear-gradient(90deg,#001bff,#0019ff,#0017ff,#0014ff,#0011ff,#000fff,#000cff,#000aff,#0007ff,#0005ff,#0002ff,#0000ff,#0000ff,#0000ff,#0000ff,#0000ff,#0600ff,#1000ff,#1900ff,#2300ff,#2c00ff,#3600ff,#3f00ff,#4900ff,#5300ff,#5d00ff,#6700ff,#7100ff,#7b00ff,#8500ff,#8f00ff,#9900ff,#a400ff,#ae00ff,#b900ff,#c300ff,#ce00ff,#d800ff,#e300ff,#ee00ff,#f900ff,#ff00fa,#ff00f0,#ff00e7,#ff00de,#ff00d6,#ff00ce,#ff00c7,#ff00c0,#ff00ba,#ff00b4)"></i><i style="background:linear-gradient(90deg,#001bff,#0018ff,#0016ff,#0013ff,#0011ff,#000eff,#000cff,#0009ff,#0007ff,#0004ff,#0001ff,#0000ff,#0000ff,#0000ff,#0000ff,#0000ff,#0600ff,#0f00ff,#1900ff,#2200ff,#2b00ff,#3500ff,#3e00ff,#4800ff,#5200ff,#5c00ff,#6500ff,#6f00ff,#7900ff,#8300ff,#8d00ff,#9800ff,#a200ff,#ac00ff,#b700ff,#c100ff,#cc00ff,#d600ff,#e100ff,#eb00ff,#f600ff,#ff00fd,#ff00f3,#ff00e9,#ff00e0,#ff00d8,#ff00d0,#ff00c9,#ff00c2,#ff00bb,#ff00b5)"></i><i style="background:linear-gradient(90deg,#001aff,#0017ff,#0015ff,#0012ff,#0010ff,#000dff,#000bff,#0008ff,#0006ff,#0003ff,#0001ff,#0000ff,#0000ff,#0000ff,#0000ff,#0000ff,#0500ff,#0f00ff,#1800ff,#2100ff,#2b00ff,#3400ff,#3e00ff,#4700ff,#5100ff,#5a00ff,#6400ff,#6e00ff,#7800ff,#8200ff,#8c00ff,#9600ff,#a000ff,#aa00ff,#b500ff,#bf00ff,#c900ff,#d400ff,#de00ff,#e900ff,#f400ff,#ff00ff,#ff00f5,#ff00eb,#ff00e2,#ff00da,#ff00d2,#ff00cb,#ff00c4,#ff00bd,#ff00b7)"></i><i style="background:linear-gradient(90deg,#0019ff,#0017ff,#0014ff,#0012ff,#000fff,#000dff,#000aff,#0008ff,#0005ff,#0003ff,#0000ff,#0000ff,#0000ff,#0000ff,#0000ff,#0000ff,#0500ff,#0e00ff,#1700ff,#2100ff,#2a00ff,#3300ff,#3d00ff,#4600ff,#5000ff,#5900ff,#6300ff,#6d00ff,#7700ff,#8000ff,#8a00ff,#9400ff,#9e00ff,#a900ff,#b300ff,#bd00ff,#c700ff,#d200ff,#dc00ff,#e700ff,#f100ff,#fc00ff,#ff00f8,#ff00ee,#ff00e5,#ff00dc,#ff00d4,#ff00cd,#ff00c6,#ff00bf,#ff00b9)"></i><i style="background:linear-gradient(90deg,#0018ff,#0016ff,#0013ff,#0011ff,#000fff,#000cff,#000aff,#0007ff,#0005ff,#0002ff,#0000ff,#0000ff,#0000ff,#0000ff,#0000ff,#0000ff,#0500ff,#0e00ff,#1700ff,#2000ff,#2900ff,#3300ff,#3c00ff,#4500ff,#4f00ff,#5800ff,#6200ff,#6c00ff,#7500ff,#7f00ff,#8900ff,#9300ff,#9d00ff,#a700ff,#b100ff,#bb00ff,#c500ff,#cf00ff,#da00ff,#e400ff,#ef00ff,#f900ff,#ff00fa,#ff00f0,#ff00e7,#ff00de,#ff00d6,#ff00cf,#ff00c8,#ff00c1,#ff00bb)"></i><i style="background:linear-gradient(90deg,#0018ff,#0015ff,#0013ff,#0010ff,#000eff,#000bff,#0009ff,#0006ff,#0004ff,#0001ff,#0000ff,#0000ff,#0000ff,#0000ff,#0000ff,#0000ff,#0400ff,#0d00ff,#1600ff,#1f00ff,#2900ff,#3200ff,#3b00ff,#4400ff,#4e00ff,#5700ff,#6100ff,#6a00ff,#7400ff,#7e00ff,#8700ff,#9100ff,#9b00ff,#a500ff,#af00ff,#b900ff,#c300ff,#cd00ff,#d800ff,#e200ff,#ec00ff,#f700ff,#ff00fd,#ff00f3,#ff00e9,#ff00e1,#ff00d9,#ff00d1,#ff00ca,#ff00c3,#ff00bd)"></i><i style="background:linear-gradient(90deg,#0017ff,#0014ff,#0012ff,#0010ff,#000dff,#000bff,#0008ff,#0006ff,#0003ff,#0001ff,#0000ff,#0000ff,#0000ff,#0000ff,#0000ff,#0000ff,#0400ff,#0d00ff,#1600ff,#1f00ff,#2800ff,#3100ff,#3a00ff,#4300ff,#4d00ff,#5600ff,#6000ff,#6900ff,#7300ff,#7c00ff,#8600ff,#9000ff,#9900ff,#a300ff,#ad00ff,#b700ff,#c100ff,#cb00ff,#d500ff,#e000ff,#ea00ff,#f400ff,#ff00ff,#ff00f5,#ff00ec,#ff00e3,#ff00db,#ff00d3,#ff00cc,#ff00c5,#ff00bf)"></i><i style="background:linear-gradient(90deg,#0016ff,#0014ff,#0011ff,#000fff,#000cff,#000aff,#0008ff,#0005ff,#0003ff,#0000ff,#0000ff,#0000ff,#0000ff,#0000ff,#0000ff,#0000ff,#0400ff,#0c00ff,#1500ff,#1e00ff,#2700ff,#3000ff,#3900ff,#4300ff,#4c00ff,#5500ff,#5e00ff,#6800ff,#7100ff,#7b00ff,#8400ff,#8e00ff,#9800ff,#a200ff,#ab00ff,#b500ff,#bf00ff,#c900ff,#d300ff,#dd00ff,#e800ff,#f200ff,#fc00ff,#ff00f8,#ff00ee,#ff00e5,#ff00dd,#ff00d5,#ff00ce,#ff00c7,#ff00c1)"></i><i style="background:linear-gradient(90deg,#0015ff,#0013ff,#0011ff,#000eff,#000cff,#0009ff,#0007ff,#0005ff,#0002ff,#0000ff,#0000ff,#0000ff,#0000ff,#0000ff,#0000ff,#0000ff,#0300ff,#0c00ff,#1500ff,#1e00ff,#2700ff,#3000ff,#3900ff,#4200ff,#4b00ff,#5400ff,#5d00ff,#6700ff,#7000ff,#7900ff,#8300ff,#8d00ff,#9600ff,#a000ff,#aa00ff,#b300ff,#bd00ff,#c700ff,#d100ff,#db00ff,#e500ff,#f000ff,#fa00ff,#ff00fa,#ff00f0,#ff00e7,#ff00df,#ff00d7,#ff00d0,#ff00c9,#ff00c3)"></i><i style="background:linear-gradient(90deg,#0015ff,#0012ff,#0010ff,#000eff,#000bff,#0009ff,#0006ff,#0004ff,#0001ff,#0000ff,#0000ff,#0000ff,#0000ff,#0000ff,#0000ff,#0000ff,#0300ff,#0b00ff,#1400ff,#1d00ff,#2600ff,#2f00ff,#3800ff,#4100ff,#4a00ff,#5300ff,#5c00ff,#6500ff,#6f00ff,#7800ff,#8200ff,#8b00ff,#9500ff,#9e00ff,#a800ff,#b200ff,#bb00ff,#c500ff,#cf00ff,#d900ff,#e300ff,#ed00ff,#f700ff,#ff00fc,#ff00f3,#ff00ea,#ff00e1,#ff00d9,#ff00d2,#ff00cb,#ff00c4)"></i><i style="background:linear-gradient(90deg,#0014ff,#0012ff,#000fff,#000dff,#000aff,#0008ff,#0006ff,#0003ff,#0001ff,#0000ff,#0000ff,#0000ff,#0000ff,#0000ff,#0000ff,#0000ff,#0200ff,#0b00ff,#1400ff,#1c00ff,#2500ff,#2e00ff,#3700ff,#4000ff,#4900ff,#5200ff,#5b00ff,#6400ff,#6e00ff,#7700ff,#8000ff,#8a00ff,#9300ff,#9d00ff,#a600ff,#b000ff,#b900ff,#c300ff,#cd00ff,#d700ff,#e100ff,#eb00ff,#f500ff,#ff00ff,#ff00f5,#ff00ec,#ff00e4,#ff00dc,#ff00d4,#ff00cd,#ff00c6)"></i><i style="background:linear-gradient(90deg,#0013ff,#0011ff,#000fff,#000cff,#000aff,#0007ff,#0005ff,#0003ff,#0000ff,#0000ff,#0000ff,#0000ff,#0000ff,#0000ff,#0000ff,#0000ff,#0200ff,#0b00ff,#1300ff,#1c00ff,#2500ff,#2d00ff,#3600ff,#3f00ff,#4800ff,#5100ff,#5a00ff,#6300ff,#6c00ff,#7600ff,#7f00ff,#8800ff,#9200ff,#9b00ff,#a400ff,#ae00ff,#b800ff,#c100ff,#cb00ff,#d500ff,#df00ff,#e900ff,#f300ff,#fd00ff,#ff00f8,#ff00ee,#ff00e6,#ff00de,#ff00d6,#ff00cf,#ff00c8)"></i><i style="background:linear-gradient(90deg,#0012ff,#0010ff,#000eff,#000cff,#0009ff,#0007ff,#0005ff,#0002ff,#0000ff,#0000ff,#0000ff,#0000ff,#0000ff,#0000ff,#0000ff,#0000ff,#0200ff,#0a00ff,#1300ff,#1b00ff,#2400ff,#2d00ff,#3600ff,#3e00ff,#4700ff,#5000ff,#5900ff,#6200ff,#6b00ff,#7400ff,#7d00ff,#8700ff,#9000ff,#9900ff,#a300ff,#ac00ff,#b600ff,#bf00ff,#c900ff,#d300ff,#dc00ff,#e600ff,#f000ff,#fa00ff,#ff00fa,#ff00f1,#ff00e8,#ff00e0,#ff00d8,#ff00d1,#ff00ca)"></i><i style="background:linear-gradient(90deg,#0012ff,#000fff,#000dff,#000bff,#0009ff,#0006ff,#0004ff,#0002ff,#0000ff,#0000ff,#0000ff,#0000ff,#0000ff,#0000ff,#0000ff,#0000ff,#0100ff,#0a00ff,#1200ff,#1b00ff,#2300ff,#2c00ff,#3500ff,#3e00ff,#4600ff,#4f00ff,#5800ff,#6100ff,#6a00ff,#7300ff,#7c00ff,#8500ff,#8f00ff,#9800ff,#a100ff,#ab00ff,#b400ff,#bd00ff,#c700ff,#d100ff,#da00ff,#e400ff,#ee00ff,#f800ff,#ff00fc,#ff00f3,#ff00ea,#ff00e2,#ff00da,#ff00d3,#ff00cc)"></i><i style="background:linear-gradient(90deg,#0011ff,#000fff,#000dff,#000aff,#0008ff,#0006ff,#0003ff,#0001ff,#0000ff,#0000ff,#0000ff,#0000ff,#0000ff,#0000ff,#0000ff,#0000ff,#0100ff,#0900ff,#1200ff,#1a00ff,#2300ff,#2b00ff,#3400ff,#3d00ff,#4500ff,#4e00ff,#5700ff,#6000ff,#6900ff,#7200ff,#7b00ff,#8400ff,#8d00ff,#9600ff,#a000ff,#a900ff,#b200ff,#bc00ff,#c500ff,#cf00ff,#d800ff,#e200ff,#ec00ff,#f500ff,#ff00ff,#ff00f5,#ff00ec,#ff00e4,#ff00dc,#ff00d5,#ff00ce)"></i><i style="background:linear-gradient(90deg,#0010ff,#000eff,#000cff,#000aff,#0007ff,#0005ff,#0003ff,#0000ff,#0000ff,#0000ff,#0000ff,#0000ff,#0000ff,#0000ff,#0000ff,#0000ff,#0100ff,#0900ff,#1100ff,#1a00ff,#2200ff,#2b00ff,#3300ff,#3c00ff,#4500ff,#4d00ff,#5600ff,#5f00ff,#6800ff,#7100ff,#7a00ff,#8300ff,#8c00ff,#9500ff,#9e00ff,#a700ff,#b100ff,#ba00ff,#c300ff,#cd00ff,#d600ff,#e000ff,#e900ff,#f300ff,#fd00ff,#ff00f8,#ff00ef,#ff00e6,#ff00de,#ff00d7,#ff00d0)"></i><i style="background:linear-gradient(90deg,#0010ff,#000eff,#000bff,#0009ff,#0007ff,#0004ff,#0002ff,#0000ff,#0000ff,#0000ff,#0000ff,#0000ff,#0000ff,#0000ff,#0000ff,#0000ff,#0000ff,#0900ff,#1100ff,#1900ff,#2200ff,#2a00ff,#3300ff,#3b00ff,#4400ff,#4c00ff,#5500ff,#5e00ff,#6700ff,#6f00ff,#7800ff,#8100ff,#8a00ff,#9300ff,#9c00ff,#a600ff,#af00ff,#b800ff,#c100ff,#cb00ff,#d400ff,#de00ff,#e700ff,#f100ff,#fb00ff,#ff00fa,#ff00f1,#ff00e8,#ff00e0,#ff00d9,#ff00d2)"></i><i style="background:linear-gradient(90deg,#000fff,#000dff,#000bff,#0008ff,#0006ff,#0004ff,#0002ff,#0000ff,#0000ff,#0000ff,#0000ff,#0000ff,#0000ff,#0000ff,#0000ff,#0000ff,#0000ff,#0800ff,#1000ff,#1900ff,#2100ff,#2900ff,#3200ff,#3a00ff,#4300ff,#4b00ff,#5400ff,#5d00ff,#6500ff,#6e00ff,#7700ff,#8000ff,#8900ff,#9200ff,#9b00ff,#a400ff,#ad00ff,#b600ff,#c000ff,#c900ff,#d200ff,#dc00ff,#e500ff,#ef00ff,#f800ff,#ff00fc,#ff00f3,#ff00ea,#ff00e2,#ff00db,#ff00d4)"></i><i style="background:linear-gradient(90deg,#000eff,#000cff,#000aff,#0008ff,#0006ff,#0003ff,#0001ff,#0000ff,#0000ff,#0000ff,#0000ff,#0000ff,#0000ff,#0000ff,#0000ff,#0000ff,#0000ff,#0800ff,#1000ff,#1800ff,#2100ff,#2900ff,#3100ff,#3a00ff,#4200ff,#4b00ff,#5300ff,#5c00ff,#6400ff,#6d00ff,#7600ff,#7f00ff,#8800ff,#9000ff,#9900ff,#a200ff,#ab00ff,#b500ff,#be00ff,#c700ff,#d000ff,#da00ff,#e300ff,#ec00ff,#f600ff,#ff00ff,#ff00f5,#ff00ed,#ff00e5,#ff00dd,#ff00d6)"></i><i style="background:linear-gradient(90deg,#000eff,#000cff,#0009ff,#0007ff,#0005ff,#0003ff,#0001ff,#0000ff,#0000ff,#0000ff,#0000ff,#0000ff,#0000ff,#0000ff,#0000ff,#0000ff,#0000ff,#0700ff,#1000ff,#1800ff,#2000ff,#2800ff,#3100ff,#3900ff,#4100ff,#4a00ff,#5200ff,#5b00ff,#6300ff,#6c00ff,#7500ff,#7d00ff,#8600ff,#8f00ff,#9800ff,#a100ff,#aa00ff,#b300ff,#bc00ff,#c500ff,#ce00ff,#d800ff,#e100ff,#ea00ff,#f400ff,#fd00ff,#ff00f8,#ff00ef,#ff00e7,#ff00df,#ff00d8)"></i><i style="background:linear-gradient(90deg,#000dff,#000bff,#0009ff,#0007ff,#0004ff,#0002ff,#0000ff,#0000ff,#0000ff,#0000ff,#0000ff,#0000ff,#0000ff,#0000ff,#0000ff,#0000ff,#0000ff,#0700ff,#0f00ff,#1700ff,#1f00ff,#2800ff,#3000ff,#3800ff,#4000ff,#4900ff,#5100ff,#5a00ff,#6200ff,#6b00ff,#7300ff,#7c00ff,#8500ff,#8e00ff,#9600ff,#9f00ff,#a800ff,#b100ff,#ba00ff,#c300ff,#cc00ff,#d600ff,#df00ff,#e800ff,#f100ff,#fb00ff,#ff00fa,#ff00f1,#ff00e9,#ff00e1,#ff00da)"></i><i style="background:linear-gradient(90deg,#000dff,#000aff,#0008ff,#0006ff,#0004ff,#0002ff,#0000ff,#0000ff,#0000ff,#0000ff,#0000ff,#0000ff,#0000ff,#0000ff,#0000ff,#0000ff,#0000ff,#0700ff,#0f00ff,#1700ff,#1f00ff,#2700ff,#2f00ff,#3700ff,#4000ff,#4800ff,#5000ff,#5900ff,#6100ff,#6a00ff,#7200ff,#7b00ff,#8400ff,#8c00ff,#9500ff,#9e00ff,#a700ff,#b000ff,#b800ff,#c100ff,#cb00ff,#d400ff,#dd00ff,#e600ff,#ef00ff,#f900ff,#ff00fc,#ff00f3,#ff00eb,#ff00e3,#ff00dc)"></i><i style="background:linear-gradient(90deg,#000cff,#000aff,#0008ff,#0006ff,#0003ff,#0001ff,#0000ff,#0000ff,#0000ff,#0000ff,#0000ff,#0000ff,#0000ff,#0000ff,#0000ff,#0000ff,#0000ff,#0600ff,#0e00ff,#1600ff,#1e00ff,#2600ff,#2f00ff,#3700ff,#3f00ff,#4700ff,#4f00ff,#5800ff,#6000ff,#6900ff,#7100ff,#7a00ff,#8200ff,#8b00ff,#9400ff,#9c00ff,#a500ff,#ae00ff,#b700ff,#c000ff,#c900ff,#d200ff,#db00ff,#e400ff,#ed00ff,#f600ff,#ff00fe,#ff00f5,#ff00ed,#ff00e5,#ff00de)"></i><i style="background:linear-gradient(90deg,#000bff,#0009ff,#0007ff,#0005ff,#0003ff,#0001ff,#0000ff,#0000ff,#0000ff,#0000ff,#0000ff,#0000ff,#0000ff,#0000ff,#0000ff,#0000ff,#0000ff,#0600ff,#0e00ff,#1600ff,#1e00ff,#2600ff,#2e00ff,#3600ff,#3e00ff,#4600ff,#4f00ff,#5700ff,#5f00ff,#6800ff,#7000ff,#7800ff,#8100ff,#8a00ff,#9200ff,#9b00ff,#a400ff,#ac00ff,#b500ff,#be00ff,#c700ff,#d000ff,#d900ff,#e200ff,#eb00ff,#f400ff,#fd00ff,#ff00f8,#ff00ef,#ff00e7,#ff00e0)"></i><i style="background:linear-gradient(90deg,#000bff,#0009ff,#0007ff,#0004ff,#0002ff,#0000ff,#0000ff,#0000ff,#0000ff,#0000ff,#0000ff,#0000ff,#0000ff,#0000ff,#0000ff,#0000ff,#0000ff,#0600ff,#0e00ff,#1500ff,#1d00ff,#2500ff,#2d00ff,#3500ff,#3d00ff,#4600ff,#4e00ff,#5600ff,#5e00ff,#6700ff,#6f00ff,#7700ff,#8000ff,#8800ff,#9100ff,#9900ff,#a200ff,#ab00ff,#b300ff,#bc00ff,#c500ff,#ce00ff,#d700ff,#e000ff,#e900ff,#f200ff,#fb00ff,#ff00fa,#ff00f1,#ff00e9,#ff00e2)"></i><i style="background:linear-gradient(90deg,#000aff,#0008ff,#0006ff,#0004ff,#0002ff,#0000ff,#0000ff,#0000ff,#0000ff,#0000ff,#0000ff,#0000ff,#0000ff,#0000ff,#0000ff,#0000ff,#0000ff,#0500ff,#0d00ff,#1500ff,#1d00ff,#2500ff,#2d00ff,#3500ff,#3d00ff,#4500ff,#4d00ff,#5500ff,#5d00ff,#6600ff,#6e00ff,#7600ff,#7f00ff,#8700ff,#8f00ff,#9800ff,#a100ff,#a900ff,#b200ff,#bb00ff,#c300ff,#cc00ff,#d500ff,#de00ff,#e700ff,#f000ff,#f900ff,#ff00fc,#ff00f3,#ff00eb,#ff00e3)"></i></div>
<svg id="layer2" width="1645" height="901" viewBox="0 0 1645 901">
<clipPath id="cpPlot"><rect x="1001.7" y="76.6" width="618.7" height="476.9"/></clipPath>
<path d="M1266.84 539.46 L1265.7 539.98 L1262.08 539.23 L1260.82 538.48 L1259.43 537.52 L1257.79 536.28 L1255.76 534.68 L1253.36 532.74 L1250.64 530.48 L1247.52 527.87 L1243.9 524.87 L1239.83 521.57 L1235.33 517.96 L1230.29 513.85 L1224.57 509.08 L1217.69 503.26 L1209.88 496.59 L1202.05 489.79 L1195.17 483.61 L1189.75 478.54 L1185.21 474.11 L1180.78 469.51 L1175.71 463.94 L1169.81 457.27 L1163.48 449.89 L1156.82 441.81 L1149.88 433.02 L1142.65 423.49 L1135.09 413.24 L1127.31 402.3 L1119.4 390.74 L1111.28 378.41 L1102.94 365.33 L1094.56 351.81 L1086.32 338.1 L1078.11 324.1 L1069.89 309.71 L1061.93 295.25 L1054.49 281.04 L1047.59 266.97 L1041.12 252.95 L1035.11 239.27 L1029.61 226.22 L1024.64 213.78 L1020.16 201.83 L1016.19 190.52 L1012.73 180.01 L1009.82 170.34 L1007.44 161.44 L1005.53 153.24 L1004 145.66 L1002.88 138.78 L1002.19 132.59 L1001.88 126.96 L1001.89 121.75 L1002.23 116.98 L1002.92 112.69 L1003.93 108.83 L1005.21 105.32 L1006.8 102.17 L1008.68 99.41 L1010.82 97 L1013.14 94.89 L1015.67 93.12 L1018.42 91.7 L1021.34 90.54 L1024.38 89.57 L1027.55 88.81 L1030.86 88.28 L1034.28 87.91 L1037.76 87.6 L1041.31 87.36 L1044.96 87.22 L1048.65 87.16 L1052.34 87.12 L1056.01 87.1 L1059.69 87.13 L1063.4 87.2 L1067.15 87.3 L1070.94 87.43 L1074.76 87.6 L1078.64 87.79 L1082.6 88.02 L1086.64 88.28 L1090.76 88.56 L1094.95 88.87 L1099.24 89.21 L1103.62 89.58 L1108.09 89.98 L1112.65 90.4 L1117.33 90.84 L1122.12 91.3 L1127.02 91.79 L1132.04 92.3 L1137.21 92.84 L1142.51 93.39 L1147.95 93.97 L1153.52 94.57 L1159.25 95.19 L1165.11 95.84 L1171.12 96.5 L1177.28 97.19 L1183.61 97.9 L1190.11 98.63 L1196.78 99.37 L1203.61 100.14 L1210.6 100.93 L1217.76 101.75 L1225.09 102.58 L1232.58 103.44 L1240.25 104.32 L1248.09 105.21 L1256.09 106.13 L1264.26 107.07 L1272.59 108.02 L1281.09 109 L1289.75 109.99 L1298.55 111 L1307.44 112.02 L1316.43 113.05 L1325.57 114.1 L1334.8 115.16 L1344.07 116.23 L1353.44 117.31 L1362.9 118.41 L1372.35 119.51 L1381.7 120.59 L1390.92 121.65 L1400.07 122.71 L1409.16 123.75 L1418.18 124.79 L1427.2 125.83 L1436.2 126.87 L1445.06 127.89 L1453.68 128.88 L1461.48 129.77 L1468.69 130.6 L1476.44 131.48 L1485.85 132.56 L1497.92 133.95 L1511.83 135.57 L1525.91 137.2 L1538.47 138.65 L1549.11 139.88 L1558.71 140.98 L1567.53 141.99 L1575.8 142.94 L1583.55 143.84 L1590.67 144.67 L1597.19 145.42 L1603.13 146.11 L1608.45 146.72 L1613.16 147.25 L1617.35 147.73 L1621.11 148.16 L1624.33 148.53 L1627 148.84 L1629.4 149.12 L1631.81 149.4 L1634.36 149.69 L1636.89 149.98 L1639.2 150.25 L1641.09 150.47 L1644.69 150.89Z M1465.2 139.9 L1129.75 108.5 L1181.7 428.9Z" fill="#000" fill-opacity=".38" fill-rule="evenodd" clip-path="url(#cpPlot)"/>
<path d="M1001.7 553.5 V76.6 H1620.4 V553.5" fill="none" stroke="#a0a0a0" stroke-width="1.3"/>
<line x1="1001.7" y1="553.5" x2="1620.4" y2="553.5" stroke="#a0a0a0" stroke-width="1.3"/>
<line x1="1002.2" y1="553.5" x2="1002.2" y2="558.5" stroke="#ccc" stroke-width="1.3"/>
<text x="1002.2" y="574" font-size="13.3" fill="#dcdcdc" stroke="#dcdcdc" stroke-width="0.4" text-anchor="middle">0</text>
<line x1="996.7" y1="553.5" x2="1001.7" y2="553.5" stroke="#ccc" stroke-width="1.3"/>
<text x="996.7" y="558.7" font-size="13.3" fill="#dcdcdc" stroke="#dcdcdc" stroke-width="0.4" text-anchor="end">0</text>
<line x1="1053.7" y1="553.5" x2="1053.7" y2="558.5" stroke="#ccc" stroke-width="1.3"/>
<text x="1053.7" y="574" font-size="13.3" fill="#dcdcdc" stroke="#dcdcdc" stroke-width="0.4" text-anchor="middle">0,05</text>
<line x1="996.7" y1="513.86" x2="1001.7" y2="513.86" stroke="#ccc" stroke-width="1.3"/>
<text x="996.7" y="519.06" font-size="13.3" fill="#dcdcdc" stroke="#dcdcdc" stroke-width="0.4" text-anchor="end">0,05</text>
<line x1="1105.2" y1="553.5" x2="1105.2" y2="558.5" stroke="#ccc" stroke-width="1.3"/>
<text x="1105.2" y="574" font-size="13.3" fill="#dcdcdc" stroke="#dcdcdc" stroke-width="0.4" text-anchor="middle">0,1</text>
<line x1="996.7" y1="474.21" x2="1001.7" y2="474.21" stroke="#ccc" stroke-width="1.3"/>
<text x="996.7" y="479.41" font-size="13.3" fill="#dcdcdc" stroke="#dcdcdc" stroke-width="0.4" text-anchor="end">0,1</text>
<line x1="1156.7" y1="553.5" x2="1156.7" y2="558.5" stroke="#ccc" stroke-width="1.3"/>
<text x="1156.7" y="574" font-size="13.3" fill="#dcdcdc" stroke="#dcdcdc" stroke-width="0.4" text-anchor="middle">0,15</text>
<line x1="996.7" y1="434.56" x2="1001.7" y2="434.56" stroke="#ccc" stroke-width="1.3"/>
<text x="996.7" y="439.76" font-size="13.3" fill="#dcdcdc" stroke="#dcdcdc" stroke-width="0.4" text-anchor="end">0,15</text>
<line x1="1208.2" y1="553.5" x2="1208.2" y2="558.5" stroke="#ccc" stroke-width="1.3"/>
<text x="1208.2" y="574" font-size="13.3" fill="#dcdcdc" stroke="#dcdcdc" stroke-width="0.4" text-anchor="middle">0,2</text>
<line x1="996.7" y1="394.92" x2="1001.7" y2="394.92" stroke="#ccc" stroke-width="1.3"/>
<text x="996.7" y="400.12" font-size="13.3" fill="#dcdcdc" stroke="#dcdcdc" stroke-width="0.4" text-anchor="end">0,2</text>
<line x1="1259.7" y1="553.5" x2="1259.7" y2="558.5" stroke="#ccc" stroke-width="1.3"/>
<text x="1259.7" y="574" font-size="13.3" fill="#dcdcdc" stroke="#dcdcdc" stroke-width="0.4" text-anchor="middle">0,25</text>
<line x1="996.7" y1="355.27" x2="1001.7" y2="355.27" stroke="#ccc" stroke-width="1.3"/>
<text x="996.7" y="360.47" font-size="13.3" fill="#dcdcdc" stroke="#dcdcdc" stroke-width="0.4" text-anchor="end">0,25</text>
<line x1="1311.2" y1="553.5" x2="1311.2" y2="558.5" stroke="#ccc" stroke-width="1.3"/>
<text x="1311.2" y="574" font-size="13.3" fill="#dcdcdc" stroke="#dcdcdc" stroke-width="0.4" text-anchor="middle">0,3</text>
<line x1="996.7" y1="315.63" x2="1001.7" y2="315.63" stroke="#ccc" stroke-width="1.3"/>
<text x="996.7" y="320.83" font-size="13.3" fill="#dcdcdc" stroke="#dcdcdc" stroke-width="0.4" text-anchor="end">0,3</text>
<line x1="1362.7" y1="553.5" x2="1362.7" y2="558.5" stroke="#ccc" stroke-width="1.3"/>
<text x="1362.7" y="574" font-size="13.3" fill="#dcdcdc" stroke="#dcdcdc" stroke-width="0.4" text-anchor="middle">0,35</text>
<line x1="996.7" y1="275.98" x2="1001.7" y2="275.98" stroke="#ccc" stroke-width="1.3"/>
<text x="996.7" y="281.18" font-size="13.3" fill="#dcdcdc" stroke="#dcdcdc" stroke-width="0.4" text-anchor="end">0,35</text>
<line x1="1414.2" y1="553.5" x2="1414.2" y2="558.5" stroke="#ccc" stroke-width="1.3"/>
<text x="1414.2" y="574" font-size="13.3" fill="#dcdcdc" stroke="#dcdcdc" stroke-width="0.4" text-anchor="middle">0,4</text>
<line x1="996.7" y1="236.34" x2="1001.7" y2="236.34" stroke="#ccc" stroke-width="1.3"/>
<text x="996.7" y="241.54" font-size="13.3" fill="#dcdcdc" stroke="#dcdcdc" stroke-width="0.4" text-anchor="end">0,4</text>
<line x1="1465.7" y1="553.5" x2="1465.7" y2="558.5" stroke="#ccc" stroke-width="1.3"/>
<text x="1465.7" y="574" font-size="13.3" fill="#dcdcdc" stroke="#dcdcdc" stroke-width="0.4" text-anchor="middle">0,45</text>
<line x1="996.7" y1="196.69" x2="1001.7" y2="196.69" stroke="#ccc" stroke-width="1.3"/>
<text x="996.7" y="201.89" font-size="13.3" fill="#dcdcdc" stroke="#dcdcdc" stroke-width="0.4" text-anchor="end">0,45</text>
<line x1="1517.2" y1="553.5" x2="1517.2" y2="558.5" stroke="#ccc" stroke-width="1.3"/>
<text x="1517.2" y="574" font-size="13.3" fill="#dcdcdc" stroke="#dcdcdc" stroke-width="0.4" text-anchor="middle">0,5</text>
<line x1="996.7" y1="157.05" x2="1001.7" y2="157.05" stroke="#ccc" stroke-width="1.3"/>
<text x="996.7" y="162.25" font-size="13.3" fill="#dcdcdc" stroke="#dcdcdc" stroke-width="0.4" text-anchor="end">0,5</text>
<line x1="1568.7" y1="553.5" x2="1568.7" y2="558.5" stroke="#ccc" stroke-width="1.3"/>
<text x="1568.7" y="574" font-size="13.3" fill="#dcdcdc" stroke="#dcdcdc" stroke-width="0.4" text-anchor="middle">0,55</text>
<line x1="996.7" y1="117.4" x2="1001.7" y2="117.4" stroke="#ccc" stroke-width="1.3"/>
<text x="996.7" y="122.6" font-size="13.3" fill="#dcdcdc" stroke="#dcdcdc" stroke-width="0.4" text-anchor="end">0,55</text>
<rect x="1178.55" y="153.65" width="12.7" height="12.7" fill="none" stroke="#fff" stroke-width="1.4"/>
<rect x="1161.65" y="137.65" width="12.7" height="12.7" fill="none" stroke="#fff" stroke-width="1.4"/>
<rect x="1147.25" y="122.95" width="12.7" height="12.7" fill="none" stroke="#fff" stroke-width="1.4"/>
<rect x="1135.25" y="110.95" width="12.7" height="12.7" fill="none" stroke="#fff" stroke-width="1.4"/>
<rect x="1123.65" y="99.65" width="12.7" height="12.7" fill="none" stroke="#fff" stroke-width="1.4"/>
<rect x="1201.65" y="156.95" width="12.7" height="12.7" fill="none" stroke="#fff" stroke-width="1.4"/>
<rect x="1202.95" y="142.25" width="12.7" height="12.7" fill="none" stroke="#fff" stroke-width="1.4"/>
<rect x="1203.65" y="130.25" width="12.7" height="12.7" fill="none" stroke="#fff" stroke-width="1.4"/>
<rect x="1204.25" y="118.95" width="12.7" height="12.7" fill="none" stroke="#fff" stroke-width="1.4"/>
<rect x="1205.15" y="106.95" width="12.7" height="12.7" fill="none" stroke="#fff" stroke-width="1.4"/>
<rect x="1186.95" y="176.95" width="12.7" height="12.7" fill="none" stroke="#fff" stroke-width="1.4"/>
<rect x="1174.95" y="178.95" width="12.7" height="12.7" fill="none" stroke="#fff" stroke-width="1.4"/>
<rect x="1162.25" y="181.55" width="12.7" height="12.7" fill="none" stroke="#fff" stroke-width="1.4"/>
<rect x="1149.65" y="182.95" width="12.7" height="12.7" fill="none" stroke="#fff" stroke-width="1.4"/>
<rect x="1138.05" y="185.15" width="12.7" height="12.7" fill="none" stroke="#fff" stroke-width="1.4"/>
<rect x="1215.55" y="190.35" width="12.7" height="12.7" fill="none" stroke="#fff" stroke-width="1.4"/>
<rect x="1234.25" y="208.65" width="12.7" height="12.7" fill="none" stroke="#fff" stroke-width="1.4"/>
<rect x="1252.55" y="228.55" width="12.7" height="12.7" fill="none" stroke="#fff" stroke-width="1.4"/>
<rect x="1277.75" y="253.55" width="12.7" height="12.7" fill="none" stroke="#fff" stroke-width="1.4"/>
<rect x="1309.15" y="283.55" width="12.7" height="12.7" fill="none" stroke="#fff" stroke-width="1.4"/>
<rect x="1195.65" y="203.65" width="12.7" height="12.7" fill="none" stroke="#fff" stroke-width="1.4"/>
<rect x="1193.25" y="239.15" width="12.7" height="12.7" fill="none" stroke="#fff" stroke-width="1.4"/>
<rect x="1189.25" y="282.55" width="12.7" height="12.7" fill="none" stroke="#fff" stroke-width="1.4"/>
<rect x="1183.85" y="337.65" width="12.7" height="12.7" fill="none" stroke="#fff" stroke-width="1.4"/>
<rect x="1175.85" y="420.25" width="12.7" height="12.7" fill="none" stroke="#fff" stroke-width="1.4"/>
<rect x="1245.65" y="166.85" width="12.7" height="12.7" fill="none" stroke="#fff" stroke-width="1.4"/>
<rect x="1297.15" y="157.15" width="12.7" height="12.7" fill="none" stroke="#fff" stroke-width="1.4"/>
<rect x="1344.55" y="150.45" width="12.7" height="12.7" fill="none" stroke="#fff" stroke-width="1.4"/>
<rect x="1397.25" y="141.55" width="12.7" height="12.7" fill="none" stroke="#fff" stroke-width="1.4"/>
<rect x="1459.05" y="131.05" width="12.7" height="12.7" fill="none" stroke="#fff" stroke-width="1.4"/>
<rect x="1198.55" y="174.95" width="12.7" height="12.7" fill="none" stroke="#000" stroke-width="1.5"/>
<circle cx="1185" cy="155.5" r="3.9" fill="#90b490" stroke="#0a0a0a" stroke-width="1.2"/>
<circle cx="1166.6" cy="138.6" r="3.9" fill="#7cb57c" stroke="#0a0a0a" stroke-width="1.2"/>
<circle cx="1153.6" cy="125.6" r="3.9" fill="#6bb76b" stroke="#0a0a0a" stroke-width="1.2"/>
<circle cx="1141.6" cy="115" r="3.9" fill="#5ab85a" stroke="#0a0a0a" stroke-width="1.2"/>
<circle cx="1132.4" cy="105.3" r="3.9" fill="#0abe0a" stroke="#0a0a0a" stroke-width="1.2"/>
<circle cx="1209.9" cy="159.5" r="3.9" fill="#b5b591" stroke="#0a0a0a" stroke-width="1.2"/>
<circle cx="1211.7" cy="145.6" r="3.9" fill="#b7b77d" stroke="#0a0a0a" stroke-width="1.2"/>
<circle cx="1212.6" cy="132.6" r="3.9" fill="#b9b96d" stroke="#0a0a0a" stroke-width="1.2"/>
<circle cx="1212.6" cy="123" r="3.9" fill="#baba5d" stroke="#0a0a0a" stroke-width="1.2"/>
<circle cx="1213.9" cy="113.3" r="3.9" fill="#c3c30f" stroke="#0a0a0a" stroke-width="1.2"/>
<circle cx="1194.3" cy="176.9" r="3.9" fill="#94b1b6" stroke="#0a0a0a" stroke-width="1.2"/>
<circle cx="1181.5" cy="179.5" r="3.9" fill="#82b1b9" stroke="#0a0a0a" stroke-width="1.2"/>
<circle cx="1168" cy="180.6" r="3.9" fill="#73b0bb" stroke="#0a0a0a" stroke-width="1.2"/>
<circle cx="1157.6" cy="182.3" r="3.9" fill="#65b0bd" stroke="#0a0a0a" stroke-width="1.2"/>
<circle cx="1147" cy="183.3" r="3.9" fill="#1eafc8" stroke="#0a0a0a" stroke-width="1.2"/>
<circle cx="1227.5" cy="192" r="3.9" fill="#b08eb1" stroke="#0a0a0a" stroke-width="1.2"/>
<circle cx="1247" cy="211.3" r="3.9" fill="#af79b1" stroke="#0a0a0a" stroke-width="1.2"/>
<circle cx="1266.5" cy="229.3" r="3.9" fill="#ae67b0" stroke="#0a0a0a" stroke-width="1.2"/>
<circle cx="1294.5" cy="253.2" r="3.9" fill="#ad55b0" stroke="#0a0a0a" stroke-width="1.2"/>
<circle cx="1323.5" cy="279.2" r="3.9" fill="#aa00af" stroke="#0a0a0a" stroke-width="1.2"/>
<circle cx="1204.6" cy="205.3" r="3.9" fill="#9090b6" stroke="#0a0a0a" stroke-width="1.2"/>
<circle cx="1202.4" cy="242.3" r="3.9" fill="#7c7cb9" stroke="#0a0a0a" stroke-width="1.2"/>
<circle cx="1199.3" cy="286.3" r="3.9" fill="#6b6bbb" stroke="#0a0a0a" stroke-width="1.2"/>
<circle cx="1195.5" cy="338.1" r="3.9" fill="#5a5abd" stroke="#0a0a0a" stroke-width="1.2"/>
<circle cx="1190.2" cy="407.9" r="3.9" fill="#0a0ac8" stroke="#00003c" stroke-width="1.2"/>
<circle cx="1258.5" cy="169.1" r="3.9" fill="#b68e8e" stroke="#0a0a0a" stroke-width="1.2"/>
<circle cx="1314.7" cy="159.5" r="3.9" fill="#b97979" stroke="#0a0a0a" stroke-width="1.2"/>
<circle cx="1360.6" cy="153.4" r="3.9" fill="#bb6767" stroke="#0a0a0a" stroke-width="1.2"/>
<circle cx="1414.6" cy="146.5" r="3.9" fill="#bd5555" stroke="#0a0a0a" stroke-width="1.2"/>
<circle cx="1461.5" cy="138.2" r="3.9" fill="#c80000" stroke="#0a0a0a" stroke-width="1.2"/>
<circle cx="1208.6" cy="175.3" r="3.9" fill="#fff" stroke="#0a0a0a" stroke-width="1.2"/>
<rect x="1407.5" y="404.5" width="209" height="141.5" fill="#3c3c3c"/>
<rect x="1409.5" y="406.5" width="205" height="137.5" fill="url(#gInset)" stroke="#8a8a8a" stroke-width="1.2"/>
<path d="M1410.1 407.1 L1613.9 407.1 L1613.9 530 L1410.1 420Z" fill="#000" fill-opacity=".38"/>
<rect x="1505.1" y="468.4" width="13" height="13" fill="none" stroke="#fff" stroke-width="1.5"/>
<circle cx="1527.1" cy="477.6" r="3.9" fill="#b4b400" stroke="#111" stroke-width="1.3"/>
</svg>
</body></html>
